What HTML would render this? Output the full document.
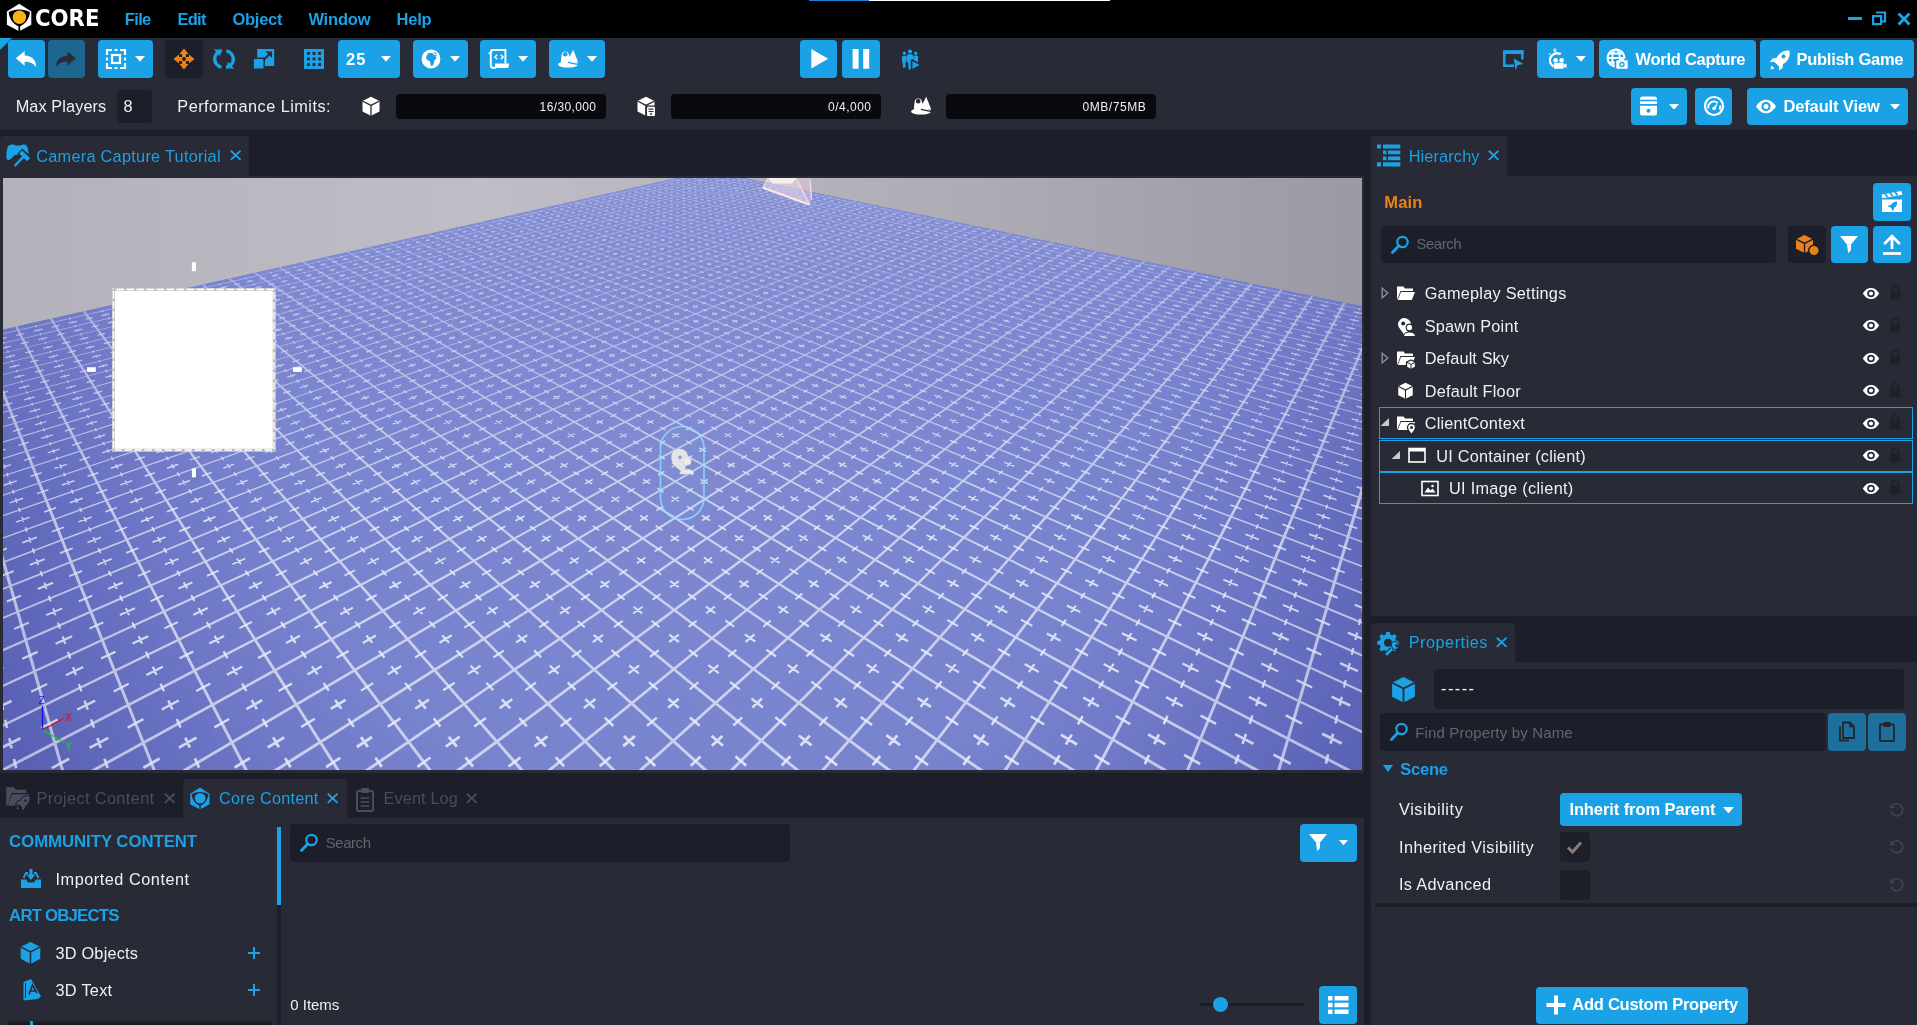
<!DOCTYPE html>
<html><head><meta charset="utf-8"><title>Core Editor</title>
<style>
html,body{margin:0;padding:0;background:#282a35;overflow:hidden}
body{width:1917px;height:1025px;position:relative;font-family:"Liberation Sans",sans-serif;}
#r{position:absolute;left:0;top:0;width:1917px;height:1025px;overflow:hidden;background:#282a35;will-change:transform}
#r div,#r svg,#r span{position:absolute;display:block}
.t{white-space:nowrap;line-height:1}
</style></head><body><div id="r">
<div style="left:0px;top:0px;width:1917px;height:38px;background:#000;"></div>
<div style="left:809.3px;top:0px;width:59.4px;height:1.2px;background:#1a7fd8;"></div>
<div style="left:868.7px;top:0px;width:241.3px;height:1.2px;background:#fff;"></div>
<div style="left:0px;top:130px;width:1917px;height:895px;background:#1c1f29;"></div>
<div style="left:0px;top:136px;width:248.5px;height:42px;background:#282a35;border-radius:4px 4px 0 0;"></div>
<div style="left:0px;top:176px;width:1364px;height:597px;background:#282a35;"></div>
<div style="left:1371px;top:136px;width:136px;height:42px;background:#282a35;border-radius:4px 4px 0 0;"></div>
<div style="left:1371px;top:176px;width:546px;height:440px;background:#282a35;"></div>
<div style="left:1371px;top:623px;width:144px;height:40px;background:#282a35;border-radius:4px 4px 0 0;"></div>
<div style="left:1371px;top:662px;width:546px;height:363px;background:#282a35;"></div>
<div style="left:183px;top:779px;width:163.7px;height:40px;background:#282a35;border-radius:4px 4px 0 0;"></div>
<div style="left:0px;top:818px;width:1364px;height:207px;background:#282a35;"></div>
<svg style="left:3px;top:178px" width="1359" height="592" viewBox="3 178 1359 592"><defs><linearGradient id="sky" x1="0" y1="0" x2="1" y2="0"><stop offset="0" stop-color="#b3b2bb"/><stop offset="0.35" stop-color="#bfbec7"/><stop offset="0.7" stop-color="#aeadb6"/><stop offset="1" stop-color="#9b9aa4"/></linearGradient><filter id="bl" x="0" y="170" width="1370" height="610" filterUnits="userSpaceOnUse"><feGaussianBlur stdDeviation=".55"/></filter><radialGradient id="flr" gradientUnits="userSpaceOnUse" cx="700" cy="400" r="860"><stop offset="0" stop-color="#7f8ad2"/><stop offset="0.5" stop-color="#7883ce"/><stop offset="1" stop-color="#565eb5"/></radialGradient><clipPath id="fc"><path id="fp" d="M-2 330.7L709.1 170.6L1367 307.4L1367 775L-2 775Z"/></clipPath></defs>
<rect x="3" y="178" width="1359" height="592" fill="url(#sky)"/>
<use href="#fp" fill="url(#flr)"/>
<g clip-path="url(#fc)"><g filter="url(#bl)">
<path fill="#eceefa" fill-opacity="0.72" d="M66.6 779.1L-3.6 530.8L-6.5 531.7L63.7 780ZM159.3 778.6L-3.8 371.6L-6.4 372.7L156.5 779.7ZM252 778L17.3 326L15.2 327.1L249.3 779.4ZM344.5 777.5L51.9 318.2L50 319.3L342 779.1ZM439 779.7L84.8 310.7L83.2 311.9L436.6 781.5ZM531.7 779.2L116.3 303.6L114.9 304.8L529.4 781.2ZM624.3 778.7L146.5 296.8L145.3 298L622.2 780.9ZM716.8 778.3L175.4 290.3L174.3 291.5L714.8 780.5ZM809.2 777.8L203.1 284L202.1 285.2L807.3 780.1ZM901.5 777.4L229.6 278.1L228.8 279.2L899.7 779.8ZM993.7 776.9L255.1 272.3L254.4 273.4L992 779.4ZM1090.1 779.2L279.7 266.8L279 267.8L1088.5 781.7ZM1182.4 778.8L303.3 261.5L302.7 262.5L1180.9 781.3ZM1274.7 778.3L326 256.4L325.5 257.3L1273.2 781ZM1366.8 777.9L347.8 251.5L347.4 252.4L1365.5 780.5ZM1374.3 736.4L368.9 246.8L368.5 247.6L1373.2 738.8ZM1371.6 694.7L389.2 242.2L388.9 243L1370.6 696.8ZM1373.6 659.3L408.8 237.8L408.5 238.6L1372.8 661.3ZM1371.2 625.6L427.8 233.6L427.5 234.3L1370.5 627.4ZM1373.1 596.7L446.1 229.5L445.8 230.1L1372.4 598.3ZM1370.9 568.8L463.8 225.5L463.5 226.1L1370.4 570.4ZM1372.7 544.8L480.9 221.7L480.7 222.3L1372.1 546.2ZM1370.7 521.4L497.5 218L497.3 218.5L1370.2 522.7ZM1372.3 501L513.5 214.4L513.3 214.9L1371.9 502.3ZM1370.5 481.1L529 210.9L528.9 211.4L1370.1 482.3ZM1372 463.7L544.1 207.5L543.9 208L1371.7 464.8ZM1370.3 446.5L558.7 204.2L558.6 204.7L1370 447.5ZM1371.7 431.4L572.9 201L572.7 201.5L1371.5 432.4ZM1370.2 416.5L586.7 197.9L586.5 198.4L1370 417.4ZM1371.5 403.3L600 194.9L599.9 195.4L1371.3 404.1ZM1372.8 390.9L613 192L612.9 192.5L1372.6 391.7ZM1371.3 378.5L625.6 189.1L625.5 189.6L1371.1 379.3ZM1372.5 367.6L637.9 186.3L637.8 186.9L1372.3 368.3ZM1371.2 356.6L649.8 183.7L649.7 184.2L1371 357.3ZM1372.3 346.8L661.4 181L661.3 181.6L1372.1 347.4ZM1371 337L672.7 178.5L672.6 179L1370.9 337.6ZM1372.1 328.2L683.7 176L683.6 176.6L1371.9 328.8ZM1370.9 319.4L694.5 173.6L694.3 174.1L1370.8 319.9ZM1371.9 311.4L704.9 171.3L704.8 171.8L1371.8 312ZM1369.6 780.3L1371.7 768.7L1368.7 768.1L1366.7 779.7ZM1277.1 780.9L1371.7 462.3L1368.8 461.4L1274.2 780.1ZM1185.7 778.6L1371.2 329.6L1368.9 328.6L1182.9 777.5ZM1093.3 779.2L1345.4 303.2L1343.5 302.2L1090.6 777.8ZM1000.8 779.8L1313.1 296.5L1311.4 295.4L998.3 778.2ZM908.1 780.4L1282.2 290.2L1280.7 289L905.8 778.6ZM815.4 780.9L1252.5 284L1251.2 282.8L813.1 779ZM722.5 781.5L1224 278.1L1222.9 277L720.4 779.4ZM629.6 782L1196.7 272.4L1195.7 271.3L627.6 779.8ZM540.1 779.6L1170.4 266.9L1169.6 265.9L538.2 777.3ZM447.3 780.2L1145.2 261.7L1144.4 260.6L445.5 777.7ZM354.3 780.7L1120.8 256.6L1120.2 255.6L352.6 778.2ZM261.3 781.2L1097.4 251.7L1096.8 250.8L259.7 778.6ZM168.1 781.7L1074.8 247L1074.3 246.1L166.6 779.1ZM74.8 782.2L1053.1 242.5L1052.6 241.6L73.4 779.6ZM-7.3 776.8L1032 238.1L1031.6 237.3L-8.6 774.2ZM-4.5 730.5L1011.7 233.8L1011.4 233.1L-5.7 728.2ZM-7.1 691.7L992.1 229.7L991.8 229L-8.1 689.6ZM-4.7 654.7L973.1 225.8L972.8 225.1L-5.5 652.7ZM-7 623.2L954.8 221.9L954.5 221.3L-7.7 621.4ZM-4.7 592.9L937 218.2L936.8 217.6L-5.4 591.2ZM-6.8 566.9L919.8 214.6L919.6 214.1L-7.4 565.4ZM-4.8 541.6L903.1 211.2L902.9 210.6L-5.3 540.2ZM-6.7 519.8L887 207.8L886.8 207.3L-7.2 518.5ZM-4.8 498.4L871.3 204.5L871.1 204L-5.2 497.2ZM-6.6 479.8L856.1 201.4L855.9 200.8L-7 478.7ZM-4.9 461.5L841.3 198.3L841.2 197.8L-5.2 460.4ZM-6.5 445.4L827 195.3L826.8 194.8L-6.8 444.4ZM-4.9 429.5L813 192.4L812.9 191.9L-5.1 428.6ZM-6.4 415.5L799.5 189.6L799.3 189.1L-6.7 414.7ZM-4.9 401.6L786.3 186.9L786.2 186.3L-5.1 400.8ZM-6.3 389.4L773.5 184.2L773.3 183.7L-6.5 388.6ZM-7.7 377.8L761 181.6L760.9 181.1L-7.9 377ZM-6.3 366.2L748.9 179.1L748.7 178.5L-6.4 365.5ZM-7.5 355.9L737 176.6L736.9 176.1L-7.7 355.3ZM-6.2 345.6L725.5 174.2L725.4 173.7L-6.3 345ZM-7.4 336.4L714.3 171.9L714.2 171.3L-7.5 335.8Z"/>
<path fill="none" stroke="#eceefa" stroke-opacity="0.85" stroke-width="1.25" d="M-6.8 453.1l12.3 -3.8M.1 453l-1.3 -3.7M-31.2 460.5l11.2 -3.4M2.6 460.4l-1.2 -3.4M-11.5 438.5l11.9 -3.5M-4.9 438.5l-1.2 -3.5M-35.2 445.5l10.9 -3.2M-2.5 445.4l-1.1 -3.2M-16 424.9l11.6 -3.3M-9.6 424.9l-1.1 -3.3M-39 431.4l10.5 -3M-7.3 431.4l-1 -3M-20.2 412l11.3 -3.1M-14 412l-1.1 -3.1M-42.6 418.2l10.3 -2.8M-11.9 418.1l-1 -2.8M-24.1 399.9l11 -2.9M-18.1 399.9l-1 -2.9M-46 405.7l10 -2.7M-16.1 405.7l-.9 -2.6M-27.9 388.5l10.7 -2.8M-22 388.5l-.9 -2.8M-49.1 394l9.7 -2.5M-20.1 393.9l-.9 -2.5M-31.4 377.7l10.5 -2.6M-25.7 377.7l-.9 -2.6M-52.1 382.9l9.5 -2.4M-23.9 382.8l-.8 -2.4M47.7 452.9l11.8 -3.7M54.5 452.9l-1.7 -3.7M24.2 460.4l10.8 -3.4M57.9 460.3l-1.6 -3.4M41.3 438.4l11.5 -3.5M47.8 438.4l-1.6 -3.5M18.4 445.4l10.5 -3.2M51 445.3l-1.5 -3.2M35.2 424.8l11.2 -3.3M41.6 424.8l-1.5 -3.3M12.9 431.3l10.2 -3M44.6 431.3l-1.4 -3M29.5 411.9l10.9 -3.1M35.7 411.9l-1.4 -3.1M7.8 418.1l9.9 -2.8M38.5 418l-1.3 -2.8M24.1 399.8l10.7 -2.9M30.1 399.8l-1.3 -2.9M2.9 405.6l9.7 -2.7M32.8 405.6l-1.2 -2.6M19 388.4l10.4 -2.8M24.9 388.4l-1.3 -2.8M-1.6 393.9l9.4 -2.5M27.4 393.8l-1.1 -2.5M14.2 377.6l10.2 -2.6M19.9 377.6l-1.2 -2.6M-5.9 382.8l9.2 -2.4M22.3 382.7l-1.1 -2.4M9.7 367.3l9.9 -2.5M15.2 367.3l-1.1 -2.5M-10 372.3l9 -2.3M17.4 372.2l-1 -2.2M5.3 357.6l9.7 -2.4M10.7 357.6l-1.1 -2.3M-13.8 362.3l8.8 -2.1M12.9 362.3l-1 -2.1M1.2 348.4l9.5 -2.3M6.5 348.4l-1 -2.2M-17.5 352.9l8.6 -2M8.5 352.8l-.9 -2M-2.7 339.6l9.3 -2.1M2.5 339.6l-1 -2.1M-21 343.9l8.4 -1.9M4.4 343.8l-.9 -1.9M.5 335.3l-.8 -1.8M102.2 452.8l11.4 -3.7M109 452.8l-2.1 -3.7M79.5 460.3l10.4 -3.4M113.2 460.2l-2 -3.4M94 438.3l11.1 -3.5M100.6 438.3l-2 -3.5M71.9 445.3l10.1 -3.2M104.6 445.2l-1.8 -3.2M86.3 424.7l10.8 -3.3M92.7 424.7l-1.9 -3.3M64.8 431.2l9.8 -3M96.5 431.2l-1.7 -3M79.1 411.8l10.6 -3.1M85.3 411.8l-1.8 -3.1M58.1 418l9.6 -2.8M88.8 417.9l-1.6 -2.8M72.3 399.7l10.3 -2.9M78.3 399.7l-1.7 -2.9M51.8 405.6l9.3 -2.7M81.6 405.5l-1.5 -2.6M65.9 388.3l10.1 -2.8M71.7 388.3l-1.6 -2.8M45.9 393.8l9.1 -2.5M74.9 393.8l-1.4 -2.5M59.8 377.5l9.8 -2.6M65.5 377.5l-1.5 -2.6M40.3 382.7l8.9 -2.4M68.5 382.7l-1.4 -2.4M54 367.3l9.6 -2.5M59.6 367.3l-1.4 -2.5M35 372.2l8.7 -2.3M62.4 372.2l-1.3 -2.2M48.6 357.6l9.4 -2.4M54 357.6l-1.4 -2.3M30 362.2l8.5 -2.1M56.7 362.2l-1.2 -2.1M43.4 348.3l9.2 -2.2M48.7 348.3l-1.3 -2.2M25.2 352.8l8.3 -2M51.2 352.8l-1.2 -2M38.5 339.6l9 -2.1M43.6 339.6l-1.2 -2.1M20.6 343.8l8.1 -1.9M46 343.8l-1.1 -1.9M33.8 331.2l8.8 -2M38.8 331.2l-1.2 -2M16.3 335.3l8 -1.8M41.1 335.2l-1.1 -1.8M36.4 327.1l-1 -1.7M156.6 452.7l11 -3.7M163.4 452.7l-2.6 -3.7M134.8 460.2l10 -3.4M168.5 460.1l-2.3 -3.4M146.7 438.2l10.7 -3.5M153.3 438.2l-2.4 -3.5M125.5 445.2l9.7 -3.2M158.1 445.1l-2.2 -3.2M137.4 424.6l10.4 -3.3M143.8 424.5l-2.3 -3.3M116.7 431.1l9.5 -3M148.3 431.1l-2.1 -3M128.7 411.7l10.2 -3.1M134.9 411.7l-2.1 -3.1M108.5 417.9l9.3 -2.8M139.1 417.8l-1.9 -2.8M120.5 399.6l10 -2.9M126.5 399.6l-2 -2.9M100.7 405.5l9 -2.7M130.5 405.4l-1.8 -2.6M112.7 388.2l9.7 -2.8M118.6 388.2l-1.9 -2.8M93.4 393.7l8.8 -2.5M122.3 393.7l-1.7 -2.5M105.4 377.4l9.5 -2.6M111 377.4l-1.8 -2.6M86.5 382.6l8.6 -2.4M114.6 382.6l-1.6 -2.4M98.4 367.2l9.3 -2.5M103.9 367.2l-1.7 -2.5M79.9 372.1l8.4 -2.3M107.3 372.1l-1.6 -2.2M91.8 357.5l9.1 -2.4M97.2 357.5l-1.6 -2.3M73.7 362.2l8.3 -2.1M100.4 362.1l-1.5 -2.1M85.5 348.3l8.9 -2.2M90.8 348.3l-1.6 -2.2M67.8 352.7l8.1 -2M93.9 352.7l-1.4 -2M79.6 339.5l8.8 -2.1M84.7 339.5l-1.5 -2.1M62.2 343.7l7.9 -1.9M87.6 343.7l-1.3 -1.9M73.9 331.2l8.6 -2M78.9 331.2l-1.4 -2M56.9 335.2l7.7 -1.8M81.7 335.2l-1.3 -1.8M68.5 323.2l8.4 -1.9M73.4 323.2l-1.3 -1.9M51.8 327.1l7.6 -1.8M76 327l-1.2 -1.7M70.6 319.3l-1.2 -1.7M211 452.6l10.5 -3.7M217.8 452.6l-3 -3.7M190.1 460l9.6 -3.4M223.8 460l-2.7 -3.4M199.4 438.1l10.3 -3.5M206 438.1l-2.8 -3.5M179 445.1l9.3 -3.2M211.6 445l-2.6 -3.2M188.5 424.5l10.1 -3.3M194.9 424.4l-2.7 -3.3M168.5 431l9.1 -3M200.2 431l-2.4 -3M178.3 411.6l9.8 -3.1M184.5 411.6l-2.5 -3.1M158.8 417.8l8.9 -2.8M189.4 417.7l-2.3 -2.8M168.6 399.5l9.6 -2.9M174.6 399.5l-2.4 -2.9M149.5 405.4l8.7 -2.7M179.3 405.3l-2.1 -2.6M159.5 388.1l9.4 -2.8M165.4 388.1l-2.2 -2.8M140.9 393.6l8.5 -2.5M169.8 393.6l-2 -2.5M150.9 377.3l9.2 -2.6M156.6 377.3l-2.1 -2.6M132.6 382.5l8.3 -2.4M160.8 382.5l-1.9 -2.4M142.7 367.1l9 -2.5M148.3 367.1l-2 -2.5M124.9 372l8.2 -2.3M152.3 372l-1.8 -2.2M135 357.4l8.9 -2.4M140.4 357.4l-1.9 -2.3M117.5 362.1l8 -2.1M144.2 362.1l-1.7 -2.1M127.6 348.2l8.7 -2.2M132.9 348.2l-1.8 -2.2M110.5 352.7l7.8 -2M136.5 352.6l-1.6 -2M120.7 339.4l8.5 -2.1M125.8 339.4l-1.7 -2.1M103.8 343.7l7.7 -1.9M129.2 343.6l-1.6 -1.9M114 331.1l8.4 -2M119 331.1l-1.6 -2M97.5 335.1l7.5 -1.8M122.3 335.1l-1.5 -1.8M107.7 323.2l8.2 -1.9M112.5 323.1l-1.6 -1.9M91.5 327l7.4 -1.8M115.6 327l-1.4 -1.7M101.6 315.6l8 -1.9M106.4 315.6l-1.5 -1.8M85.7 319.2l7.2 -1.7M109.3 319.2l-1.3 -1.7M103.3 311.8l-1.3 -1.6M265.3 452.5l10.1 -3.7M272.1 452.5l-3.5 -3.7M245.3 459.9l9.2 -3.4M279 459.8l-3.1 -3.4M252 438l9.9 -3.5M258.6 438l-3.2 -3.5M232.4 445l9 -3.2M265.1 444.9l-2.9 -3.2M239.6 424.4l9.7 -3.3M245.9 424.3l-3 -3.3M220.4 430.9l8.8 -3M252 430.8l-2.8 -3M227.8 411.5l9.5 -3.1M234 411.5l-2.9 -3.1M209 417.7l8.6 -2.8M239.7 417.6l-2.6 -2.8M216.8 399.5l9.3 -2.9M222.8 399.4l-2.7 -2.9M198.4 405.3l8.4 -2.7M228.1 405.2l-2.5 -2.6M206.3 388.1l9.1 -2.8M212.2 388l-2.6 -2.8M188.3 393.5l8.2 -2.5M217.2 393.5l-2.3 -2.5M196.4 377.3l8.9 -2.6M202.1 377.3l-2.4 -2.6M178.8 382.5l8.1 -2.4M206.9 382.4l-2.2 -2.4M187.1 367l8.7 -2.5M192.6 367l-2.3 -2.5M169.8 372l7.9 -2.3M197.2 371.9l-2.1 -2.2M178.2 357.3l8.6 -2.4M183.6 357.3l-2.2 -2.3M161.2 362l7.7 -2.1M187.9 362l-2 -2.1M169.8 348.1l8.4 -2.2M175 348.1l-2.1 -2.2M153.1 352.6l7.6 -2M179.1 352.5l-1.9 -2M161.7 339.4l8.3 -2.1M166.9 339.4l-2 -2.1M145.4 343.6l7.5 -1.9M170.8 343.6l-1.8 -1.9M154.1 331l8.1 -2M159.1 331l-1.9 -2M138.1 335.1l7.3 -1.8M162.8 335l-1.7 -1.8M146.8 323.1l8 -1.9M151.7 323.1l-1.8 -1.9M131.1 326.9l7.2 -1.8M155.3 326.9l-1.6 -1.7M139.9 315.5l7.8 -1.9M144.7 315.5l-1.7 -1.8M124.4 319.2l7 -1.7M148 319.1l-1.5 -1.7M133.2 308.3l7.7 -1.8M137.9 308.2l-1.6 -1.8M118.1 311.8l6.9 -1.6M141.1 311.7l-1.5 -1.6M134.5 304.6l-1.4 -1.5M304.7 437.9l9.5 -3.5M311.2 437.9l-3.7 -3.5M285.9 444.8l8.6 -3.2M318.5 444.8l-3.3 -3.2M290.6 424.3l9.3 -3.3M297 424.2l-3.4 -3.3M272.2 430.8l8.4 -3M303.8 430.7l-3.1 -3M277.4 411.4l9.1 -3.1M283.5 411.4l-3.2 -3.1M259.3 417.6l8.3 -2.8M290 417.5l-2.9 -2.8M264.9 399.4l8.9 -2.9M270.9 399.4l-3.1 -2.9M247.2 405.2l8.1 -2.7M276.9 405.1l-2.8 -2.6M253.1 388l8.8 -2.8M258.9 388l-2.9 -2.8M235.7 393.5l7.9 -2.5M264.6 393.4l-2.6 -2.5M241.9 377.2l8.6 -2.6M247.6 377.2l-2.7 -2.6M224.9 382.4l7.8 -2.4M253 382.3l-2.5 -2.4M231.4 367l8.4 -2.5M236.9 367l-2.6 -2.5M214.7 371.9l7.6 -2.2M242 371.8l-2.3 -2.2M221.4 357.3l8.3 -2.4M226.8 357.3l-2.5 -2.3M205 361.9l7.5 -2.1M231.6 361.9l-2.2 -2.1M211.8 348.1l8.2 -2.2M217.1 348.1l-2.3 -2.2M195.7 352.5l7.4 -2M221.7 352.5l-2.1 -2M202.8 339.3l8 -2.1M207.9 339.3l-2.2 -2.1M187 343.5l7.2 -1.9M212.3 343.5l-2 -1.9M194.2 331l7.9 -2M199.2 331l-2.1 -2M178.6 335l7.1 -1.8M203.4 335l-1.9 -1.8M186 323l7.7 -1.9M190.9 323l-2 -1.9M170.7 326.9l7 -1.8M194.9 326.8l-1.8 -1.7M178.1 315.4l7.6 -1.9M182.9 315.4l-1.9 -1.8M163.1 319.1l6.8 -1.7M186.7 319.1l-1.7 -1.7M170.6 308.2l7.5 -1.8M175.3 308.2l-1.8 -1.8M155.9 311.7l6.7 -1.6M179 311.7l-1.7 -1.6M163.5 301.3l7.4 -1.7M168 301.3l-1.8 -1.7M149 304.6l6.6 -1.5M171.5 304.6l-1.6 -1.5M164.4 297.8l-1.5 -1.5M357.3 437.8l9 -3.5M363.8 437.7l-4.1 -3.5M339.3 444.7l8.2 -3.2M371.9 444.7l-3.7 -3.2M341.6 424.2l8.9 -3.3M348 424.1l-3.8 -3.3M324 430.7l8.1 -3M355.6 430.6l-3.5 -3M326.9 411.3l8.7 -3.1M333 411.3l-3.6 -3.1M309.5 417.5l7.9 -2.8M340.2 417.5l-3.3 -2.8M313 399.3l8.6 -2.9M319 399.3l-3.4 -2.9M295.9 405.1l7.8 -2.7M325.7 405l-3.1 -2.6M299.8 387.9l8.4 -2.8M305.7 387.9l-3.2 -2.8M283.1 393.4l7.6 -2.5M312 393.3l-2.9 -2.5M287.4 377.1l8.3 -2.6M293.1 377.1l-3 -2.6M271 382.3l7.5 -2.4M299.1 382.2l-2.7 -2.4M275.7 366.9l8.2 -2.5M281.2 366.9l-2.9 -2.5M259.5 371.8l7.4 -2.2M286.9 371.8l-2.6 -2.2M264.5 357.2l8 -2.4M269.9 357.2l-2.7 -2.3M248.7 361.9l7.2 -2.1M275.3 361.8l-2.5 -2.1M253.9 348l7.9 -2.2M259.2 348l-2.6 -2.2M238.3 352.4l7.1 -2M264.3 352.4l-2.3 -2M243.8 339.3l7.8 -2.1M249 339.2l-2.5 -2.1M228.5 343.5l7 -1.9M253.9 343.4l-2.2 -1.9M234.2 330.9l7.6 -2M239.3 330.9l-2.4 -2M219.2 334.9l6.9 -1.8M243.9 334.9l-2.1 -1.8M225.1 323l7.5 -1.9M230 323l-2.2 -1.9M210.3 326.8l6.8 -1.8M234.4 326.8l-2 -1.7M216.4 315.4l7.4 -1.9M221.2 315.4l-2.1 -1.8M201.8 319.1l6.6 -1.7M225.4 319l-1.9 -1.7M208 308.1l7.3 -1.8M212.7 308.1l-2.1 -1.8M193.7 311.6l6.5 -1.6M216.8 311.6l-1.8 -1.6M200.1 301.2l7.2 -1.7M204.6 301.2l-2 -1.7M185.9 304.6l6.4 -1.5M208.5 304.5l-1.8 -1.5M192.4 294.6l7 -1.6M196.9 294.6l-1.9 -1.6M178.5 297.8l6.3 -1.5M200.6 297.8l-1.7 -1.5M193 291.3l-1.6 -1.4M409.9 437.7l8.6 -3.5M416.4 437.6l-4.5 -3.5M392.7 444.6l7.8 -3.2M425.3 444.5l-4.1 -3.2M392.6 424.1l8.5 -3.3M399 424l-4.2 -3.3M375.7 430.6l7.7 -3M407.3 430.5l-3.8 -3M376.3 411.3l8.4 -3.1M382.5 411.2l-4 -3.1M359.8 417.4l7.6 -2.8M390.4 417.4l-3.6 -2.8M361 399.2l8.2 -2.9M367 399.2l-3.7 -2.9M344.7 405l7.5 -2.7M374.4 404.9l-3.4 -2.6M346.6 387.8l8.1 -2.8M352.4 387.8l-3.5 -2.7M330.5 393.3l7.3 -2.5M359.4 393.2l-3.2 -2.5M332.9 377l8 -2.6M338.6 377l-3.3 -2.6M317.1 382.2l7.2 -2.4M345.2 382.2l-3 -2.4M319.9 366.8l7.9 -2.5M325.5 366.8l-3.2 -2.5M304.4 371.7l7.1 -2.2M331.7 371.7l-2.9 -2.2M307.6 357.1l7.7 -2.4M313 357.1l-3 -2.3M292.3 361.8l7 -2.1M319 361.8l-2.7 -2.1M296 347.9l7.6 -2.2M301.2 347.9l-2.9 -2.2M280.9 352.4l6.9 -2M306.9 352.3l-2.6 -2M284.9 339.2l7.5 -2.1M290 339.2l-2.7 -2.1M270.1 343.4l6.8 -1.9M295.4 343.4l-2.5 -1.9M274.3 330.9l7.4 -2M279.3 330.8l-2.6 -2M259.7 334.9l6.7 -1.8M284.4 334.8l-2.3 -1.8M264.2 322.9l7.3 -1.9M269.1 322.9l-2.5 -1.9M249.9 326.7l6.6 -1.8M274 326.7l-2.2 -1.7M254.6 315.3l7.2 -1.9M259.4 315.3l-2.4 -1.8M240.5 319l6.5 -1.7M264 319l-2.1 -1.7M245.4 308.1l7.1 -1.8M250.1 308.1l-2.3 -1.8M231.5 311.6l6.4 -1.6M254.5 311.6l-2 -1.6M236.6 301.2l7 -1.7M241.2 301.2l-2.2 -1.7M222.9 304.5l6.3 -1.5M245.5 304.5l-1.9 -1.5M228.2 294.5l6.9 -1.6M232.7 294.5l-2.1 -1.6M214.7 297.7l6.2 -1.5M236.8 297.7l-1.9 -1.5M220.1 288.2l6.8 -1.6M224.5 288.2l-2 -1.5M206.8 291.3l6.1 -1.4M228.4 291.2l-1.8 -1.4M220.5 285l-1.7 -1.3M462.4 437.5l8.2 -3.5M469 437.5l-4.9 -3.5M446.1 444.5l7.5 -3.2M478.7 444.4l-4.4 -3.2M443.6 424l8.1 -3.3M449.9 423.9l-4.6 -3.3M427.5 430.5l7.4 -3M459 430.4l-4.2 -3M425.8 411.2l8 -3.1M432 411.1l-4.3 -3.1M409.9 417.3l7.3 -2.8M440.6 417.3l-3.9 -2.8M409.1 399.1l7.9 -2.9M415.1 399.1l-4.1 -2.9M393.4 404.9l7.1 -2.7M423.2 404.8l-3.7 -2.6M393.3 387.7l7.8 -2.8M399.1 387.7l-3.9 -2.7M377.9 393.2l7 -2.5M406.8 393.1l-3.5 -2.5M378.3 376.9l7.7 -2.6M384 376.9l-3.6 -2.6M363.2 382.1l6.9 -2.4M391.2 382.1l-3.3 -2.4M364.2 366.7l7.6 -2.5M369.7 366.7l-3.5 -2.5M349.2 371.7l6.8 -2.2M376.6 371.6l-3.1 -2.2M350.8 357.1l7.5 -2.4M356.2 357l-3.3 -2.3M336 361.7l6.7 -2.1M362.6 361.7l-3 -2.1M338 347.9l7.4 -2.2M343.3 347.9l-3.1 -2.2M323.5 352.3l6.6 -2M349.4 352.3l-2.8 -2M325.9 339.1l7.2 -2.1M331 339.1l-3 -2.1M311.6 343.3l6.5 -1.9M336.9 343.3l-2.7 -1.9M314.3 330.8l7.1 -2M319.3 330.8l-2.8 -2M300.2 334.8l6.4 -1.8M324.9 334.8l-2.6 -1.8M303.3 322.9l7 -1.9M308.2 322.8l-2.7 -1.9M289.4 326.7l6.3 -1.7M313.5 326.6l-2.4 -1.7M292.8 315.3l6.9 -1.9M297.6 315.3l-2.6 -1.8M279.1 318.9l6.3 -1.7M302.7 318.9l-2.3 -1.7M282.8 308l6.8 -1.8M287.5 308l-2.5 -1.8M269.3 311.5l6.2 -1.6M292.3 311.5l-2.2 -1.6M273.2 301.1l6.8 -1.7M277.7 301.1l-2.4 -1.7M259.9 304.5l6.1 -1.5M282.4 304.4l-2.1 -1.5M264 294.5l6.7 -1.6M268.5 294.5l-2.3 -1.6M250.9 297.7l6 -1.5M272.9 297.7l-2 -1.5M255.2 288.1l6.6 -1.6M259.6 288.1l-2.2 -1.5M242.2 291.2l5.9 -1.4M263.8 291.2l-1.9 -1.4M246.7 282l6.5 -1.5M251 282l-2.1 -1.5M234 285l5.8 -1.3M255.1 285l-1.9 -1.3M246.7 279l-1.8 -1.3M514.9 437.4l7.8 -3.5M521.5 437.4l-5.3 -3.5M499.5 444.4l7.1 -3.2M532 444.3l-4.8 -3.2M494.5 423.8l7.7 -3.3M500.9 423.8l-5 -3.3M479.2 430.4l7 -3M510.7 430.3l-4.5 -3M475.2 411.1l7.6 -3.1M481.4 411l-4.7 -3.1M460.1 417.2l6.9 -2.8M490.7 417.2l-4.2 -2.8M457.1 399l7.5 -2.9M463.1 399l-4.4 -2.9M442.2 404.8l6.8 -2.7M471.9 404.8l-4 -2.6M440 387.6l7.5 -2.8M445.8 387.6l-4.2 -2.7M425.2 393.1l6.7 -2.5M454.1 393.1l-3.8 -2.5M423.8 376.9l7.4 -2.6M429.5 376.8l-4 -2.6M409.2 382l6.7 -2.4M437.3 382l-3.6 -2.4M408.4 366.7l7.3 -2.5M414 366.6l-3.7 -2.5M394 371.6l6.6 -2.2M421.4 371.5l-3.4 -2.2M393.9 357l7.2 -2.4M399.3 357l-3.6 -2.3M379.7 361.6l6.5 -2.1M406.3 361.6l-3.2 -2.1M380 347.8l7.1 -2.2M385.3 347.8l-3.4 -2.2M366 352.2l6.4 -2M392 352.2l-3.1 -2M366.9 339.1l7 -2.1M372 339l-3.2 -2.1M353.1 343.3l6.3 -1.9M378.4 343.2l-2.9 -1.9M354.4 330.7l6.9 -2M359.4 330.7l-3.1 -2M340.7 334.7l6.2 -1.8M365.4 334.7l-2.8 -1.8M342.4 322.8l6.8 -1.9M347.3 322.8l-2.9 -1.9M329 326.6l6.1 -1.7M353.1 326.6l-2.6 -1.7M331 315.2l6.7 -1.9M335.8 315.2l-2.8 -1.8M317.8 318.9l6.1 -1.7M341.3 318.8l-2.5 -1.7M320.1 308l6.6 -1.8M324.8 308l-2.7 -1.8M307 311.5l6 -1.6M330.1 311.4l-2.4 -1.6M309.7 301.1l6.6 -1.7M314.3 301.1l-2.6 -1.7M296.8 304.4l5.9 -1.5M319.3 304.4l-2.3 -1.5M299.7 294.4l6.5 -1.6M304.2 294.4l-2.5 -1.6M287 297.6l5.8 -1.5M309 297.6l-2.2 -1.4M290.2 288.1l6.4 -1.6M294.6 288.1l-2.3 -1.5M277.6 291.2l5.7 -1.4M299.2 291.1l-2.1 -1.4M281 282l6.3 -1.5M285.3 282l-2.3 -1.5M268.6 284.9l5.7 -1.3M289.8 284.9l-2 -1.3M272.2 276.1l6.2 -1.4M276.4 276.1l-2.2 -1.4M260 279l5.6 -1.3M280.7 278.9l-1.9 -1.3M272 273.2l-1.9 -1.2M567.4 437.3l7.4 -3.5M574 437.3l-5.7 -3.5M552.8 444.3l6.7 -3.2M585.3 444.2l-5.2 -3.2M545.4 423.7l7.3 -3.3M551.8 423.7l-5.3 -3.3M530.9 430.3l6.6 -3M562.4 430.2l-4.9 -3M524.7 411l7.3 -3.1M530.8 411l-5 -3.1M510.3 417.1l6.6 -2.8M540.8 417.1l-4.6 -2.8M505.1 398.9l7.2 -2.9M511.1 398.9l-4.8 -2.9M490.8 404.7l6.5 -2.7M520.5 404.7l-4.3 -2.6M486.7 387.5l7.1 -2.8M492.5 387.5l-4.5 -2.7M472.5 393l6.5 -2.5M501.4 393l-4.1 -2.5M469.2 376.8l7.1 -2.6M474.9 376.8l-4.3 -2.6M455.2 382l6.4 -2.4M483.3 381.9l-3.8 -2.4M452.6 366.6l7 -2.5M458.2 366.6l-4 -2.5M438.8 371.5l6.3 -2.2M466.2 371.4l-3.6 -2.2M437 356.9l6.9 -2.4M442.3 356.9l-3.8 -2.3M423.3 361.6l6.2 -2.1M449.9 361.5l-3.5 -2.1M422.1 347.7l6.8 -2.2M427.3 347.7l-3.6 -2.2M408.6 352.2l6.2 -2M434.5 352.1l-3.3 -2M407.9 339l6.7 -2.1M413 339l-3.5 -2.1M394.5 343.2l6.1 -1.9M419.8 343.2l-3.1 -1.9M394.4 330.7l6.7 -2M399.4 330.7l-3.3 -2M381.2 334.7l6 -1.8M405.9 334.6l-3 -1.8M381.5 322.7l6.6 -1.9M386.4 322.7l-3.2 -1.9M368.5 326.6l5.9 -1.7M392.6 326.5l-2.8 -1.7M369.2 315.2l6.5 -1.9M374 315.2l-3 -1.8M356.4 318.8l5.9 -1.7M379.9 318.8l-2.7 -1.7M357.5 307.9l6.4 -1.8M362.1 307.9l-2.9 -1.8M344.8 311.4l5.8 -1.6M367.8 311.4l-2.6 -1.6M346.3 301l6.4 -1.7M350.8 301l-2.8 -1.7M333.7 304.4l5.7 -1.5M356.3 304.3l-2.5 -1.5M335.5 294.4l6.3 -1.6M340 294.4l-2.6 -1.6M323.1 297.6l5.6 -1.5M345.2 297.6l-2.4 -1.4M325.2 288l6.2 -1.6M329.6 288l-2.5 -1.5M313 291.1l5.6 -1.4M334.6 291.1l-2.3 -1.4M315.3 281.9l6.1 -1.5M319.6 281.9l-2.4 -1.5M303.3 284.9l5.5 -1.3M324.4 284.9l-2.2 -1.3M305.8 276.1l6 -1.4M310 276.1l-2.3 -1.4M293.9 278.9l5.4 -1.3M314.6 278.9l-2.1 -1.3M296.7 270.5l6 -1.4M300.9 270.5l-2.2 -1.4M285 273.2l5.4 -1.2M305.3 273.2l-2 -1.2M296.3 267.7l-1.9 -1.2M619.9 437.2l7 -3.5M626.5 437.2l-6.1 -3.5M606.1 444.2l6.3 -3.2M638.6 444.1l-5.5 -3.2M596.3 423.6l6.9 -3.3M602.7 423.6l-5.7 -3.3M582.5 430.2l6.3 -3M614 430.1l-5.2 -3M574.1 410.9l6.9 -3.1M580.2 410.9l-5.4 -3.1M560.4 417l6.3 -2.8M590.9 417l-4.9 -2.8M553.1 398.8l6.9 -2.9M559.1 398.8l-5.1 -2.9M539.5 404.6l6.2 -2.7M569.2 404.6l-4.6 -2.6M533.3 387.5l6.8 -2.8M539.1 387.4l-4.8 -2.7M519.8 392.9l6.2 -2.5M548.7 392.9l-4.4 -2.5M514.6 376.7l6.7 -2.6M520.3 376.7l-4.6 -2.6M501.2 381.9l6.1 -2.4M529.3 381.8l-4.1 -2.3M496.8 366.5l6.7 -2.5M502.4 366.5l-4.3 -2.5M483.6 371.4l6 -2.2M510.9 371.4l-3.9 -2.2M480 356.8l6.6 -2.4M485.4 356.8l-4.1 -2.3M466.9 361.5l6 -2.1M493.5 361.5l-3.7 -2.1M464 347.7l6.6 -2.2M469.3 347.6l-3.9 -2.2M451.1 352.1l5.9 -2M477 352l-3.5 -2M448.8 338.9l6.5 -2.1M454 338.9l-3.7 -2.1M436 343.1l5.9 -1.9M461.3 343.1l-3.4 -1.9M434.4 330.6l6.4 -2M439.4 330.6l-3.5 -2M421.7 334.6l5.8 -1.8M446.4 334.6l-3.2 -1.8M420.6 322.7l6.4 -1.9M425.5 322.7l-3.4 -1.9M408 326.5l5.7 -1.7M432.1 326.5l-3 -1.7M407.4 315.1l6.3 -1.9M412.2 315.1l-3.2 -1.8M395 318.8l5.7 -1.7M418.5 318.7l-2.9 -1.7M394.8 307.9l6.2 -1.8M399.5 307.9l-3.1 -1.8M382.5 311.4l5.6 -1.6M405.6 311.3l-2.8 -1.6M382.8 301l6.2 -1.7M387.3 301l-3 -1.7M370.6 304.3l5.5 -1.5M393.2 304.3l-2.7 -1.5M371.2 294.3l6.1 -1.6M375.7 294.3l-2.8 -1.6M359.3 297.5l5.5 -1.5M381.3 297.5l-2.5 -1.4M360.2 288l6 -1.6M364.6 288l-2.7 -1.5M348.4 291.1l5.4 -1.4M369.9 291l-2.4 -1.4M349.6 281.9l5.9 -1.5M353.9 281.9l-2.6 -1.5M337.9 284.8l5.3 -1.3M359 284.8l-2.3 -1.3M339.4 276.1l5.9 -1.4M343.6 276.1l-2.5 -1.4M327.9 278.9l5.3 -1.3M348.6 278.9l-2.2 -1.3M329.7 270.4l5.8 -1.4M333.8 270.4l-2.4 -1.4M318.2 273.2l5.2 -1.2M338.5 273.1l-2.2 -1.2M320.3 265.1l5.7 -1.3M324.3 265l-2.3 -1.3M309 267.7l5.2 -1.2M328.9 267.6l-2.1 -1.2M319.6 262.3l-2 -1.1M672.4 437.1l6.6 -3.5M678.9 437.1l-6.5 -3.5M659.4 444.1l6 -3.2M691.8 444l-5.9 -3.2M647.2 423.5l6.6 -3.3M653.5 423.5l-6.1 -3.3M634.2 430.1l5.9 -3M665.6 430l-5.5 -3M623.4 410.8l6.5 -3.1M629.6 410.8l-5.8 -3.1M610.5 416.9l5.9 -2.8M641 416.9l-5.2 -2.8M601.1 398.7l6.5 -2.9M607.1 398.7l-5.4 -2.9M588.2 404.5l5.9 -2.6M617.8 404.5l-4.9 -2.6M579.9 387.4l6.5 -2.8M585.8 387.4l-5.1 -2.7M567.1 392.8l5.9 -2.5M595.9 392.8l-4.7 -2.5M560 376.6l6.4 -2.6M565.6 376.6l-4.9 -2.6M547.2 381.8l5.8 -2.4M575.3 381.7l-4.4 -2.3M541 366.4l6.4 -2.5M546.6 366.4l-4.6 -2.5M528.4 371.3l5.8 -2.2M555.7 371.3l-4.2 -2.2M523.1 356.8l6.3 -2.4M528.5 356.8l-4.4 -2.3M510.5 361.4l5.7 -2.1M537.1 361.4l-4 -2.1M506 347.6l6.3 -2.2M511.3 347.6l-4.2 -2.2M493.6 352l5.7 -2M519.5 352l-3.8 -2M489.8 338.9l6.2 -2.1M494.9 338.8l-4 -2.1M477.5 343.1l5.6 -1.9M502.7 343l-3.6 -1.9M474.3 330.5l6.2 -2M479.3 330.5l-3.8 -2M462.1 334.6l5.6 -1.8M486.8 334.5l-3.4 -1.8M459.6 322.6l6.1 -1.9M464.5 322.6l-3.6 -1.9M447.5 326.4l5.5 -1.7M471.6 326.4l-3.2 -1.7M445.6 315l6.1 -1.9M450.3 315l-3.4 -1.8M433.6 318.7l5.5 -1.7M457.1 318.7l-3.1 -1.7M432.1 307.8l6 -1.8M436.8 307.8l-3.3 -1.8M420.3 311.3l5.4 -1.6M443.3 311.3l-3 -1.6M419.3 300.9l6 -1.7M423.8 300.9l-3.1 -1.7M407.5 304.2l5.4 -1.5M430.1 304.2l-2.8 -1.5M407 294.3l5.9 -1.6M411.4 294.3l-3 -1.6M395.4 297.5l5.3 -1.5M417.4 297.5l-2.7 -1.4M395.2 287.9l5.8 -1.6M399.6 287.9l-2.9 -1.5M383.7 291l5.2 -1.4M405.3 291l-2.6 -1.4M383.9 281.9l5.8 -1.5M388.2 281.9l-2.8 -1.5M372.5 284.8l5.2 -1.3M393.6 284.8l-2.5 -1.3M373 276l5.7 -1.4M377.2 276l-2.7 -1.4M361.8 278.8l5.1 -1.3M382.5 278.8l-2.4 -1.3M362.6 270.4l5.6 -1.4M366.7 270.4l-2.6 -1.4M351.5 273.1l5.1 -1.2M371.8 273.1l-2.3 -1.2M352.6 265l5.6 -1.3M356.6 265l-2.5 -1.3M341.6 267.6l5 -1.2M361.5 267.6l-2.2 -1.2M342.9 259.8l5.5 -1.3M346.9 259.8l-2.4 -1.3M332.1 262.3l5 -1.1M351.6 262.3l-2.1 -1.1M342 257.2l-2 -1.1M724.8 437l6.1 -3.5M731.4 437l-6.9 -3.5M712.6 443.9l5.6 -3.2M745.1 443.9l-6.3 -3.2M698 423.4l6.2 -3.3M704.4 423.4l-6.5 -3.3M685.8 430l5.6 -3M717.2 429.9l-5.9 -3M672.8 410.7l6.2 -3.1M678.9 410.7l-6.1 -3.1M660.5 416.8l5.6 -2.8M691.1 416.8l-5.5 -2.8M649 398.6l6.2 -2.9M655 398.6l-5.8 -2.9M636.8 404.4l5.6 -2.6M666.4 404.4l-5.2 -2.6M626.6 387.3l6.2 -2.8M632.4 387.3l-5.5 -2.7M614.4 392.8l5.6 -2.5M643.2 392.7l-4.9 -2.5M605.3 376.5l6.1 -2.6M611 376.5l-5.2 -2.6M593.2 381.7l5.5 -2.4M621.2 381.7l-4.7 -2.3M585.2 366.4l6.1 -2.5M590.7 366.3l-4.9 -2.5M573.1 371.3l5.5 -2.2M600.4 371.2l-4.4 -2.2M566.1 356.7l6.1 -2.4M571.5 356.7l-4.7 -2.3M554.1 361.4l5.5 -2.1M580.7 361.3l-4.2 -2.1M548 347.5l6 -2.2M553.2 347.5l-4.4 -2.2M536.1 351.9l5.4 -2M562 351.9l-4 -2M530.7 338.8l6 -2.1M535.9 338.8l-4.2 -2.1M518.9 343l5.4 -1.9M544.2 343l-3.8 -1.9M514.3 330.5l5.9 -2M519.3 330.5l-4 -2M502.6 334.5l5.4 -1.8M527.2 334.5l-3.6 -1.8M498.7 322.6l5.9 -1.9M503.5 322.5l-3.8 -1.9M487 326.4l5.3 -1.7M511.1 326.3l-3.4 -1.7M483.7 315l5.9 -1.9M488.5 315l-3.7 -1.8M472.2 318.6l5.3 -1.7M495.7 318.6l-3.3 -1.7M469.4 307.8l5.8 -1.8M474.1 307.8l-3.5 -1.8M458 311.3l5.2 -1.6M481 311.2l-3.1 -1.6M455.8 300.9l5.8 -1.7M460.3 300.8l-3.3 -1.7M444.4 304.2l5.2 -1.5M466.9 304.2l-3 -1.5M442.7 294.2l5.7 -1.6M447.2 294.2l-3.2 -1.6M431.5 297.4l5.1 -1.5M453.5 297.4l-2.9 -1.4M430.2 287.9l5.6 -1.6M434.5 287.9l-3.1 -1.5M419 291l5.1 -1.4M440.6 290.9l-2.8 -1.4M418.1 281.8l5.6 -1.5M422.4 281.8l-3 -1.5M407.1 284.8l5 -1.3M428.2 284.7l-2.6 -1.3M406.6 276l5.5 -1.4M410.8 276l-2.8 -1.4M395.7 278.8l5 -1.3M416.4 278.8l-2.5 -1.3M395.5 270.4l5.5 -1.4M399.6 270.4l-2.7 -1.4M384.7 273.1l4.9 -1.2M405 273.1l-2.4 -1.2M384.9 265l5.4 -1.3M388.9 265l-2.6 -1.3M374.2 267.6l4.9 -1.2M394.1 267.6l-2.4 -1.2M374.6 259.8l5.4 -1.3M378.6 259.8l-2.5 -1.3M364 262.3l4.8 -1.1M383.5 262.3l-2.3 -1.1M364.7 254.8l5.3 -1.2M368.6 254.8l-2.4 -1.2M354.3 257.2l4.8 -1.1M373.4 257.2l-2.2 -1.1M363.6 252.3l-2.1 -1.1M777.2 436.9l5.7 -3.5M783.8 436.9l-7.3 -3.5M765.8 443.8l5.2 -3.2M798.3 443.8l-6.6 -3.1M748.8 423.3l5.8 -3.3M755.2 423.3l-6.9 -3.3M737.4 429.9l5.2 -3M768.8 429.8l-6.2 -3M722.1 410.6l5.8 -3.1M728.3 410.6l-6.5 -3.1M710.6 416.7l5.3 -2.8M741.1 416.7l-5.9 -2.8M696.9 398.6l5.8 -2.9M702.9 398.5l-6.1 -2.9M685.4 404.3l5.3 -2.6M715 404.3l-5.5 -2.6M673.1 387.2l5.8 -2.8M679 387.2l-5.8 -2.7M661.6 392.7l5.3 -2.5M690.4 392.6l-5.2 -2.5M650.7 376.5l5.8 -2.6M656.3 376.4l-5.5 -2.6M639.1 381.6l5.3 -2.4M667.1 381.6l-4.9 -2.3M629.3 366.3l5.8 -2.5M634.9 366.3l-5.2 -2.5M617.9 371.2l5.2 -2.2M645.1 371.1l-4.7 -2.2M609.1 356.6l5.8 -2.4M614.5 356.6l-4.9 -2.3M597.7 361.3l5.2 -2.1M624.2 361.2l-4.4 -2.1M589.9 347.4l5.8 -2.2M595.2 347.4l-4.7 -2.2M578.5 351.9l5.2 -2M604.4 351.8l-4.2 -2M571.7 338.7l5.7 -2.1M576.8 338.7l-4.5 -2.1M560.3 342.9l5.2 -1.9M585.6 342.9l-4 -1.9M554.3 330.4l5.7 -2M559.3 330.4l-4.2 -2M543 334.4l5.1 -1.8M567.6 334.4l-3.8 -1.8M537.7 322.5l5.7 -1.9M542.6 322.5l-4.1 -1.9M526.5 326.3l5.1 -1.7M550.6 326.3l-3.7 -1.7M521.9 314.9l5.6 -1.9M526.6 314.9l-3.9 -1.8M510.7 318.6l5.1 -1.7M534.3 318.6l-3.5 -1.7M506.7 307.7l5.6 -1.8M511.4 307.7l-3.7 -1.8M495.7 311.2l5 -1.6M518.7 311.2l-3.3 -1.6M492.3 300.8l5.6 -1.7M496.8 300.8l-3.5 -1.7M481.3 304.1l5 -1.5M503.8 304.1l-3.2 -1.5M478.4 294.2l5.5 -1.6M482.9 294.2l-3.4 -1.6M467.6 297.4l5 -1.5M489.6 297.4l-3.1 -1.4M465.1 287.8l5.5 -1.6M469.5 287.8l-3.3 -1.5M454.4 290.9l4.9 -1.4M475.9 290.9l-2.9 -1.4M452.4 281.8l5.4 -1.5M456.7 281.8l-3.1 -1.5M441.7 284.7l4.9 -1.3M462.8 284.7l-2.8 -1.3M440.2 275.9l5.4 -1.4M444.4 275.9l-3 -1.4M429.6 278.8l4.8 -1.3M450.3 278.7l-2.7 -1.3M428.4 270.3l5.3 -1.4M432.6 270.3l-2.9 -1.4M418 273l4.8 -1.2M438.2 273l-2.6 -1.2M417.2 264.9l5.3 -1.3M421.2 264.9l-2.8 -1.3M406.8 267.5l4.7 -1.2M426.6 267.5l-2.5 -1.2M406.3 259.7l5.2 -1.3M410.2 259.7l-2.7 -1.3M396 262.3l4.7 -1.1M415.5 262.2l-2.4 -1.1M395.8 254.7l5.2 -1.2M399.7 254.7l-2.6 -1.2M385.6 257.2l4.6 -1.1M404.8 257.1l-2.3 -1.1M385.7 249.9l5.1 -1.2M389.6 249.9l-2.5 -1.2M375.7 252.3l4.6 -1.1M394.4 252.2l-2.2 -1.1M384.5 247.5l-2.1 -1M829.6 436.8l5.3 -3.5M836.1 436.8l-7.7 -3.5M819 443.7l4.8 -3.2M851.4 443.7l-7 -3.1M799.6 423.2l5.4 -3.3M806 423.2l-7.3 -3.3M788.9 429.8l4.9 -3M820.4 429.7l-6.6 -3M771.4 410.5l5.4 -3.1M777.6 410.5l-6.8 -3.1M760.6 416.6l4.9 -2.8M791.1 416.6l-6.2 -2.8M744.8 398.5l5.5 -2.9M750.8 398.5l-6.5 -2.9M734 404.3l5 -2.6M763.6 404.2l-5.8 -2.6M719.7 387.1l5.5 -2.8M725.5 387.1l-6.1 -2.7M708.8 392.6l5 -2.5M737.6 392.5l-5.5 -2.5M696 376.4l5.5 -2.6M701.6 376.4l-5.8 -2.6M685.1 381.5l5 -2.4M713.1 381.5l-5.2 -2.3M673.5 366.2l5.5 -2.5M679 366.2l-5.5 -2.5M662.6 371.1l5 -2.2M689.8 371.1l-4.9 -2.2M652.1 356.5l5.5 -2.4M657.5 356.5l-5.2 -2.3M641.2 361.2l5 -2.1M667.8 361.2l-4.7 -2.1M631.9 347.4l5.5 -2.2M637.1 347.4l-4.9 -2.2M621 351.8l5 -2M646.9 351.8l-4.5 -2M612.6 338.7l5.5 -2.1M617.7 338.7l-4.7 -2.1M601.7 342.9l4.9 -1.9M627 342.8l-4.2 -1.9M594.2 330.4l5.5 -2M599.2 330.3l-4.5 -2M583.4 334.4l4.9 -1.8M608 334.3l-4 -1.8M576.7 322.4l5.4 -1.9M581.6 322.4l-4.3 -1.9M565.9 326.3l4.9 -1.7M590 326.2l-3.9 -1.7M560 314.9l5.4 -1.9M564.7 314.9l-4.1 -1.8M549.3 318.5l4.9 -1.7M572.8 318.5l-3.7 -1.7M544 307.7l5.4 -1.8M548.7 307.6l-3.9 -1.8M533.4 311.1l4.8 -1.6M556.4 311.1l-3.5 -1.6M528.7 300.7l5.4 -1.7M533.3 300.7l-3.7 -1.7M518.2 304.1l4.8 -1.5M540.7 304.1l-3.4 -1.5M514.1 294.1l5.3 -1.6M518.6 294.1l-3.6 -1.6M503.6 297.3l4.8 -1.5M525.6 297.3l-3.2 -1.4M500.1 287.8l5.3 -1.6M504.5 287.8l-3.4 -1.5M489.7 290.9l4.7 -1.4M511.2 290.8l-3.1 -1.4M486.6 281.7l5.2 -1.5M490.9 281.7l-3.3 -1.5M476.3 284.7l4.7 -1.3M497.4 284.6l-3 -1.3M473.7 275.9l5.2 -1.4M477.9 275.9l-3.2 -1.4M463.5 278.7l4.7 -1.3M484.2 278.7l-2.8 -1.3M461.3 270.3l5.2 -1.4M465.5 270.3l-3 -1.4M451.2 273l4.6 -1.2M471.4 273l-2.7 -1.2M449.4 264.9l5.1 -1.3M453.5 264.9l-2.9 -1.3M439.3 267.5l4.6 -1.2M459.2 267.5l-2.6 -1.2M438 259.7l5.1 -1.3M441.9 259.7l-2.8 -1.3M428 262.2l4.6 -1.1M447.5 262.2l-2.5 -1.1M426.9 254.7l5 -1.2M430.8 254.7l-2.7 -1.2M417 257.1l4.5 -1.1M436.1 257.1l-2.4 -1.1M416.3 249.9l5 -1.2M420.1 249.9l-2.6 -1.2M406.4 252.2l4.5 -1.1M425.2 252.2l-2.3 -1.1M406 245.3l4.9 -1.1M409.7 245.2l-2.5 -1.1M396.3 247.5l4.4 -1M414.7 247.5l-2.3 -1M404.6 242.9l-2.2 -1M881.9 436.7l4.9 -3.5M888.5 436.7l-8.1 -3.5M872.2 443.6l4.5 -3.2M904.6 443.5l-7.4 -3.1M850.4 423.1l5 -3.3M856.7 423.1l-7.6 -3.3M840.5 429.7l4.5 -3M871.9 429.6l-6.9 -3M820.7 410.4l5.1 -3.1M826.9 410.4l-7.2 -3.1M810.6 416.5l4.6 -2.8M841.1 416.5l-6.5 -2.8M792.7 398.4l5.1 -2.9M798.7 398.4l-6.8 -2.9M782.5 404.2l4.6 -2.6M812.1 404.1l-6.2 -2.6M766.3 387l5.2 -2.8M772.1 387l-6.4 -2.7M756 392.5l4.7 -2.5M784.8 392.4l-5.8 -2.5M741.3 376.3l5.2 -2.6M746.9 376.3l-6.1 -2.6M731 381.5l4.7 -2.4M759 381.4l-5.5 -2.3M717.6 366.1l5.2 -2.5M723.1 366.1l-5.8 -2.5M707.2 371l4.7 -2.2M734.5 371l-5.2 -2.2M695.1 356.5l5.2 -2.4M700.5 356.5l-5.5 -2.3M684.8 361.1l4.7 -2.1M711.3 361.1l-4.9 -2.1M673.8 347.3l5.2 -2.2M679 347.3l-5.2 -2.2M663.4 351.7l4.7 -2M689.3 351.7l-4.7 -2M653.5 338.6l5.2 -2.1M658.6 338.6l-5 -2.1M643.1 342.8l4.7 -1.9M668.4 342.8l-4.5 -1.9M634.1 330.3l5.2 -2M639.1 330.3l-4.7 -2M623.8 334.3l4.7 -1.8M648.4 334.3l-4.3 -1.8M615.7 322.4l5.2 -1.9M620.6 322.4l-4.5 -1.9M605.4 326.2l4.7 -1.7M629.4 326.2l-4.1 -1.7M598.1 314.8l5.2 -1.8M602.8 314.8l-4.3 -1.8M587.8 318.5l4.7 -1.7M611.3 318.4l-3.9 -1.7M581.3 307.6l5.2 -1.8M585.9 307.6l-4.1 -1.8M571.1 311.1l4.7 -1.6M594 311.1l-3.7 -1.6M565.2 300.7l5.2 -1.7M569.7 300.7l-3.9 -1.7M555 304l4.6 -1.5M577.5 304l-3.5 -1.5M549.8 294.1l5.1 -1.6M554.2 294.1l-3.8 -1.6M539.7 297.3l4.6 -1.5M561.7 297.3l-3.4 -1.4M535 287.8l5.1 -1.6M539.4 287.7l-3.6 -1.5M525 290.8l4.6 -1.4M546.5 290.8l-3.2 -1.4M520.9 281.7l5.1 -1.5M525.2 281.7l-3.5 -1.5M510.9 284.6l4.5 -1.3M532 284.6l-3.1 -1.3M507.3 275.8l5 -1.4M511.5 275.8l-3.3 -1.4M497.4 278.7l4.5 -1.3M518 278.6l-3 -1.3M494.2 270.2l5 -1.4M498.3 270.2l-3.2 -1.4M484.4 272.9l4.5 -1.2M504.7 272.9l-2.9 -1.2M481.7 264.8l5 -1.3M485.7 264.8l-3.1 -1.3M471.9 267.5l4.5 -1.2M491.8 267.4l-2.8 -1.2M469.6 259.7l4.9 -1.3M473.6 259.7l-3 -1.3M459.9 262.2l4.4 -1.1M479.4 262.1l-2.7 -1.1M458 254.7l4.9 -1.2M461.9 254.7l-2.9 -1.2M448.4 257.1l4.4 -1.1M467.5 257.1l-2.6 -1.1M446.8 249.9l4.9 -1.2M450.6 249.9l-2.8 -1.2M437.2 252.2l4.3 -1.1M456 252.2l-2.5 -1.1M436 245.2l4.8 -1.1M439.7 245.2l-2.7 -1.1M426.5 247.5l4.3 -1M444.9 247.4l-2.4 -1M425.5 240.7l4.8 -1.1M429.2 240.7l-2.6 -1.1M416.1 242.9l4.3 -1M434.3 242.9l-2.3 -1M423.9 238.5l-2.2 -.9M934.3 436.6l4.5 -3.5M940.8 436.6l-8.5 -3.5M925.3 443.5l4.1 -3.2M957.7 443.4l-7.7 -3.1M901.1 423l4.6 -3.3M907.5 423l-8 -3.3M892 429.5l4.2 -3M923.4 429.5l-7.3 -3M870 410.3l4.7 -3.1M876.1 410.3l-7.6 -3.1M860.6 416.4l4.3 -2.8M891.1 416.4l-6.8 -2.8M840.6 398.3l4.8 -2.9M846.5 398.3l-7.1 -2.9M831.1 404.1l4.3 -2.6M860.7 404l-6.5 -2.6M812.8 386.9l4.9 -2.8M818.6 386.9l-6.7 -2.7M803.2 392.4l4.4 -2.5M832 392.4l-6.1 -2.5M786.6 376.2l4.9 -2.6M792.2 376.2l-6.4 -2.6M776.9 381.4l4.4 -2.4M804.8 381.3l-5.8 -2.3M761.7 366l4.9 -2.5M767.2 366l-6.1 -2.5M751.9 370.9l4.5 -2.2M779.2 370.9l-5.5 -2.2M738.1 356.4l5 -2.4M743.4 356.4l-5.7 -2.3M728.3 361.1l4.5 -2.1M754.8 361l-5.2 -2.1M715.7 347.2l5 -2.2M720.9 347.2l-5.5 -2.2M705.8 351.7l4.5 -2M731.7 351.6l-4.9 -2M694.3 338.5l5 -2.1M699.4 338.5l-5.2 -2.1M684.5 342.7l4.5 -1.9M709.7 342.7l-4.7 -1.9M674 330.2l5 -2M679 330.2l-5 -2M664.2 334.2l4.5 -1.8M688.8 334.2l-4.5 -1.8M654.7 322.3l5 -1.9M659.5 322.3l-4.7 -1.9M644.8 326.1l4.5 -1.7M668.9 326.1l-4.3 -1.7M636.2 314.8l5 -1.8M640.9 314.8l-4.5 -1.8M626.4 318.4l4.5 -1.7M649.9 318.4l-4.1 -1.7M618.5 307.5l5 -1.8M623.2 307.5l-4.3 -1.8M608.7 311l4.5 -1.6M631.7 311l-3.9 -1.6M601.6 300.6l5 -1.7M606.2 300.6l-4.1 -1.7M591.9 304l4.5 -1.5M614.3 303.9l-3.7 -1.5M585.5 294l4.9 -1.6M589.9 294l-4 -1.6M575.7 297.2l4.4 -1.5M597.7 297.2l-3.6 -1.4M570 287.7l4.9 -1.6M574.3 287.7l-3.8 -1.5M560.3 290.8l4.4 -1.4M581.8 290.7l-3.4 -1.4M555.1 281.6l4.9 -1.5M559.4 281.6l-3.6 -1.5M545.5 284.6l4.4 -1.3M566.5 284.5l-3.3 -1.3M540.8 275.8l4.9 -1.4M545 275.8l-3.5 -1.4M531.3 278.6l4.4 -1.3M551.9 278.6l-3.1 -1.3M527.1 270.2l4.8 -1.4M531.2 270.2l-3.4 -1.4M517.6 272.9l4.3 -1.2M537.8 272.9l-3 -1.2M513.9 264.8l4.8 -1.3M518 264.8l-3.2 -1.3M504.5 267.4l4.3 -1.2M524.3 267.4l-2.9 -1.2M501.2 259.6l4.8 -1.3M505.2 259.6l-3.1 -1.3M491.9 262.1l4.3 -1.1M511.3 262.1l-2.8 -1.1M489 254.6l4.7 -1.2M492.9 254.6l-3 -1.2M479.7 257l4.3 -1.1M498.8 257l-2.7 -1.1M477.3 249.8l4.7 -1.2M481.1 249.8l-2.9 -1.2M468 252.1l4.2 -1.1M486.8 252.1l-2.6 -1.1M465.9 245.2l4.7 -1.1M469.7 245.2l-2.8 -1.1M456.7 247.4l4.2 -1M475.1 247.4l-2.5 -1M455 240.7l4.6 -1.1M458.6 240.7l-2.7 -1.1M445.8 242.9l4.2 -1M463.9 242.9l-2.4 -1M444.4 236.4l4.6 -1.1M448 236.4l-2.6 -1.1M435.3 238.5l4.1 -1M453.1 238.5l-2.3 -.9M442.7 234.2l-2.3 -.9M1023.5 450.9l3.9 -3.7M1030.3 450.9l-9.5 -3.7M1015.7 458.3l3.6 -3.4M1049.2 458.2l-8.6 -3.4M986.6 436.5l4.1 -3.5M993.1 436.5l-8.9 -3.5M978.4 443.4l3.7 -3.2M1010.8 443.3l-8.1 -3.1M951.9 422.9l4.2 -3.3M958.2 422.9l-8.4 -3.3M943.5 429.4l3.8 -3M974.9 429.4l-7.6 -3M919.2 410.2l4.3 -3.1M925.4 410.2l-7.9 -3.1M910.6 416.3l3.9 -2.8M941 416.3l-7.2 -2.8M888.4 398.2l4.4 -2.9M894.4 398.2l-7.5 -2.9M879.6 404l4 -2.6M909.2 403.9l-6.8 -2.6M859.3 386.9l4.5 -2.8M865.1 386.8l-7.1 -2.7M850.4 392.3l4.1 -2.5M879.1 392.3l-6.4 -2.5M831.8 376.1l4.6 -2.6M837.5 376.1l-6.7 -2.6M822.7 381.3l4.2 -2.4M850.7 381.2l-6 -2.3M805.8 366l4.6 -2.5M811.3 366l-6.3 -2.5M796.6 370.9l4.2 -2.2M823.8 370.8l-5.7 -2.2M781 356.3l4.7 -2.4M786.4 356.3l-6 -2.3M771.8 361l4.2 -2.1M798.3 360.9l-5.4 -2.1M757.5 347.2l4.7 -2.2M762.8 347.2l-5.7 -2.2M748.2 351.6l4.3 -2M774.1 351.5l-5.2 -2M735.2 338.5l4.7 -2.1M740.3 338.5l-5.4 -2.1M725.8 342.7l4.3 -1.9M751.1 342.6l-4.9 -1.9M713.9 330.2l4.8 -2M718.9 330.2l-5.2 -2M704.5 334.2l4.3 -1.8M729.2 334.1l-4.7 -1.8M693.6 322.3l4.8 -1.9M698.5 322.2l-5 -1.9M684.2 326.1l4.3 -1.7M708.3 326l-4.5 -1.7M674.3 314.7l4.8 -1.8M679 314.7l-4.7 -1.8M664.9 318.4l4.3 -1.7M688.4 318.3l-4.3 -1.7M655.8 307.5l4.8 -1.8M660.4 307.5l-4.5 -1.8M646.4 311l4.3 -1.6M669.3 310.9l-4.1 -1.6M638.1 300.6l4.8 -1.7M642.6 300.6l-4.3 -1.7M628.7 303.9l4.3 -1.5M651.2 303.9l-3.9 -1.5M621.1 294l4.7 -1.6M625.6 294l-4.1 -1.6M611.8 297.2l4.3 -1.5M633.8 297.1l-3.7 -1.4M604.9 287.7l4.7 -1.6M609.2 287.6l-4 -1.5M595.6 290.7l4.2 -1.4M617.1 290.7l-3.6 -1.4M589.3 281.6l4.7 -1.5M593.6 281.6l-3.8 -1.5M580 284.5l4.2 -1.3M601.1 284.5l-3.4 -1.3M574.4 275.8l4.7 -1.4M578.5 275.7l-3.7 -1.4M565.1 278.6l4.2 -1.3M585.8 278.5l-3.3 -1.3M560 270.2l4.7 -1.4M564.1 270.1l-3.5 -1.4M550.8 272.9l4.2 -1.2M571 272.8l-3.2 -1.2M546.2 264.8l4.6 -1.3M550.2 264.8l-3.4 -1.3M537 267.4l4.2 -1.2M556.9 267.3l-3 -1.2M532.9 259.6l4.6 -1.3M536.8 259.6l-3.3 -1.3M523.8 262.1l4.1 -1.1M543.3 262.1l-2.9 -1.1M520.1 254.6l4.6 -1.2M524 254.6l-3.1 -1.2M511 257l4.1 -1.1M530.1 257l-2.8 -1.1M507.7 249.8l4.6 -1.2M511.6 249.8l-3 -1.2M498.8 252.1l4.1 -1.1M517.5 252.1l-2.7 -1.1M495.9 245.1l4.5 -1.1M499.6 245.1l-2.9 -1.1M486.9 247.4l4.1 -1M505.3 247.4l-2.6 -1M484.4 240.7l4.5 -1.1M488.1 240.7l-2.8 -1.1M475.5 242.8l4 -1M493.6 242.8l-2.5 -1M473.3 236.4l4.5 -1.1M476.9 236.3l-2.7 -1.1M464.5 238.4l4 -1M482.3 238.4l-2.4 -.9M462.6 232.2l4.5 -1M466.1 232.2l-2.6 -1M453.8 234.2l4 -.9M471.3 234.2l-2.4 -.9M460.7 230.1l-2.3 -.9M1077.5 450.8l3.5 -3.7M1084.2 450.7l-9.9 -3.7M1070.5 458.1l3.2 -3.4M1104 458.1l-9 -3.3M1038.8 436.4l3.7 -3.5M1045.4 436.3l-9.3 -3.5M1031.5 443.3l3.3 -3.2M1063.9 443.2l-8.5 -3.1M1002.6 422.8l3.8 -3.3M1008.9 422.8l-8.8 -3.3M994.9 429.3l3.5 -3M1026.3 429.3l-8 -3M968.4 410.1l4 -3.1M974.6 410.1l-8.3 -3.1M960.5 416.2l3.6 -2.8M991 416.2l-7.5 -2.8M936.2 398.1l4.1 -2.9M942.2 398.1l-7.8 -2.9M928.1 403.9l3.7 -2.6M957.7 403.8l-7.1 -2.6M905.8 386.8l4.2 -2.8M911.6 386.8l-7.4 -2.7M897.5 392.2l3.8 -2.5M926.2 392.2l-6.7 -2.5M877.1 376.1l4.3 -2.6M882.7 376l-7 -2.6M868.6 381.2l3.9 -2.4M896.5 381.2l-6.3 -2.3M849.8 365.9l4.4 -2.5M855.3 365.9l-6.6 -2.5M841.2 370.8l3.9 -2.2M868.4 370.7l-6 -2.2M824 356.3l4.4 -2.4M829.3 356.2l-6.3 -2.3M815.2 360.9l4 -2.1M841.8 360.9l-5.7 -2.1M799.4 347.1l4.5 -2.2M804.6 347.1l-6 -2.2M790.6 351.5l4 -2M816.5 351.5l-5.4 -2M776 338.4l4.5 -2.1M781.1 338.4l-5.7 -2.1M767.2 342.6l4 -1.9M792.4 342.6l-5.1 -1.9M753.8 330.1l4.5 -2M758.8 330.1l-5.4 -2M744.9 334.1l4.1 -1.8M769.5 334.1l-4.9 -1.8M732.6 322.2l4.5 -1.9M737.5 322.2l-5.2 -1.9M723.6 326l4.1 -1.7M747.7 326l-4.7 -1.7M712.3 314.7l4.5 -1.8M717.1 314.6l-4.9 -1.8M703.4 318.3l4.1 -1.7M726.9 318.3l-4.5 -1.7M693 307.4l4.6 -1.8M697.6 307.4l-4.7 -1.8M684 310.9l4.1 -1.6M707 310.9l-4.3 -1.6M674.5 300.5l4.6 -1.7M679 300.5l-4.5 -1.7M665.5 303.9l4.1 -1.5M688 303.8l-4.1 -1.5M656.8 293.9l4.6 -1.6M661.2 293.9l-4.3 -1.6M647.8 297.1l4.1 -1.5M669.8 297.1l-3.9 -1.4M639.8 287.6l4.5 -1.6M644.2 287.6l-4.2 -1.5M630.8 290.7l4.1 -1.4M652.3 290.6l-3.7 -1.4M623.5 281.5l4.5 -1.5M627.8 281.5l-4 -1.5M614.6 284.5l4.1 -1.3M635.6 284.4l-3.6 -1.3M607.9 275.7l4.5 -1.4M612.1 275.7l-3.8 -1.4M599 278.5l4.1 -1.3M619.6 278.5l-3.4 -1.3M592.9 270.1l4.5 -1.4M597 270.1l-3.7 -1.4M584 272.8l4 -1.2M604.2 272.8l-3.3 -1.2M578.4 264.7l4.5 -1.3M582.4 264.7l-3.5 -1.3M569.6 267.3l4 -1.2M589.4 267.3l-3.2 -1.2M564.5 259.5l4.5 -1.3M568.5 259.5l-3.4 -1.3M555.7 262.1l4 -1.1M575.2 262l-3.1 -1.1M551.1 254.6l4.5 -1.2M555 254.5l-3.3 -1.2M542.4 257l4 -1.1M561.5 256.9l-2.9 -1.1M538.2 249.7l4.4 -1.2M542 249.7l-3.2 -1.2M529.5 252.1l4 -1.1M548.3 252.1l-2.8 -1.1M525.8 245.1l4.4 -1.1M529.5 245.1l-3.1 -1.1M517.1 247.4l4 -1M535.5 247.3l-2.7 -1M513.8 240.6l4.4 -1.1M517.5 240.6l-3 -1.1M505.2 242.8l3.9 -1M523.3 242.8l-2.6 -1M502.2 236.3l4.4 -1.1M505.8 236.3l-2.8 -1.1M493.6 238.4l3.9 -1M511.4 238.4l-2.6 -.9M491 232.1l4.3 -1M494.6 232.1l-2.8 -1M482.5 234.2l3.9 -.9M500 234.1l-2.5 -.9M480.2 228.1l4.3 -1M483.7 228.1l-2.7 -1M471.7 230.1l3.9 -.9M488.9 230l-2.4 -.9M478.2 226.1l-2.3 -.9M1131.4 450.6l3.1 -3.7M1138.1 450.6l-10.4 -3.7M1125.3 458l2.8 -3.4M1158.7 457.9l-9.4 -3.3M1091.1 436.3l3.3 -3.5M1097.6 436.2l-9.7 -3.5M1084.6 443.2l3 -3.2M1116.9 443.1l-8.8 -3.1M1053.2 422.7l3.5 -3.3M1059.6 422.7l-9.2 -3.3M1046.4 429.2l3.1 -3M1077.7 429.2l-8.3 -3M1017.6 410l3.6 -3.1M1023.8 410l-8.6 -3.1M1010.4 416.1l3.3 -2.8M1040.9 416.1l-7.8 -2.8M984 398l3.8 -2.9M990 398l-8.1 -2.9M976.6 403.8l3.4 -2.6M1006.1 403.7l-7.4 -2.6M952.3 386.7l3.9 -2.8M958.1 386.7l-7.7 -2.7M944.6 392.1l3.5 -2.5M973.3 392.1l-7 -2.5M922.3 376l4 -2.6M927.9 376l-7.3 -2.6M914.4 381.1l3.6 -2.4M942.4 381.1l-6.6 -2.3M893.8 365.8l4.1 -2.5M899.4 365.8l-6.9 -2.5M885.8 370.7l3.7 -2.2M913 370.7l-6.2 -2.2M866.9 356.2l4.1 -2.3M872.2 356.2l-6.6 -2.3M858.7 360.8l3.7 -2.1M885.2 360.8l-5.9 -2.1M841.2 347l4.2 -2.2M846.5 347l-6.2 -2.2M833 351.4l3.8 -2M858.8 351.4l-5.6 -2M816.9 338.3l4.2 -2.1M822 338.3l-5.9 -2.1M808.5 342.5l3.8 -1.9M833.7 342.5l-5.4 -1.9M793.7 330l4.3 -2M798.6 330l-5.7 -2M785.2 334l3.9 -1.8M809.8 334l-5.1 -1.8M771.5 322.1l4.3 -1.9M776.4 322.1l-5.4 -1.9M763 326l3.9 -1.7M787.1 325.9l-4.9 -1.7M750.4 314.6l4.3 -1.8M755.2 314.6l-5.2 -1.8M741.9 318.2l3.9 -1.7M765.3 318.2l-4.6 -1.7M730.2 307.4l4.3 -1.8M734.9 307.4l-4.9 -1.8M721.6 310.9l3.9 -1.6M744.6 310.8l-4.4 -1.6M710.9 300.5l4.4 -1.7M715.4 300.5l-4.7 -1.7M702.3 303.8l3.9 -1.5M724.8 303.8l-4.2 -1.5M692.4 293.9l4.4 -1.6M696.9 293.9l-4.5 -1.6M683.8 297.1l3.9 -1.5M705.8 297l-4.1 -1.4M674.7 287.6l4.4 -1.6M679.1 287.6l-4.3 -1.5M666.1 290.6l3.9 -1.4M687.6 290.6l-3.9 -1.4M657.7 281.5l4.4 -1.5M662 281.5l-4.2 -1.5M649.1 284.4l3.9 -1.3M670.2 284.4l-3.7 -1.3M641.4 275.7l4.4 -1.4M645.6 275.7l-4 -1.4M632.8 278.5l3.9 -1.3M653.4 278.5l-3.6 -1.3M625.7 270.1l4.3 -1.4M629.8 270.1l-3.8 -1.4M617.1 272.8l3.9 -1.2M637.4 272.7l-3.4 -1.2M610.6 264.7l4.3 -1.3M614.7 264.7l-3.7 -1.3M602.1 267.3l3.9 -1.2M621.9 267.3l-3.3 -1.2M596.1 259.5l4.3 -1.3M600.1 259.5l-3.6 -1.3M587.6 262l3.9 -1.1M607.1 262l-3.2 -1.1M582.2 254.5l4.3 -1.2M586 254.5l-3.4 -1.2M573.7 256.9l3.9 -1.1M592.8 256.9l-3.1 -1.1M568.7 249.7l4.3 -1.2M572.5 249.7l-3.3 -1.2M560.3 252l3.8 -1.1M579 252l-3 -1.1M555.7 245.1l4.3 -1.1M559.5 245.1l-3.2 -1.1M547.3 247.3l3.8 -1M565.7 247.3l-2.9 -1M543.2 240.6l4.3 -1.1M546.9 240.6l-3.1 -1.1M534.8 242.8l3.8 -1M552.9 242.7l-2.8 -1M531.1 236.3l4.2 -1.1M534.7 236.3l-3 -1.1M522.8 238.4l3.8 -1M540.6 238.4l-2.7 -.9M519.4 232.1l4.2 -1M523 232.1l-2.9 -1M511.1 234.1l3.8 -.9M528.6 234.1l-2.6 -.9M508.1 228.1l4.2 -1M511.6 228.1l-2.8 -1M499.9 230l3.7 -.9M517.1 230l-2.5 -.9M497.2 224.2l4.2 -1M500.6 224.2l-2.7 -1M489 226.1l3.7 -.9M505.9 226.1l-2.4 -.9M495.1 222.2l-2.3 -.8M1185.3 450.5l2.6 -3.7M1192 450.5l-10.8 -3.7M1180.1 457.9l2.4 -3.4M1213.5 457.8l-9.8 -3.3M1143.3 436.1l2.9 -3.5M1149.8 436.1l-10.1 -3.5M1137.6 443.1l2.6 -3.2M1170 443l-9.2 -3.1M1103.9 422.6l3.1 -3.3M1110.2 422.6l-9.5 -3.3M1097.8 429.1l2.8 -3M1129.1 429.1l-8.6 -2.9M1066.8 409.9l3.3 -3.1M1072.9 409.9l-9 -3.1M1060.3 416l3 -2.8M1090.7 416l-8.1 -2.8M1031.8 397.9l3.4 -2.9M1037.8 397.9l-8.5 -2.9M1025 403.7l3.1 -2.6M1054.6 403.6l-7.7 -2.6M998.7 386.6l3.6 -2.8M1004.5 386.6l-8 -2.7M991.7 392.1l3.2 -2.5M1020.4 392l-7.3 -2.5M967.5 375.9l3.7 -2.6M973.1 375.9l-7.6 -2.6M960.2 381.1l3.3 -2.4M988.2 381l-6.9 -2.3M937.9 365.7l3.8 -2.5M943.4 365.7l-7.2 -2.5M930.4 370.6l3.4 -2.2M957.6 370.6l-6.5 -2.2M909.8 356.1l3.9 -2.3M915.1 356.1l-6.8 -2.3M902.2 360.8l3.5 -2.1M928.6 360.7l-6.2 -2.1M883.1 347l3.9 -2.2M888.3 347l-6.5 -2.2M875.3 351.4l3.5 -2M901.1 351.3l-5.9 -2M857.7 338.3l4 -2.1M862.8 338.3l-6.2 -2.1M849.8 342.5l3.6 -1.9M875 342.4l-5.6 -1.9M833.5 330l4 -2M838.5 330l-5.9 -2M825.5 334l3.6 -1.8M850.1 333.9l-5.3 -1.8M810.5 322.1l4.1 -1.9M815.3 322.1l-5.6 -1.9M802.4 325.9l3.7 -1.7M826.4 325.9l-5.1 -1.7M788.4 314.5l4.1 -1.8M793.2 314.5l-5.4 -1.8M780.3 318.2l3.7 -1.7M803.8 318.1l-4.8 -1.6M767.4 307.3l4.1 -1.8M772.1 307.3l-5.1 -1.8M759.3 310.8l3.7 -1.6M782.2 310.8l-4.6 -1.6M747.3 300.4l4.2 -1.7M751.8 300.4l-4.9 -1.7M739.1 303.8l3.7 -1.5M761.5 303.7l-4.4 -1.5M728 293.8l4.2 -1.6M732.5 293.8l-4.7 -1.6M719.8 297l3.7 -1.5M741.8 297l-4.2 -1.4M709.6 287.5l4.2 -1.6M713.9 287.5l-4.5 -1.5M701.3 290.6l3.8 -1.4M722.8 290.5l-4.1 -1.4M691.9 281.4l4.2 -1.5M696.1 281.4l-4.3 -1.5M683.6 284.4l3.8 -1.3M704.7 284.3l-3.9 -1.3M674.9 275.6l4.2 -1.4M679.1 275.6l-4.2 -1.4M666.6 278.4l3.8 -1.3M687.3 278.4l-3.7 -1.3M658.5 270l4.2 -1.4M662.6 270l-4 -1.4M650.3 272.7l3.8 -1.2M670.5 272.7l-3.6 -1.2M642.8 264.6l4.2 -1.3M646.9 264.6l-3.9 -1.3M634.6 267.2l3.8 -1.2M654.4 267.2l-3.5 -1.2M627.7 259.5l4.2 -1.3M631.7 259.5l-3.7 -1.3M619.5 262l3.7 -1.1M639 261.9l-3.3 -1.1M613.2 254.5l4.2 -1.2M617.1 254.5l-3.6 -1.2M605 256.9l3.7 -1.1M624.1 256.9l-3.2 -1.1M599.2 249.7l4.2 -1.2M603 249.7l-3.4 -1.2M591 252l3.7 -1.1M609.7 252l-3.1 -1.1M585.6 245l4.1 -1.1M589.4 245l-3.3 -1.1M577.5 247.3l3.7 -1M595.9 247.3l-3 -1M572.6 240.6l4.1 -1.1M576.3 240.6l-3.2 -1.1M564.5 242.7l3.7 -1M582.6 242.7l-2.9 -1M560 236.3l4.1 -1.1M563.6 236.2l-3.1 -1.1M551.9 238.3l3.7 -1M569.7 238.3l-2.8 -.9M547.8 232.1l4.1 -1M551.4 232.1l-3 -1M539.8 234.1l3.7 -.9M557.3 234.1l-2.7 -.9M536.1 228.1l4.1 -1M539.6 228l-2.9 -1M528.1 230l3.6 -.9M545.2 230l-2.6 -.9M524.7 224.2l4.1 -1M528.1 224.1l-2.8 -1M516.7 226l3.6 -.9M533.6 226l-2.5 -.9M513.7 220.4l4 -.9M517.1 220.4l-2.7 -.9M505.8 222.2l3.6 -.8M522.4 222.2l-2.4 -.8M511.5 218.5l-2.3 -.8M1285.7 465.7l1.9 -4M1292.7 465.7l-12 -3.9M1282 473.6l1.7 -3.6M1316.5 473.5l-10.9 -3.6M1239.2 450.4l2.2 -3.7M1245.9 450.4l-11.2 -3.7M1234.8 457.8l2 -3.4M1268.2 457.7l-10.2 -3.3M1195.5 436l2.5 -3.5M1202 436l-10.5 -3.5M1190.6 442.9l2.2 -3.2M1223 442.9l-9.6 -3.1M1154.5 422.5l2.7 -3.3M1160.8 422.5l-9.9 -3.2M1149.2 429l2.4 -3M1180.5 429l-9 -2.9M1115.9 409.8l2.9 -3.1M1122.1 409.8l-9.3 -3.1M1110.2 415.9l2.6 -2.8M1140.6 415.9l-8.5 -2.8M1079.5 397.8l3.1 -2.9M1085.5 397.8l-8.8 -2.9M1073.4 403.6l2.8 -2.6M1103 403.6l-8 -2.6M1045.2 386.5l3.2 -2.8M1051 386.5l-8.3 -2.7M1038.8 392l2.9 -2.5M1067.5 391.9l-7.5 -2.5M1012.7 375.8l3.4 -2.6M1018.3 375.8l-7.9 -2.6M1006 381l3 -2.4M1033.9 380.9l-7.1 -2.3M981.9 365.7l3.5 -2.5M987.4 365.7l-7.5 -2.5M975 370.6l3.1 -2.2M1002.2 370.5l-6.8 -2.2M952.7 356l3.6 -2.3M958 356l-7.1 -2.3M945.6 360.7l3.2 -2.1M972.1 360.6l-6.4 -2.1M924.9 346.9l3.7 -2.2M930.1 346.9l-6.8 -2.2M917.7 351.3l3.3 -2M943.5 351.3l-6.1 -2M898.5 338.2l3.7 -2.1M903.6 338.2l-6.4 -2.1M891.1 342.4l3.4 -1.9M916.3 342.4l-5.8 -1.9M873.3 329.9l3.8 -2M878.3 329.9l-6.1 -2M865.8 333.9l3.4 -1.8M890.4 333.9l-5.5 -1.8M849.4 322l3.8 -1.9M854.2 322l-5.8 -1.9M841.8 325.8l3.5 -1.7M865.8 325.8l-5.3 -1.7M826.5 314.5l3.9 -1.8M831.2 314.5l-5.6 -1.8M818.8 318.1l3.5 -1.7M842.2 318.1l-5 -1.6M804.6 307.3l3.9 -1.8M809.2 307.3l-5.3 -1.8M796.9 310.8l3.5 -1.6M819.8 310.7l-4.8 -1.6M783.7 300.4l4 -1.7M788.2 300.4l-5.1 -1.7M775.9 303.7l3.6 -1.5M798.3 303.7l-4.6 -1.5M763.6 293.8l4 -1.6M768.1 293.8l-4.9 -1.6M755.8 297l3.6 -1.5M777.8 296.9l-4.4 -1.4M744.5 287.5l4 -1.6M748.8 287.5l-4.7 -1.5M736.6 290.5l3.6 -1.4M758.1 290.5l-4.2 -1.4M726 281.4l4 -1.5M730.3 281.4l-4.5 -1.5M718.1 284.3l3.6 -1.3M739.2 284.3l-4 -1.3M708.4 275.6l4 -1.4M712.5 275.6l-4.3 -1.4M700.4 278.4l3.6 -1.3M721.1 278.4l-3.9 -1.3M691.4 270l4 -1.4M695.5 270l-4.2 -1.4M683.5 272.7l3.6 -1.2M703.7 272.7l-3.7 -1.2M675 264.6l4 -1.3M679.1 264.6l-4 -1.3M667.1 267.2l3.6 -1.2M686.9 267.2l-3.6 -1.2M659.3 259.4l4 -1.3M663.3 259.4l-3.9 -1.3M651.4 261.9l3.6 -1.1M670.9 261.9l-3.5 -1.1M644.2 254.4l4 -1.2M648.1 254.4l-3.7 -1.2M636.3 256.9l3.6 -1.1M655.4 256.8l-3.3 -1.1M629.6 249.6l4 -1.2M633.4 249.6l-3.6 -1.2M621.7 252l3.6 -1.1M640.5 251.9l-3.2 -1.1M615.6 245l4 -1.1M619.3 245l-3.5 -1.1M607.7 247.2l3.6 -1M626.1 247.2l-3.1 -1M602 240.5l4 -1.1M605.7 240.5l-3.3 -1.1M594.1 242.7l3.6 -1M612.2 242.7l-3 -1M588.9 236.2l4 -1.1M592.5 236.2l-3.2 -1.1M581.1 238.3l3.6 -1M598.8 238.3l-2.9 -.9M576.2 232.1l4 -1M579.8 232l-3.1 -1M568.4 234.1l3.6 -.9M585.9 234.1l-2.8 -.9M564 228l4 -1M567.5 228l-3 -1M556.2 230l3.5 -.9M573.4 230l-2.7 -.9M552.2 224.1l3.9 -1M555.6 224.1l-2.9 -1M544.4 226l3.5 -.9M561.3 226l-2.6 -.9M540.7 220.4l3.9 -.9M544.1 220.3l-2.8 -.9M533 222.2l3.5 -.8M549.6 222.2l-2.5 -.8M529.6 216.7l3.9 -.9M532.9 216.7l-2.7 -.9M521.9 218.5l3.5 -.8M538.3 218.5l-2.4 -.8M527.3 214.9l-2.4 -.8M1341.3 465.6l1.4 -4M1348.3 465.6l-12.4 -3.9M1338.6 473.5l1.3 -3.6M1373 473.4l-11.3 -3.6M1293 450.3l1.8 -3.7M1299.7 450.3l-11.7 -3.7M1289.5 457.7l1.6 -3.4M1322.9 457.6l-10.6 -3.3M1247.7 435.9l2 -3.5M1254.2 435.9l-10.9 -3.5M1243.6 442.8l1.9 -3.2M1275.9 442.8l-9.9 -3.1M1205.1 422.4l2.3 -3.3M1211.4 422.4l-10.3 -3.2M1200.5 428.9l2.1 -3M1231.9 428.9l-9.3 -2.9M1165.1 409.7l2.5 -3.1M1171.2 409.7l-9.7 -3.1M1160 415.8l2.3 -2.8M1190.4 415.8l-8.8 -2.8M1127.3 397.7l2.7 -2.9M1133.2 397.7l-9.2 -2.9M1121.9 403.5l2.5 -2.6M1151.4 403.5l-8.3 -2.6M1091.6 386.4l2.9 -2.8M1097.4 386.4l-8.7 -2.7M1085.8 391.9l2.6 -2.5M1114.5 391.8l-7.8 -2.5M1057.8 375.7l3.1 -2.6M1063.5 375.7l-8.2 -2.6M1051.8 380.9l2.8 -2.4M1079.7 380.8l-7.4 -2.3M1025.9 365.6l3.2 -2.5M1031.4 365.6l-7.8 -2.5M1019.6 370.5l2.9 -2.2M1046.7 370.4l-7 -2.2M995.5 356l3.3 -2.3M1000.9 356l-7.4 -2.3M989 360.6l3 -2.1M1015.5 360.6l-6.7 -2.1M966.7 346.8l3.4 -2.2M971.9 346.8l-7 -2.2M960 351.2l3.1 -2M985.8 351.2l-6.3 -2M939.3 338.1l3.5 -2.1M944.4 338.1l-6.7 -2.1M932.4 342.3l3.1 -1.9M957.6 342.3l-6 -1.9M913.2 329.9l3.6 -2M918.1 329.8l-6.4 -2M906.1 333.9l3.2 -1.8M930.7 333.8l-5.7 -1.8M888.3 322l3.6 -1.9M893.1 322l-6.1 -1.9M881.1 325.8l3.3 -1.7M905.1 325.7l-5.5 -1.7M864.5 314.4l3.7 -1.8M869.2 314.4l-5.8 -1.8M857.2 318.1l3.3 -1.7M880.7 318l-5.2 -1.6M841.8 307.2l3.7 -1.8M846.4 307.2l-5.5 -1.8M834.4 310.7l3.3 -1.6M857.4 310.7l-5 -1.6M820.1 300.3l3.8 -1.7M824.6 300.3l-5.3 -1.7M812.6 303.7l3.4 -1.5M835.1 303.6l-4.8 -1.5M799.3 293.7l3.8 -1.6M803.7 293.7l-5.1 -1.6M791.8 296.9l3.4 -1.5M813.7 296.9l-4.6 -1.4M779.3 287.4l3.8 -1.6M783.7 287.4l-4.9 -1.5M771.8 290.5l3.4 -1.4M793.3 290.4l-4.4 -1.4M760.2 281.4l3.8 -1.5M764.5 281.3l-4.7 -1.5M752.6 284.3l3.4 -1.3M773.7 284.3l-4.2 -1.3M741.8 275.5l3.9 -1.4M746 275.5l-4.5 -1.4M734.3 278.3l3.5 -1.3M754.9 278.3l-4 -1.3M724.2 269.9l3.9 -1.4M728.3 269.9l-4.3 -1.4M716.6 272.6l3.5 -1.2M736.8 272.6l-3.9 -1.2M707.2 264.6l3.9 -1.3M711.3 264.6l-4.2 -1.3M699.6 267.2l3.5 -1.2M719.4 267.1l-3.7 -1.2M690.9 259.4l3.9 -1.3M694.9 259.4l-4 -1.3M683.3 261.9l3.5 -1.1M702.7 261.9l-3.6 -1.1M675.2 254.4l3.9 -1.2M679.1 254.4l-3.9 -1.2M667.6 256.8l3.5 -1.1M686.7 256.8l-3.5 -1.1M660.1 249.6l3.9 -1.2M663.9 249.6l-3.7 -1.2M652.4 251.9l3.5 -1.1M671.2 251.9l-3.3 -1.1M645.5 245l3.9 -1.1M649.2 245l-3.6 -1.1M637.8 247.2l3.5 -1M656.2 247.2l-3.2 -1M631.4 240.5l3.9 -1.1M635 240.5l-3.5 -1.1M623.8 242.7l3.5 -1M641.8 242.6l-3.1 -1M617.8 236.2l3.9 -1.1M621.4 236.2l-3.3 -1.1M610.2 238.3l3.5 -1M627.9 238.3l-3 -.9M604.6 232l3.8 -1M608.2 232l-3.2 -1M597.1 234l3.4 -.9M614.5 234l-2.9 -.9M591.9 228l3.8 -1M595.4 228l-3.1 -1M584.4 229.9l3.4 -.9M601.5 229.9l-2.8 -.9M579.6 224.1l3.8 -1M583 224.1l-3 -1M572.1 226l3.4 -.9M589 226l-2.7 -.9M567.7 220.3l3.8 -.9M571.1 220.3l-2.9 -.9M560.2 222.2l3.4 -.8M576.8 222.1l-2.6 -.8M556.2 216.7l3.8 -.9M559.5 216.7l-2.8 -.9M548.7 218.4l3.4 -.8M565.1 218.4l-2.5 -.8M545 213.1l3.8 -.9M548.3 213.1l-2.7 -.9M537.6 214.8l3.4 -.8M553.7 214.8l-2.5 -.8M542.7 211.4l-2.4 -.8M1346.8 450.2l1.3 -3.7M1353.6 450.2l-12.1 -3.7M1344.2 457.5l1.2 -3.4M1377.6 457.5l-11 -3.3M1299.8 435.8l1.6 -3.5M1306.4 435.8l-11.3 -3.5M1296.6 442.7l1.5 -3.2M1328.9 442.7l-10.3 -3.1M1255.7 422.3l1.9 -3.3M1262 422.3l-10.7 -3.2M1251.9 428.8l1.7 -3M1283.2 428.8l-9.7 -2.9M1214.2 409.6l2.2 -3.1M1220.3 409.6l-10.1 -3.1M1209.8 415.7l2 -2.8M1240.2 415.7l-9.1 -2.8M1175 397.7l2.4 -2.9M1180.9 397.6l-9.5 -2.9M1170.2 403.4l2.2 -2.6M1199.7 403.4l-8.6 -2.6M1138 386.3l2.6 -2.8M1143.8 386.3l-9 -2.7M1132.9 391.8l2.3 -2.5M1161.5 391.7l-8.1 -2.5M1103 375.6l2.8 -2.6M1108.6 375.6l-8.5 -2.6M1097.5 380.8l2.5 -2.4M1125.4 380.8l-7.7 -2.3M1069.8 365.5l2.9 -2.5M1075.3 365.5l-8.1 -2.5M1064.1 370.4l2.6 -2.2M1091.3 370.4l-7.3 -2.2M1038.4 355.9l3 -2.3M1043.7 355.9l-7.6 -2.3M1032.4 360.5l2.7 -2.1M1058.8 360.5l-6.9 -2.1M1008.5 346.8l3.1 -2.2M1013.7 346.8l-7.3 -2.2M1002.3 351.2l2.8 -2M1028.1 351.1l-6.6 -2M980 338.1l3.2 -2.1M985.1 338.1l-6.9 -2.1M973.7 342.3l2.9 -1.9M998.8 342.2l-6.2 -1.9M953 329.8l3.3 -2M957.9 329.8l-6.6 -2M946.4 333.8l3 -1.8M971 333.7l-5.9 -1.8M927.1 321.9l3.4 -1.9M932 321.9l-6.3 -1.9M920.4 325.7l3.1 -1.7M944.4 325.7l-5.7 -1.7M902.5 314.4l3.5 -1.8M907.2 314.4l-6 -1.8M895.7 318l3.1 -1.7M919.1 318l-5.4 -1.6M878.9 307.2l3.5 -1.8M883.6 307.2l-5.8 -1.8M872 310.6l3.2 -1.6M894.9 310.6l-5.2 -1.6M856.4 300.3l3.6 -1.7M861 300.3l-5.5 -1.7M849.4 303.6l3.2 -1.5M871.8 303.6l-5 -1.5M834.8 293.7l3.6 -1.6M839.3 293.7l-5.3 -1.6M827.7 296.9l3.2 -1.5M849.7 296.8l-4.7 -1.4M814.2 287.4l3.6 -1.6M818.5 287.4l-5.1 -1.5M807 290.4l3.3 -1.4M828.5 290.4l-4.5 -1.4M794.3 281.3l3.7 -1.5M798.6 281.3l-4.9 -1.5M787.1 284.2l3.3 -1.3M808.2 284.2l-4.4 -1.3M775.3 275.5l3.7 -1.4M779.5 275.5l-4.7 -1.4M768.1 278.3l3.3 -1.3M788.7 278.3l-4.2 -1.3M757 269.9l3.7 -1.4M761.1 269.9l-4.5 -1.4M749.7 272.6l3.3 -1.2M769.9 272.6l-4 -1.2M739.4 264.5l3.7 -1.3M743.4 264.5l-4.3 -1.3M732.1 267.1l3.3 -1.2M751.9 267.1l-3.9 -1.2M722.5 259.3l3.7 -1.3M726.4 259.3l-4.2 -1.3M715.2 261.9l3.3 -1.1M734.6 261.8l-3.7 -1.1M706.2 254.4l3.7 -1.2M710.1 254.4l-4 -1.2M698.9 256.8l3.3 -1.1M717.9 256.8l-3.6 -1.1M690.5 249.6l3.7 -1.2M694.3 249.6l-3.9 -1.2M683.1 251.9l3.3 -1.1M701.9 251.9l-3.5 -1.1M675.4 244.9l3.7 -1.1M679.1 244.9l-3.7 -1.1M668 247.2l3.3 -1M686.4 247.2l-3.3 -1M660.7 240.5l3.7 -1.1M664.4 240.5l-3.6 -1.1M653.4 242.6l3.3 -1M671.5 242.6l-3.2 -1M646.6 236.2l3.7 -1.1M650.2 236.2l-3.5 -1.1M639.3 238.2l3.3 -1M657 238.2l-3.1 -.9M633 232l3.7 -1M636.5 232l-3.4 -1M625.7 234l3.3 -.9M643.1 234l-3 -.9M619.8 228l3.7 -1M623.3 228l-3.2 -1M612.5 229.9l3.3 -.9M629.7 229.9l-2.9 -.9M607.1 224.1l3.7 -1M610.5 224.1l-3.1 -1M599.8 226l3.3 -.9M616.7 225.9l-2.8 -.9M594.7 220.3l3.7 -.9M598.1 220.3l-3 -.9M587.5 222.1l3.3 -.8M604.1 222.1l-2.7 -.8M582.8 216.6l3.7 -.9M586.1 216.6l-2.9 -.9M575.5 218.4l3.3 -.8M591.9 218.4l-2.6 -.8M571.2 213.1l3.7 -.9M574.5 213.1l-2.8 -.9M564 214.8l3.3 -.8M580.1 214.8l-2.5 -.8M560 209.7l3.7 -.8M563.2 209.7l-2.8 -.8M552.8 211.3l3.3 -.8M568.6 211.3l-2.5 -.8M557.6 208l-2.4 -.7M1352 435.7l1.2 -3.5M1358.5 435.7l-11.7 -3.4M1349.5 442.6l1.1 -3.2M1381.8 442.5l-10.7 -3.1M1306.3 422.2l1.5 -3.3M1312.6 422.2l-11 -3.2M1303.2 428.7l1.4 -3M1334.5 428.7l-10 -2.9M1263.2 409.5l1.8 -3.1M1269.4 409.5l-10.4 -3.1M1259.6 415.6l1.6 -2.8M1290 415.6l-9.4 -2.8M1222.7 397.6l2.1 -2.9M1228.6 397.6l-9.8 -2.9M1218.6 403.3l1.9 -2.6M1248.1 403.3l-8.9 -2.6M1184.4 386.3l2.3 -2.7M1190.2 386.3l-9.3 -2.7M1179.9 391.7l2 -2.5M1208.5 391.7l-8.4 -2.5M1148.1 375.6l2.4 -2.6M1153.8 375.6l-8.8 -2.6M1143.3 380.7l2.2 -2.4M1171.2 380.7l-8 -2.3M1113.8 365.4l2.6 -2.5M1119.3 365.4l-8.3 -2.5M1108.6 370.3l2.4 -2.2M1135.8 370.3l-7.5 -2.2M1081.2 355.8l2.8 -2.3M1086.5 355.8l-7.9 -2.3M1075.8 360.5l2.5 -2.1M1102.2 360.4l-7.2 -2.1M1050.2 346.7l2.9 -2.2M1055.5 346.7l-7.5 -2.2M1044.6 351.1l2.6 -2M1070.3 351.1l-6.8 -2M1020.8 338l3 -2.1M1025.9 338l-7.2 -2.1M1014.9 342.2l2.7 -1.9M1040.1 342.2l-6.5 -1.9M992.8 329.7l3.1 -2M997.7 329.7l-6.8 -2M986.7 333.7l2.8 -1.8M1011.2 333.7l-6.2 -1.8M966 321.8l3.2 -1.9M970.9 321.8l-6.5 -1.9M959.8 325.7l2.9 -1.7M983.7 325.6l-5.9 -1.7M940.5 314.3l3.2 -1.8M945.2 314.3l-6.2 -1.8M934.1 317.9l2.9 -1.7M957.5 317.9l-5.6 -1.6M916.1 307.1l3.3 -1.8M920.7 307.1l-6 -1.7M909.6 310.6l3 -1.6M932.5 310.6l-5.4 -1.6M892.8 300.2l3.4 -1.7M897.3 300.2l-5.7 -1.7M886.1 303.6l3 -1.5M908.5 303.5l-5.1 -1.5M870.4 293.6l3.4 -1.6M874.9 293.6l-5.5 -1.6M863.7 296.8l3.1 -1.5M885.6 296.8l-4.9 -1.4M849 287.3l3.4 -1.6M853.4 287.3l-5.2 -1.5M842.2 290.4l3.1 -1.4M863.7 290.3l-4.7 -1.4M828.5 281.3l3.5 -1.5M832.7 281.3l-5 -1.5M821.6 284.2l3.1 -1.3M842.6 284.2l-4.5 -1.3M808.8 275.4l3.5 -1.4M812.9 275.4l-4.8 -1.4M801.8 278.3l3.2 -1.3M822.4 278.2l-4.3 -1.3M789.8 269.9l3.5 -1.4M793.9 269.8l-4.6 -1.4M782.8 272.6l3.2 -1.2M803 272.5l-4.2 -1.2M771.6 264.5l3.6 -1.3M775.6 264.5l-4.5 -1.3M764.6 267.1l3.2 -1.2M784.4 267.1l-4 -1.2M754.1 259.3l3.6 -1.3M758 259.3l-4.3 -1.3M747 261.8l3.2 -1.1M766.5 261.8l-3.9 -1.1M737.2 254.3l3.6 -1.2M741.1 254.3l-4.1 -1.2M730.1 256.7l3.2 -1.1M749.2 256.7l-3.7 -1.1M720.9 249.5l3.6 -1.2M724.7 249.5l-4 -1.2M713.9 251.9l3.2 -1.1M732.6 251.8l-3.6 -1.1M705.2 244.9l3.6 -1.1M709 244.9l-3.9 -1.1M698.2 247.1l3.2 -1M716.5 247.1l-3.4 -1M690.1 240.4l3.6 -1.1M693.8 240.4l-3.7 -1.1M683 242.6l3.2 -1M701.1 242.6l-3.3 -1M675.5 236.1l3.6 -1.1M679.1 236.1l-3.6 -1.1M668.4 238.2l3.2 -1M686.1 238.2l-3.2 -.9M661.4 232l3.6 -1M664.9 232l-3.5 -1M654.3 234l3.2 -.9M671.7 234l-3.1 -.9M647.7 227.9l3.6 -1M651.2 227.9l-3.4 -1M640.6 229.9l3.2 -.9M657.8 229.9l-3 -.9M634.5 224l3.6 -1M637.9 224l-3.2 -1M627.4 225.9l3.2 -.9M644.3 225.9l-2.9 -.9M621.7 220.3l3.6 -.9M625.1 220.3l-3.1 -.9M614.7 222.1l3.2 -.8M631.3 222.1l-2.8 -.8M609.4 216.6l3.6 -.9M612.7 216.6l-3 -.9M602.3 218.4l3.2 -.8M618.7 218.4l-2.7 -.8M597.4 213.1l3.6 -.9M600.7 213.1l-3 -.9M590.4 214.8l3.2 -.8M606.4 214.8l-2.6 -.8M585.8 209.7l3.6 -.8M589 209.6l-2.9 -.8M578.8 211.3l3.2 -.8M594.6 211.3l-2.6 -.8M574.5 206.3l3.6 -.8M577.7 206.3l-2.8 -.8M567.5 207.9l3.2 -.7M583.1 207.9l-2.5 -.7M572 204.7l-2.4 -.7M1356.8 422.1l1.2 -3.3M1363.1 422.1l-11.4 -3.2M1354.5 428.6l1.1 -3M1385.8 428.5l-10.4 -2.9M1312.3 409.4l1.5 -3.1M1318.4 409.4l-10.8 -3.1M1309.4 415.5l1.3 -2.8M1339.8 415.5l-9.8 -2.8M1270.3 397.5l1.7 -2.9M1276.3 397.5l-10.2 -2.9M1267 403.2l1.6 -2.6M1296.4 403.2l-9.2 -2.6M1230.7 386.2l1.9 -2.7M1236.5 386.2l-9.6 -2.7M1226.9 391.6l1.8 -2.5M1255.5 391.6l-8.7 -2.5M1193.2 375.5l2.1 -2.6M1198.9 375.5l-9.1 -2.6M1189 380.6l1.9 -2.4M1216.9 380.6l-8.2 -2.3M1157.7 365.4l2.3 -2.5M1163.2 365.4l-8.6 -2.4M1153.1 370.2l2.1 -2.2M1180.3 370.2l-7.8 -2.2M1124 355.8l2.5 -2.3M1129.4 355.7l-8.2 -2.3M1119.1 360.4l2.2 -2.1M1145.6 360.3l-7.4 -2.1M1092 346.6l2.6 -2.2M1097.2 346.6l-7.8 -2.2M1086.8 351l2.4 -2M1112.6 351l-7 -2M1061.5 337.9l2.7 -2.1M1066.6 337.9l-7.4 -2.1M1056.1 342.1l2.5 -1.9M1081.3 342.1l-6.7 -1.9M1032.5 329.7l2.8 -2M1037.5 329.7l-7.1 -2M1026.9 333.7l2.6 -1.8M1051.5 333.6l-6.4 -1.8M1004.9 321.8l2.9 -1.9M1009.7 321.8l-6.7 -1.9M999.1 325.6l2.6 -1.7M1023 325.6l-6.1 -1.7M978.5 314.3l3 -1.8M983.2 314.2l-6.4 -1.8M972.5 317.9l2.7 -1.7M995.9 317.9l-5.8 -1.6M953.2 307.1l3.1 -1.8M957.9 307.1l-6.2 -1.7M947.1 310.5l2.8 -1.6M970 310.5l-5.5 -1.6M929.1 300.2l3.2 -1.7M933.6 300.2l-5.9 -1.7M922.9 303.5l2.8 -1.5M945.3 303.5l-5.3 -1.5M906 293.6l3.2 -1.6M910.4 293.6l-5.6 -1.6M899.6 296.8l2.9 -1.5M921.6 296.7l-5.1 -1.4M883.8 287.3l3.3 -1.5M888.2 287.3l-5.4 -1.5M877.4 290.3l2.9 -1.4M898.9 290.3l-4.9 -1.4M862.6 281.2l3.3 -1.5M866.9 281.2l-5.2 -1.5M856.1 284.1l3 -1.3M877.1 284.1l-4.7 -1.3M842.2 275.4l3.3 -1.4M846.4 275.4l-5 -1.4M835.6 278.2l3 -1.3M856.2 278.2l-4.5 -1.3M822.6 269.8l3.4 -1.4M826.7 269.8l-4.8 -1.4M816 272.5l3 -1.2M836.2 272.5l-4.3 -1.2M803.8 264.4l3.4 -1.3M807.8 264.4l-4.6 -1.3M797.1 267l3.1 -1.2M816.9 267l-4.1 -1.2M785.6 259.3l3.4 -1.3M789.6 259.3l-4.4 -1.3M778.9 261.8l3.1 -1.1M798.3 261.7l-4 -1.1M768.2 254.3l3.4 -1.2M772 254.3l-4.3 -1.2M761.4 256.7l3.1 -1.1M780.5 256.7l-3.8 -1.1M751.3 249.5l3.5 -1.2M755.1 249.5l-4.1 -1.2M744.5 251.8l3.1 -1.1M763.3 251.8l-3.7 -1.1M735.1 244.9l3.5 -1.1M738.8 244.9l-4 -1.1M728.3 247.1l3.1 -1M746.7 247.1l-3.6 -1M719.5 240.4l3.5 -1.1M723.1 240.4l-3.8 -1.1M712.6 242.6l3.1 -1M730.7 242.5l-3.4 -1M704.3 236.1l3.5 -1.1M707.9 236.1l-3.7 -1.1M697.5 238.2l3.1 -1M715.2 238.2l-3.3 -.9M689.7 231.9l3.5 -1M693.3 231.9l-3.6 -1M682.9 233.9l3.1 -.9M700.3 233.9l-3.2 -.9M675.6 227.9l3.5 -1M679.1 227.9l-3.5 -1M668.8 229.9l3.1 -.9M685.9 229.8l-3.1 -.9M662 224l3.5 -1M665.4 224l-3.4 -1M655.1 225.9l3.1 -.9M672 225.9l-3 -.9M648.7 220.2l3.5 -.9M652.1 220.2l-3.3 -.9M641.9 222.1l3.1 -.8M658.5 222l-2.9 -.8M635.9 216.6l3.5 -.9M639.3 216.6l-3.1 -.9M629.1 218.4l3.1 -.8M645.4 218.3l-2.8 -.8M623.5 213.1l3.5 -.9M626.8 213l-3.1 -.9M616.7 214.8l3.1 -.8M632.8 214.8l-2.7 -.8M611.5 209.6l3.5 -.8M614.7 209.6l-3 -.8M604.7 211.3l3.1 -.8M620.6 211.3l-2.6 -.8M599.9 206.3l3.5 -.8M603 206.3l-2.9 -.8M593.1 207.9l3.1 -.7M608.7 207.9l-2.6 -.7M588.6 203.1l3.5 -.8M591.7 203.1l-2.8 -.8M581.8 204.6l3.1 -.7M597.2 204.6l-2.5 -.7M586 201.5l-2.4 -.7M1361.3 409.3l1.1 -3.1M1367.5 409.3l-11.1 -3.1M1359.2 415.4l1 -2.8M1389.5 415.4l-10.1 -2.8M1318 397.4l1.4 -2.9M1323.9 397.4l-10.5 -2.9M1315.3 403.1l1.2 -2.6M1344.7 403.1l-9.5 -2.6M1277.1 386.1l1.6 -2.7M1282.8 386.1l-9.9 -2.7M1273.8 391.5l1.5 -2.5M1302.5 391.5l-9 -2.5M1238.3 375.4l1.8 -2.6M1244 375.4l-9.4 -2.6M1234.7 380.6l1.7 -2.4M1262.5 380.5l-8.5 -2.3M1201.6 365.3l2 -2.5M1207.1 365.3l-8.9 -2.4M1197.6 370.2l1.8 -2.2M1224.7 370.1l-8.1 -2.2M1166.8 355.7l2.2 -2.3M1172.2 355.7l-8.5 -2.3M1162.5 360.3l2 -2.1M1188.9 360.3l-7.6 -2.1M1133.7 346.6l2.4 -2.2M1138.9 346.5l-8 -2.2M1129.1 351l2.1 -2M1154.8 350.9l-7.3 -2M1102.3 337.9l2.5 -2.1M1107.3 337.9l-7.7 -2.1M1097.3 342.1l2.2 -1.9M1122.5 342l-6.9 -1.9M1072.3 329.6l2.6 -2M1077.3 329.6l-7.3 -2M1067.1 333.6l2.4 -1.8M1091.7 333.6l-6.6 -1.8M1043.7 321.7l2.7 -1.9M1048.6 321.7l-7 -1.9M1038.4 325.5l2.4 -1.7M1062.3 325.5l-6.3 -1.7M1016.4 314.2l2.8 -1.8M1021.2 314.2l-6.7 -1.8M1010.9 317.8l2.5 -1.7M1034.3 317.8l-6 -1.6M990.4 307l2.9 -1.8M995 307l-6.4 -1.7M984.7 310.5l2.6 -1.6M1007.5 310.4l-5.7 -1.6M965.4 300.1l3 -1.7M970 300.1l-6.1 -1.7M959.6 303.4l2.7 -1.5M982 303.4l-5.5 -1.5M941.5 293.5l3 -1.6M946 293.5l-5.8 -1.6M935.6 296.7l2.7 -1.5M957.5 296.7l-5.2 -1.4M918.7 287.2l3.1 -1.5M923 287.2l-5.6 -1.5M912.6 290.3l2.8 -1.4M934 290.2l-5 -1.4M896.7 281.2l3.1 -1.5M901 281.2l-5.4 -1.5M890.5 284.1l2.8 -1.3M911.5 284.1l-4.8 -1.3M875.6 275.4l3.2 -1.4M879.8 275.4l-5.2 -1.4M869.4 278.2l2.9 -1.3M890 278.1l-4.6 -1.3M855.4 269.8l3.2 -1.4M859.5 269.8l-5 -1.4M849.1 272.5l2.9 -1.2M869.2 272.4l-4.5 -1.2M835.9 264.4l3.2 -1.3M839.9 264.4l-4.8 -1.3M829.5 267l2.9 -1.2M849.3 267l-4.3 -1.2M817.2 259.2l3.3 -1.3M821.1 259.2l-4.6 -1.3M810.7 261.7l2.9 -1.1M830.2 261.7l-4.1 -1.1M799.1 254.3l3.3 -1.2M803 254.2l-4.4 -1.2M792.7 256.7l3 -1.1M811.7 256.6l-4 -1.1M781.8 249.5l3.3 -1.2M785.6 249.5l-4.3 -1.2M775.2 251.8l3 -1.1M793.9 251.8l-3.8 -1.1M765 244.8l3.3 -1.1M768.7 244.8l-4.1 -1.1M758.4 247.1l3 -1M776.8 247l-3.7 -1M748.8 240.4l3.3 -1.1M752.5 240.4l-4 -1.1M742.2 242.5l3 -1M760.3 242.5l-3.6 -1M733.2 236.1l3.4 -1.1M736.8 236.1l-3.8 -1.1M726.6 238.1l3 -1M744.3 238.1l-3.4 -.9M718.1 231.9l3.4 -1M721.6 231.9l-3.7 -1M711.5 233.9l3 -.9M728.9 233.9l-3.3 -.9M703.5 227.9l3.4 -1M707 227.9l-3.6 -1M696.9 229.8l3 -.9M714 229.8l-3.2 -.9M689.4 224l3.4 -1M692.8 224l-3.5 -1M682.8 225.9l3 -.9M699.6 225.8l-3.1 -.9M675.7 220.2l3.4 -.9M679.1 220.2l-3.4 -.9M669.1 222l3 -.8M685.7 222l-3 -.8M662.5 216.6l3.4 -.9M665.8 216.6l-3.3 -.9M655.9 218.3l3 -.8M672.2 218.3l-2.9 -.8M649.7 213l3.4 -.9M653 213l-3.2 -.9M643.1 214.7l3 -.8M659.2 214.7l-2.8 -.8M637.3 209.6l3.4 -.8M640.5 209.6l-3.1 -.8M630.7 211.3l3 -.8M646.5 211.2l-2.7 -.8M625.2 206.3l3.4 -.8M628.4 206.3l-3 -.8M618.6 207.9l3 -.7M634.2 207.9l-2.6 -.7M613.6 203.1l3.4 -.8M616.7 203.1l-2.9 -.8M607 204.6l3 -.7M622.3 204.6l-2.6 -.7M602.2 199.9l3.3 -.8M605.3 199.9l-2.8 -.8M595.6 201.4l3 -.7M610.8 201.4l-2.5 -.7M599.6 198.4l-2.4 -.7M1365.6 397.3l1 -2.9M1371.6 397.3l-10.8 -2.9M1363.6 403.1l.9 -2.6M1393 403l-9.8 -2.6M1323.4 386l1.3 -2.7M1329.2 386l-10.2 -2.7M1320.8 391.4l1.2 -2.5M1349.4 391.4l-9.3 -2.5M1283.4 375.3l1.5 -2.6M1289 375.3l-9.7 -2.6M1280.4 380.5l1.4 -2.4M1308.2 380.4l-8.8 -2.3M1245.5 365.2l1.7 -2.5M1251 365.2l-9.2 -2.4M1242.1 370.1l1.6 -2.2M1269.2 370l-8.3 -2.2M1209.6 355.6l1.9 -2.3M1214.9 355.6l-8.7 -2.3M1205.8 360.2l1.7 -2.1M1232.2 360.2l-7.9 -2.1M1175.4 346.5l2.1 -2.2M1180.7 346.5l-8.3 -2.2M1171.3 350.9l1.9 -2M1197.1 350.8l-7.5 -2M1143 337.8l2.2 -2.1M1148.1 337.8l-7.9 -2.1M1138.5 342l2 -1.9M1163.7 342l-7.1 -1.9M1112 329.5l2.4 -2M1117 329.5l-7.5 -2M1107.4 333.5l2.1 -1.8M1131.9 333.5l-6.8 -1.8M1082.5 321.7l2.5 -1.9M1087.4 321.7l-7.2 -1.9M1077.6 325.5l2.2 -1.7M1101.6 325.4l-6.5 -1.7M1054.4 314.1l2.6 -1.8M1059.1 314.1l-6.9 -1.8M1049.3 317.8l2.3 -1.7M1072.7 317.7l-6.2 -1.6M1027.5 307l2.7 -1.8M1032.1 306.9l-6.6 -1.7M1022.2 310.4l2.4 -1.6M1045.1 310.4l-5.9 -1.6M1001.7 300.1l2.8 -1.7M1006.3 300.1l-6.3 -1.7M996.3 303.4l2.5 -1.5M1018.7 303.4l-5.7 -1.5M977.1 293.5l2.8 -1.6M981.5 293.5l-6 -1.6M971.5 296.7l2.6 -1.5M993.4 296.6l-5.4 -1.4M953.5 287.2l2.9 -1.5M957.8 287.2l-5.8 -1.5M947.7 290.2l2.6 -1.4M969.2 290.2l-5.2 -1.4M930.8 281.1l3 -1.5M935.1 281.1l-5.5 -1.5M925 284.1l2.7 -1.3M946 284l-5 -1.3M909.1 275.3l3 -1.4M913.2 275.3l-5.3 -1.4M903.1 278.1l2.7 -1.3M923.7 278.1l-4.8 -1.3M888.2 269.7l3.1 -1.4M892.3 269.7l-5.1 -1.4M882.1 272.4l2.7 -1.2M902.3 272.4l-4.6 -1.2M868.1 264.4l3.1 -1.3M872.1 264.4l-4.9 -1.3M862 267l2.8 -1.2M881.8 266.9l-4.4 -1.2M848.7 259.2l3.1 -1.3M852.7 259.2l-4.7 -1.3M842.6 261.7l2.8 -1.1M862 261.7l-4.3 -1.1M830.1 254.2l3.2 -1.2M834 254.2l-4.6 -1.2M823.9 256.6l2.8 -1.1M843 256.6l-4.1 -1.1M812.2 249.4l3.2 -1.2M816 249.4l-4.4 -1.2M805.9 251.7l2.8 -1.1M824.6 251.7l-3.9 -1.1M794.8 244.8l3.2 -1.1M798.6 244.8l-4.2 -1.1M788.6 247l2.9 -1M806.9 247l-3.8 -1M778.1 240.3l3.2 -1.1M781.8 240.3l-4.1 -1.1M771.8 242.5l2.9 -1M789.9 242.5l-3.7 -1M762 236l3.2 -1.1M765.6 236l-4 -1.1M755.7 238.1l2.9 -1M773.4 238.1l-3.5 -.9M746.4 231.9l3.2 -1M750 231.9l-3.8 -1M740.1 233.9l2.9 -.9M757.5 233.9l-3.4 -.9M731.4 227.8l3.3 -1M734.9 227.8l-3.7 -1M725 229.8l2.9 -.9M742.1 229.8l-3.3 -.9M716.8 223.9l3.3 -1M720.2 223.9l-3.6 -1M710.4 225.8l2.9 -.9M727.3 225.8l-3.2 -.9M702.7 220.2l3.3 -.9M706.1 220.2l-3.5 -.9M696.3 222l2.9 -.8M712.9 222l-3.1 -.8M689.1 216.5l3.3 -.9M692.4 216.5l-3.4 -.9M682.7 218.3l2.9 -.8M699 218.3l-3 -.8M675.8 213l3.3 -.9M679.1 213l-3.3 -.9M669.4 214.7l2.9 -.8M685.5 214.7l-2.9 -.8M663 209.6l3.3 -.8M666.2 209.6l-3.2 -.8M656.6 211.2l2.9 -.8M672.4 211.2l-2.8 -.8M650.6 206.3l3.3 -.8M653.8 206.3l-3.1 -.8M644.2 207.9l2.9 -.7M659.8 207.8l-2.7 -.7M638.5 203l3.3 -.8M641.7 203l-3 -.8M632.1 204.6l2.9 -.7M647.5 204.6l-2.7 -.7M626.8 199.9l3.3 -.8M629.9 199.9l-2.9 -.8M620.4 201.4l2.9 -.7M635.6 201.4l-2.6 -.7M615.5 196.9l3.3 -.8M618.5 196.9l-2.8 -.7M609.1 198.3l2.9 -.7M624 198.3l-2.5 -.7M612.8 195.3l-2.4 -.6M1369.7 385.9l1 -2.7M1375.4 385.9l-10.6 -2.7M1367.7 391.4l.9 -2.5M1396.3 391.3l-9.6 -2.5M1328.4 375.2l1.2 -2.6M1334.1 375.2l-10 -2.6M1326 380.4l1.1 -2.4M1353.9 380.3l-9 -2.3M1289.4 365.1l1.5 -2.5M1294.9 365.1l-9.5 -2.4M1286.5 370l1.3 -2.2M1313.6 370l-8.6 -2.2M1252.3 355.5l1.7 -2.3M1257.7 355.5l-9 -2.3M1249.1 360.2l1.5 -2.1M1275.5 360.1l-8.1 -2.1M1217.1 346.4l1.8 -2.2M1222.4 346.4l-8.6 -2.2M1213.5 350.8l1.7 -2M1239.3 350.8l-7.7 -2M1183.7 337.7l2 -2.1M1188.7 337.7l-8.1 -2.1M1179.7 341.9l1.8 -1.9M1204.8 341.9l-7.3 -1.9M1151.8 329.5l2.1 -2M1156.7 329.5l-7.8 -2M1147.6 333.5l1.9 -1.8M1172.1 333.4l-7 -1.8M1121.4 321.6l2.3 -1.9M1126.2 321.6l-7.4 -1.9M1116.9 325.4l2 -1.7M1140.8 325.4l-6.7 -1.7M1092.3 314.1l2.4 -1.8M1097.1 314.1l-7.1 -1.8M1087.6 317.7l2.1 -1.7M1111 317.7l-6.4 -1.6M1064.6 306.9l2.5 -1.8M1069.2 306.9l-6.8 -1.7M1059.7 310.4l2.2 -1.6M1082.6 310.3l-6.1 -1.6M1038 300l2.6 -1.7M1042.6 300l-6.5 -1.7M1033 303.3l2.3 -1.5M1055.3 303.3l-5.8 -1.5M1012.6 293.4l2.6 -1.6M1017.1 293.4l-6.2 -1.6M1007.4 296.6l2.4 -1.5M1029.3 296.6l-5.6 -1.4M988.3 287.1l2.7 -1.5M992.6 287.1l-6 -1.5M982.9 290.2l2.4 -1.4M1004.3 290.2l-5.3 -1.4M964.9 281.1l2.8 -1.5M969.2 281.1l-5.7 -1.5M959.4 284l2.5 -1.3M980.4 284l-5.1 -1.3M942.5 275.3l2.8 -1.4M946.7 275.3l-5.5 -1.4M936.9 278.1l2.6 -1.3M957.5 278.1l-4.9 -1.3M920.9 269.7l2.9 -1.4M925 269.7l-5.3 -1.4M915.2 272.4l2.6 -1.2M935.4 272.4l-4.7 -1.2M900.2 264.3l2.9 -1.3M904.2 264.3l-5.1 -1.3M894.4 266.9l2.6 -1.2M914.2 266.9l-4.6 -1.2M880.3 259.2l3 -1.3M884.2 259.1l-4.9 -1.3M874.4 261.7l2.7 -1.1M893.8 261.6l-4.4 -1.1M861.1 254.2l3 -1.2M864.9 254.2l-4.7 -1.2M855.1 256.6l2.7 -1.1M874.2 256.6l-4.2 -1.1M842.5 249.4l3 -1.2M846.3 249.4l-4.5 -1.2M836.6 251.7l2.7 -1.1M855.3 251.7l-4.1 -1M824.7 244.8l3.1 -1.1M828.4 244.8l-4.4 -1.1M818.7 247l2.7 -1M837 247l-3.9 -1M807.5 240.3l3.1 -1.1M811.1 240.3l-4.2 -1.1M801.4 242.5l2.8 -1M819.5 242.4l-3.8 -1M790.9 236l3.1 -1.1M794.5 236l-4.1 -1.1M784.7 238.1l2.8 -1M802.5 238.1l-3.7 -.9M774.8 231.8l3.1 -1M778.3 231.8l-3.9 -1M768.7 233.8l2.8 -.9M786.1 233.8l-3.5 -.9M759.3 227.8l3.1 -1M762.7 227.8l-3.8 -1M753.1 229.8l2.8 -.9M770.2 229.7l-3.4 -.9M744.2 223.9l3.1 -1M747.7 223.9l-3.7 -1M738.1 225.8l2.8 -.9M754.9 225.8l-3.3 -.9M729.7 220.2l3.2 -.9M733.1 220.1l-3.6 -.9M723.5 222l2.8 -.8M740.1 222l-3.2 -.8M715.6 216.5l3.2 -.9M718.9 216.5l-3.5 -.9M709.4 218.3l2.8 -.8M725.7 218.3l-3.1 -.8M702 213l3.2 -.9M705.3 213l-3.4 -.9M695.8 214.7l2.8 -.8M711.8 214.7l-3 -.8M688.8 209.5l3.2 -.8M692 209.5l-3.3 -.8M682.6 211.2l2.8 -.8M698.4 211.2l-2.9 -.8M675.9 206.2l3.2 -.8M679.1 206.2l-3.2 -.8M669.7 207.8l2.8 -.7M685.3 207.8l-2.8 -.7M663.5 203l3.2 -.8M666.6 203l-3.1 -.8M657.3 204.6l2.8 -.7M672.6 204.6l-2.7 -.7M651.4 199.9l3.2 -.8M654.5 199.9l-3 -.8M645.2 201.4l2.8 -.7M660.4 201.4l-2.7 -.7M639.7 196.8l3.2 -.8M642.8 196.8l-2.9 -.7M633.5 198.3l2.8 -.7M648.4 198.3l-2.6 -.7M628.3 193.9l3.2 -.7M631.3 193.9l-2.8 -.7M622.1 195.3l2.8 -.7M636.8 195.3l-2.5 -.6M625.6 192.4l-2.4 -.6M1373.5 375.2l.9 -2.6M1379.1 375.2l-10.3 -2.6M1371.7 380.3l.8 -2.3M1399.5 380.3l-9.3 -2.3M1333.3 365.1l1.2 -2.5M1338.7 365l-9.8 -2.4M1331 369.9l1.1 -2.2M1358.1 369.9l-8.8 -2.2M1295.1 355.5l1.4 -2.3M1300.4 355.5l-9.3 -2.3M1292.4 360.1l1.2 -2.1M1318.8 360l-8.4 -2.1M1258.8 346.3l1.6 -2.2M1264 346.3l-8.8 -2.2M1255.7 350.7l1.4 -2M1281.5 350.7l-8 -2M1224.3 337.7l1.7 -2.1M1229.4 337.7l-8.4 -2.1M1220.9 341.9l1.6 -1.9M1246 341.8l-7.6 -1.9M1191.5 329.4l1.9 -2M1196.4 329.4l-8 -2M1187.7 333.4l1.7 -1.8M1212.2 333.4l-7.2 -1.8M1160.2 321.5l2 -1.9M1165 321.5l-7.6 -1.9M1156.1 325.3l1.8 -1.7M1180.1 325.3l-6.9 -1.7M1130.2 314l2.2 -1.8M1135 314l-7.3 -1.8M1126 317.7l1.9 -1.7M1149.4 317.6l-6.6 -1.6M1101.7 306.8l2.3 -1.8M1106.3 306.8l-7 -1.7M1097.2 310.3l2 -1.6M1120.1 310.3l-6.3 -1.6M1074.3 300l2.4 -1.7M1078.9 300l-6.7 -1.7M1069.6 303.3l2.1 -1.5M1092 303.3l-6 -1.5M1048.1 293.4l2.5 -1.6M1052.6 293.4l-6.4 -1.6M1043.3 296.6l2.2 -1.5M1065.2 296.5l-5.7 -1.4M1023.1 287.1l2.5 -1.5M1027.4 287.1l-6.1 -1.5M1018 290.1l2.3 -1.4M1039.5 290.1l-5.5 -1.4M999 281l2.6 -1.5M1003.2 281l-5.9 -1.5M993.8 284l2.3 -1.3M1014.8 283.9l-5.3 -1.3M975.9 275.2l2.7 -1.4M980.1 275.2l-5.7 -1.4M970.6 278l2.4 -1.3M991.2 278l-5.1 -1.3M953.7 269.6l2.7 -1.4M957.8 269.6l-5.4 -1.4M948.3 272.3l2.5 -1.2M968.5 272.3l-4.9 -1.2M932.3 264.3l2.8 -1.3M936.3 264.3l-5.2 -1.3M926.9 266.9l2.5 -1.2M946.6 266.8l-4.7 -1.2M911.8 259.1l2.8 -1.3M915.7 259.1l-5 -1.3M906.2 261.6l2.5 -1.1M925.6 261.6l-4.5 -1.1M892 254.1l2.9 -1.2M895.9 254.1l-4.9 -1.2M886.4 256.5l2.6 -1.1M905.4 256.5l-4.3 -1.1M872.9 249.3l2.9 -1.2M876.7 249.3l-4.7 -1.2M867.2 251.7l2.6 -1.1M885.9 251.6l-4.2 -1M854.5 244.7l2.9 -1.1M858.3 244.7l-4.5 -1.1M848.8 247l2.6 -1M867.1 246.9l-4 -1M836.8 240.3l3 -1.1M840.5 240.3l-4.4 -1.1M831 242.4l2.7 -1M849 242.4l-3.9 -1M819.7 236l3 -1.1M823.3 236l-4.2 -1.1M813.8 238l2.7 -1M831.5 238l-3.8 -.9M803.1 231.8l3 -1M806.7 231.8l-4.1 -1M797.2 233.8l2.7 -.9M814.7 233.8l-3.6 -.9M787.1 227.8l3 -1M790.6 227.8l-3.9 -1M781.2 229.7l2.7 -.9M798.3 229.7l-3.5 -.9M771.6 223.9l3 -1M775.1 223.9l-3.8 -1M765.7 225.8l2.7 -.9M782.5 225.8l-3.4 -.9M756.7 220.1l3 -.9M760 220.1l-3.7 -.9M750.7 221.9l2.7 -.8M767.3 221.9l-3.3 -.8M742.2 216.5l3.1 -.9M745.5 216.5l-3.6 -.9M736.2 218.2l2.7 -.8M752.5 218.2l-3.2 -.8M728.1 212.9l3.1 -.9M731.4 212.9l-3.5 -.9M722.1 214.7l2.7 -.8M738.2 214.6l-3.1 -.8M714.5 209.5l3.1 -.8M717.7 209.5l-3.4 -.8M708.5 211.2l2.7 -.8M724.3 211.2l-3 -.8M701.3 206.2l3.1 -.8M704.5 206.2l-3.3 -.8M695.3 207.8l2.7 -.7M710.8 207.8l-2.9 -.7M688.5 203l3.1 -.8M691.6 203l-3.2 -.8M682.5 204.5l2.7 -.7M697.8 204.5l-2.8 -.7M676 199.9l3.1 -.8M679.1 199.9l-3.1 -.8M670 201.4l2.7 -.7M685.1 201.4l-2.7 -.7M664 196.8l3.1 -.8M667 196.8l-3 -.7M657.9 198.3l2.7 -.7M672.8 198.3l-2.7 -.7M652.2 193.9l3.1 -.7M655.2 193.9l-2.9 -.7M646.2 195.3l2.7 -.7M660.9 195.3l-2.6 -.6M640.8 191l3.1 -.7M643.8 191l-2.8 -.7M634.8 192.4l2.7 -.6M649.3 192.4l-2.5 -.6M638 189.6l-2.4 -.6M1377.1 365l.9 -2.5M1382.6 365l-10 -2.4M1375.4 369.9l.8 -2.2M1402.5 369.8l-9.1 -2.2M1337.8 355.4l1.1 -2.3M1343.2 355.4l-9.5 -2.3M1335.6 360l1 -2.1M1362 360l-8.6 -2.1M1300.5 346.3l1.3 -2.2M1305.7 346.3l-9.1 -2.2M1297.9 350.7l1.2 -2M1323.6 350.6l-8.2 -2M1265 337.6l1.5 -2.1M1270.1 337.6l-8.6 -2.1M1262 341.8l1.3 -1.9M1287.1 341.8l-7.8 -1.9M1231.2 329.4l1.7 -2M1236.1 329.3l-8.2 -2M1227.9 333.3l1.5 -1.8M1252.4 333.3l-7.4 -1.8M1198.9 321.5l1.8 -1.9M1203.8 321.5l-7.9 -1.9M1195.4 325.3l1.6 -1.7M1219.3 325.2l-7.1 -1.7M1168.2 314l1.9 -1.8M1172.9 314l-7.5 -1.8M1164.3 317.6l1.8 -1.7M1187.7 317.6l-6.8 -1.6M1138.7 306.8l2.1 -1.8M1143.4 306.8l-7.2 -1.7M1134.7 310.3l1.9 -1.6M1157.5 310.2l-6.5 -1.6M1110.6 299.9l2.2 -1.7M1115.1 299.9l-6.9 -1.7M1106.3 303.2l2 -1.5M1128.7 303.2l-6.2 -1.5M1083.7 293.3l2.3 -1.6M1088.1 293.3l-6.6 -1.6M1079.2 296.5l2 -1.5M1101.1 296.5l-5.9 -1.4M1057.8 287l2.4 -1.5M1062.2 287l-6.3 -1.5M1053.2 290.1l2.1 -1.4M1074.6 290.1l-5.7 -1.4M1033.1 281l2.4 -1.5M1037.3 281l-6.1 -1.5M1028.3 283.9l2.2 -1.3M1049.2 283.9l-5.4 -1.3M1009.3 275.2l2.5 -1.4M1013.4 275.2l-5.8 -1.4M1004.3 278l2.3 -1.3M1024.9 278l-5.2 -1.3M986.4 269.6l2.6 -1.4M990.5 269.6l-5.6 -1.4M981.4 272.3l2.3 -1.2M1001.5 272.3l-5 -1.2M964.4 264.2l2.6 -1.3M968.5 264.2l-5.4 -1.3M959.3 266.8l2.4 -1.2M979 266.8l-4.8 -1.2M943.3 259.1l2.7 -1.3M947.2 259.1l-5.2 -1.3M938 261.6l2.4 -1.1M957.4 261.5l-4.6 -1.1M922.9 254.1l2.7 -1.2M926.8 254.1l-5 -1.2M917.6 256.5l2.4 -1.1M936.6 256.5l-4.5 -1.1M903.3 249.3l2.8 -1.2M907.1 249.3l-4.8 -1.2M897.9 251.6l2.5 -1.1M916.6 251.6l-4.3 -1M884.4 244.7l2.8 -1.1M888.1 244.7l-4.6 -1.1M878.9 246.9l2.5 -1M897.2 246.9l-4.2 -1M866.1 240.2l2.8 -1.1M869.8 240.2l-4.5 -1.1M860.6 242.4l2.5 -1M878.6 242.4l-4 -1M848.5 235.9l2.9 -1.1M852.1 235.9l-4.3 -1.1M842.9 238l2.6 -1M860.6 238l-3.9 -.9M831.5 231.8l2.9 -1M835 231.8l-4.2 -1M825.8 233.8l2.6 -.9M843.2 233.8l-3.7 -.9M815 227.7l2.9 -1M818.5 227.7l-4 -1M809.3 229.7l2.6 -.9M826.4 229.7l-3.6 -.9M799.1 223.9l2.9 -1M802.5 223.9l-3.9 -1M793.3 225.7l2.6 -.9M810.2 225.7l-3.5 -.9M783.6 220.1l2.9 -.9M787 220.1l-3.8 -.9M777.9 221.9l2.6 -.8M794.4 221.9l-3.4 -.8M768.7 216.4l2.9 -.9M772 216.4l-3.7 -.9M762.9 218.2l2.6 -.8M779.2 218.2l-3.3 -.8M754.2 212.9l3 -.9M757.5 212.9l-3.6 -.9M748.4 214.6l2.6 -.8M764.5 214.6l-3.2 -.8M740.2 209.5l3 -.8M743.4 209.5l-3.4 -.8M734.4 211.2l2.7 -.8M750.2 211.1l-3.1 -.7M726.6 206.2l3 -.8M729.8 206.2l-3.3 -.8M720.8 207.8l2.7 -.7M736.4 207.8l-3 -.7M713.4 203l3 -.8M716.6 203l-3.2 -.8M707.6 204.5l2.7 -.7M722.9 204.5l-2.9 -.7M700.6 199.8l3 -.8M703.7 199.8l-3.2 -.8M694.8 201.3l2.7 -.7M709.9 201.3l-2.8 -.7M688.2 196.8l3 -.8M691.2 196.8l-3.1 -.7M682.4 198.3l2.7 -.7M697.3 198.3l-2.7 -.7M676.1 193.9l3 -.7M679.1 193.8l-3 -.7M670.3 195.3l2.7 -.7M685 195.3l-2.7 -.6M664.4 191l3 -.7M667.4 191l-2.9 -.7M658.5 192.4l2.7 -.6M673 192.4l-2.6 -.6M653 188.2l3 -.7M655.9 188.2l-2.8 -.7M647.1 189.6l2.7 -.6M661.4 189.5l-2.5 -.6M650.1 186.8l-2.4 -.6M1380.5 355.3l.8 -2.3M1385.9 355.3l-9.8 -2.3M1378.9 359.9l.8 -2.1M1405.3 359.9l-8.9 -2.1M1342.2 346.2l1 -2.2M1347.4 346.2l-9.3 -2.2M1340.1 350.6l.9 -2M1365.8 350.6l-8.4 -2M1305.6 337.5l1.2 -2.1M1310.7 337.5l-8.9 -2.1M1303.2 341.7l1.1 -1.9M1328.3 341.7l-8 -1.9M1270.9 329.3l1.4 -2M1275.8 329.3l-8.5 -2M1268.1 333.3l1.3 -1.8M1292.5 333.2l-7.6 -1.8M1237.7 321.4l1.6 -1.9M1242.6 321.4l-8.1 -1.9M1234.6 325.2l1.4 -1.7M1258.5 325.2l-7.3 -1.7M1206.1 313.9l1.7 -1.8M1210.8 313.9l-7.7 -1.8M1202.6 317.5l1.6 -1.7M1226 317.5l-6.9 -1.6M1175.8 306.7l1.9 -1.8M1180.4 306.7l-7.4 -1.7M1172.1 310.2l1.7 -1.6M1195 310.2l-6.6 -1.6M1146.9 299.9l2 -1.7M1151.4 299.9l-7.1 -1.7M1143 303.2l1.8 -1.5M1165.3 303.2l-6.4 -1.5M1119.2 293.3l2.1 -1.6M1123.6 293.3l-6.8 -1.6M1115 296.5l1.9 -1.5M1136.9 296.4l-6.1 -1.4M1092.6 287l2.2 -1.5M1096.9 287l-6.5 -1.5M1088.3 290l2 -1.4M1109.7 290l-5.8 -1.4M1067.1 280.9l2.3 -1.5M1071.4 280.9l-6.2 -1.5M1062.7 283.9l2 -1.3M1083.6 283.8l-5.6 -1.3M1042.7 275.1l2.3 -1.4M1046.8 275.1l-6 -1.4M1038 277.9l2.1 -1.3M1058.6 277.9l-5.4 -1.3M1019.2 269.6l2.4 -1.4M1023.2 269.6l-5.8 -1.4M1014.4 272.3l2.2 -1.2M1034.6 272.2l-5.2 -1.2M996.6 264.2l2.5 -1.3M1000.6 264.2l-5.5 -1.3M991.7 266.8l2.2 -1.2M1011.5 266.8l-5 -1.2M974.8 259l2.5 -1.3M978.7 259l-5.3 -1.3M969.8 261.5l2.3 -1.1M989.2 261.5l-4.8 -1.1M953.9 254.1l2.6 -1.2M957.7 254.1l-5.1 -1.2M948.8 256.5l2.3 -1.1M967.8 256.4l-4.6 -1.1M933.7 249.3l2.6 -1.2M937.5 249.3l-4.9 -1.2M928.5 251.6l2.4 -1.1M947.2 251.6l-4.4 -1M914.2 244.7l2.7 -1.1M917.9 244.7l-4.8 -1.1M909 246.9l2.4 -1M927.3 246.9l-4.3 -1M895.4 240.2l2.7 -1.1M899.1 240.2l-4.6 -1.1M890.1 242.4l2.4 -1M908.2 242.3l-4.1 -1M877.3 235.9l2.7 -1.1M880.9 235.9l-4.5 -1.1M871.9 238l2.4 -1M889.6 238l-4 -.9M859.8 231.7l2.8 -1M863.3 231.7l-4.3 -1M854.4 233.8l2.5 -.9M871.8 233.7l-3.9 -.9M842.8 227.7l2.8 -1M846.3 227.7l-4.2 -1M837.4 229.7l2.5 -.9M854.5 229.6l-3.7 -.9M826.5 223.8l2.8 -1M829.9 223.8l-4 -1M820.9 225.7l2.5 -.9M837.8 225.7l-3.6 -.9M810.6 220.1l2.8 -.9M814 220.1l-3.9 -.9M805 221.9l2.5 -.8M821.6 221.9l-3.5 -.8M795.2 216.4l2.8 -.9M798.6 216.4l-3.8 -.9M789.7 218.2l2.5 -.8M806 218.2l-3.4 -.8M780.4 212.9l2.9 -.9M783.6 212.9l-3.7 -.9M774.8 214.6l2.6 -.8M790.8 214.6l-3.3 -.8M766 209.5l2.9 -.8M769.2 209.5l-3.5 -.8M760.3 211.1l2.6 -.8M776.1 211.1l-3.2 -.7M752 206.2l2.9 -.8M755.1 206.1l-3.4 -.8M746.3 207.8l2.6 -.7M761.9 207.7l-3.1 -.7M738.4 202.9l2.9 -.8M741.5 202.9l-3.3 -.8M732.7 204.5l2.6 -.7M748.1 204.5l-3 -.7M725.2 199.8l2.9 -.8M728.3 199.8l-3.2 -.8M719.6 201.3l2.6 -.7M734.7 201.3l-2.9 -.7M712.5 196.8l2.9 -.8M715.5 196.8l-3.1 -.7M706.8 198.2l2.6 -.7M721.7 198.2l-2.8 -.7M700 193.8l2.9 -.7M703 193.8l-3.1 -.7M694.3 195.3l2.6 -.7M709 195.2l-2.7 -.6M688 191l2.9 -.7M690.9 191l-3 -.7M682.3 192.4l2.6 -.6M696.7 192.3l-2.7 -.6M676.2 188.2l2.9 -.7M679.1 188.2l-2.9 -.7M670.5 189.5l2.6 -.6M684.8 189.5l-2.6 -.6M664.8 185.5l2.9 -.7M667.7 185.5l-2.8 -.7M659.1 186.8l2.6 -.6M673.2 186.8l-2.5 -.6M661.9 184.1l-2.4 -.6M1383.8 346.1l.8 -2.2M1389 346.1l-9.6 -2.2M1382.2 350.5l.7 -2M1407.9 350.5l-8.6 -2M1346.3 337.5l1 -2.1M1351.4 337.5l-9.1 -2.1M1344.3 341.7l.9 -1.9M1369.4 341.6l-8.2 -1.9M1310.5 329.2l1.2 -2M1315.5 329.2l-8.7 -2M1308.2 333.2l1.1 -1.8M1332.7 333.2l-7.8 -1.8M1276.5 321.4l1.4 -1.9M1281.3 321.4l-8.3 -1.9M1273.8 325.2l1.2 -1.7M1297.7 325.1l-7.5 -1.7M1243.9 313.9l1.5 -1.8M1248.7 313.8l-7.9 -1.8M1241 317.5l1.4 -1.7M1264.3 317.4l-7.1 -1.6M1212.9 306.7l1.7 -1.8M1217.5 306.7l-7.6 -1.7M1209.6 310.1l1.5 -1.6M1232.4 310.1l-6.8 -1.6M1183.1 299.8l1.8 -1.7M1187.6 299.8l-7.3 -1.7M1179.6 303.1l1.6 -1.5M1202 303.1l-6.5 -1.5M1154.6 293.2l1.9 -1.6M1159.1 293.2l-7 -1.6M1150.9 296.4l1.7 -1.4M1172.8 296.4l-6.3 -1.4M1127.3 286.9l2 -1.5M1131.7 286.9l-6.7 -1.5M1123.4 290l1.8 -1.4M1144.8 290l-6 -1.4M1101.2 280.9l2.1 -1.5M1105.4 280.9l-6.4 -1.5M1097.1 283.8l1.9 -1.3M1118 283.8l-5.7 -1.3M1076 275.1l2.2 -1.4M1080.2 275.1l-6.1 -1.4M1071.8 277.9l2 -1.3M1092.3 277.9l-5.5 -1.3M1051.9 269.5l2.2 -1.4M1056 269.5l-5.9 -1.4M1047.5 272.2l2 -1.2M1067.6 272.2l-5.3 -1.2M1028.7 264.2l2.3 -1.3M1032.7 264.2l-5.7 -1.3M1024.1 266.7l2.1 -1.2M1043.9 266.7l-5.1 -1.2M1006.3 259l2.4 -1.3M1010.2 259l-5.5 -1.3M1001.6 261.5l2.1 -1.1M1021 261.5l-4.9 -1.1M984.8 254l2.4 -1.2M988.6 254l-5.3 -1.2M980 256.4l2.2 -1.1M999 256.4l-4.7 -1.1M964 249.2l2.5 -1.2M967.8 249.2l-5.1 -1.2M959.2 251.6l2.2 -1.1M977.8 251.5l-4.6 -1M944 244.6l2.5 -1.1M947.8 244.6l-4.9 -1.1M939.1 246.9l2.3 -1M957.4 246.8l-4.4 -1M924.7 240.2l2.6 -1.1M928.4 240.2l-4.7 -1.1M919.7 242.3l2.3 -1M937.7 242.3l-4.2 -1M906.1 235.9l2.6 -1.1M909.7 235.9l-4.6 -1.1M901 237.9l2.3 -.9M918.7 237.9l-4.1 -.9M888.1 231.7l2.6 -1M891.6 231.7l-4.4 -1M882.9 233.7l2.4 -.9M900.3 233.7l-4 -.9M870.7 227.7l2.7 -1M874.2 227.7l-4.3 -1M865.4 229.6l2.4 -.9M882.6 229.6l-3.8 -.9M853.8 223.8l2.7 -1M857.3 223.8l-4.1 -1M848.6 225.7l2.4 -.9M865.4 225.7l-3.7 -.9M837.5 220l2.7 -.9M840.9 220l-4 -.9M832.2 221.9l2.4 -.8M848.8 221.8l-3.6 -.8M821.8 216.4l2.7 -.9M825.1 216.4l-3.9 -.9M816.4 218.2l2.4 -.8M832.7 218.1l-3.5 -.8M806.5 212.9l2.8 -.9M809.7 212.9l-3.8 -.9M801.1 214.6l2.5 -.8M817.1 214.6l-3.4 -.8M791.7 209.4l2.8 -.8M794.9 209.4l-3.6 -.8M786.2 211.1l2.5 -.8M802 211.1l-3.3 -.7M777.3 206.1l2.8 -.8M780.5 206.1l-3.5 -.8M771.8 207.7l2.5 -.7M787.4 207.7l-3.2 -.7M763.4 202.9l2.8 -.8M766.5 202.9l-3.4 -.8M757.9 204.5l2.5 -.7M773.2 204.5l-3.1 -.7M749.8 199.8l2.8 -.8M752.9 199.8l-3.3 -.8M744.3 201.3l2.5 -.7M759.4 201.3l-3 -.7M736.7 196.8l2.8 -.8M739.7 196.7l-3.2 -.7M731.2 198.2l2.5 -.7M746.1 198.2l-2.9 -.7M723.9 193.8l2.8 -.7M726.9 193.8l-3.1 -.7M718.4 195.2l2.5 -.7M733.1 195.2l-2.8 -.6M711.5 190.9l2.8 -.7M714.5 190.9l-3.1 -.7M706 192.3l2.5 -.6M720.5 192.3l-2.7 -.6M699.5 188.2l2.8 -.7M702.4 188.2l-3 -.7M693.9 189.5l2.5 -.6M708.2 189.5l-2.7 -.6M687.7 185.4l2.8 -.7M690.6 185.4l-2.9 -.7M682.2 186.8l2.5 -.6M696.3 186.8l-2.6 -.6M676.3 182.8l2.8 -.7M679.1 182.8l-2.8 -.6M670.8 184.1l2.5 -.6M684.7 184.1l-2.5 -.6M673.4 181.5l-2.4 -.6M1386.9 337.4l.8 -2.1M1392 337.4l-9.4 -2.1M1385.4 341.6l.7 -1.9M1410.5 341.6l-8.4 -1.9M1350.2 329.2l1 -2M1355.2 329.2l-8.9 -2M1348.3 333.2l.9 -1.8M1372.8 333.1l-8 -1.8M1315.2 321.3l1.1 -1.9M1320.1 321.3l-8.5 -1.9M1313 325.1l1 -1.7M1336.9 325.1l-7.7 -1.7M1281.8 313.8l1.3 -1.8M1286.5 313.8l-8.1 -1.8M1279.3 317.4l1.2 -1.7M1302.6 317.4l-7.3 -1.6M1249.9 306.6l1.4 -1.8M1254.5 306.6l-7.8 -1.7M1247 310.1l1.3 -1.6M1269.9 310.1l-7 -1.6M1219.4 299.8l1.6 -1.7M1223.9 299.8l-7.5 -1.7M1216.2 303.1l1.4 -1.5M1238.6 303l-6.7 -1.5M1190.1 293.2l1.7 -1.6M1194.5 293.2l-7.1 -1.6M1186.8 296.4l1.5 -1.4M1208.6 296.3l-6.4 -1.4M1162.1 286.9l1.8 -1.5M1166.4 286.9l-6.8 -1.5M1158.5 289.9l1.6 -1.4M1179.9 289.9l-6.2 -1.4M1135.2 280.8l1.9 -1.5M1139.5 280.8l-6.6 -1.5M1131.4 283.8l1.7 -1.3M1152.4 283.7l-5.9 -1.3M1109.4 275l2 -1.4M1113.6 275l-6.3 -1.4M1105.4 277.9l1.8 -1.3M1126 277.8l-5.7 -1.3M1084.6 269.5l2.1 -1.4M1088.7 269.5l-6.1 -1.4M1080.5 272.2l1.9 -1.2M1100.6 272.1l-5.4 -1.2M1060.7 264.1l2.2 -1.3M1064.8 264.1l-5.8 -1.3M1056.5 266.7l1.9 -1.2M1076.2 266.7l-5.2 -1.2M1037.8 259l2.2 -1.3M1041.7 259l-5.6 -1.3M1033.4 261.5l2 -1.1M1052.8 261.4l-5 -1.1M1015.7 254l2.3 -1.2M1019.6 254l-5.4 -1.2M1011.2 256.4l2.1 -1.1M1030.2 256.4l-4.9 -1.1M994.4 249.2l2.3 -1.2M998.2 249.2l-5.2 -1.2M989.8 251.5l2.1 -1.1M1008.5 251.5l-4.7 -1M973.8 244.6l2.4 -1.1M977.6 244.6l-5 -1.1M969.1 246.8l2.1 -1M987.5 246.8l-4.5 -1M954 240.1l2.4 -1.1M957.7 240.1l-4.9 -1.1M949.2 242.3l2.2 -1M967.2 242.3l-4.4 -1M934.9 235.8l2.5 -1.1M938.5 235.8l-4.7 -1.1M930 237.9l2.2 -.9M947.7 237.9l-4.2 -.9M916.4 231.7l2.5 -1M919.9 231.7l-4.5 -1M911.4 233.7l2.3 -.9M928.9 233.7l-4.1 -.9M898.5 227.7l2.6 -1M902 227.7l-4.4 -1M893.5 229.6l2.3 -.9M910.6 229.6l-3.9 -.9M881.2 223.8l2.6 -1M884.7 223.8l-4.2 -1M876.2 225.7l2.3 -.9M893 225.6l-3.8 -.9M864.5 220l2.6 -.9M867.9 220l-4.1 -.9M859.4 221.8l2.3 -.8M875.9 221.8l-3.7 -.8M848.3 216.4l2.6 -.9M851.6 216.4l-4 -.9M843.1 218.1l2.4 -.8M859.4 218.1l-3.6 -.8M832.6 212.8l2.7 -.9M835.9 212.8l-3.9 -.9M827.4 214.5l2.4 -.8M843.4 214.5l-3.5 -.8M817.4 209.4l2.7 -.8M820.6 209.4l-3.7 -.8M812.1 211.1l2.4 -.8M827.9 211.1l-3.3 -.7M802.6 206.1l2.7 -.8M805.8 206.1l-3.6 -.8M797.4 207.7l2.4 -.7M812.9 207.7l-3.2 -.7M788.3 202.9l2.7 -.8M791.4 202.9l-3.5 -.8M783 204.4l2.4 -.7M798.3 204.4l-3.1 -.7M774.4 199.8l2.7 -.8M777.5 199.8l-3.4 -.8M769.1 201.3l2.4 -.7M784.2 201.3l-3.1 -.7M760.9 196.7l2.7 -.8M763.9 196.7l-3.3 -.7M755.6 198.2l2.4 -.7M770.5 198.2l-3 -.7M747.8 193.8l2.7 -.7M750.8 193.8l-3.2 -.7M742.5 195.2l2.4 -.7M757.1 195.2l-2.9 -.6M735.1 190.9l2.7 -.7M738 190.9l-3.1 -.7M729.7 192.3l2.4 -.6M744.2 192.3l-2.8 -.6M722.7 188.1l2.7 -.7M725.6 188.1l-3.1 -.7M717.3 189.5l2.4 -.6M731.6 189.5l-2.7 -.6M710.6 185.4l2.7 -.7M713.5 185.4l-3 -.7M705.3 186.7l2.5 -.6M719.3 186.7l-2.6 -.6M698.9 182.8l2.7 -.7M701.7 182.8l-2.9 -.6M693.5 184.1l2.5 -.6M707.4 184.1l-2.6 -.6M687.5 180.2l2.8 -.6M690.3 180.2l-2.8 -.6M682.1 181.5l2.5 -.6M695.8 181.5l-2.5 -.6M684.5 178.9l-2.4 -.5M1389.8 329.1l.7 -2M1394.8 329.1l-9.2 -2M1388.4 333.1l.6 -1.8M1412.9 333l-8.3 -1.8M1353.9 321.2l.9 -1.9M1358.8 321.2l-8.7 -1.9M1352.2 325l.8 -1.7M1376 325l-7.9 -1.7M1319.7 313.7l1.1 -1.8M1324.4 313.7l-8.4 -1.8M1317.5 317.4l1 -1.7M1340.9 317.3l-7.5 -1.6M1286.9 306.6l1.2 -1.8M1291.5 306.6l-8 -1.7M1284.5 310l1.1 -1.6M1307.3 310l-7.2 -1.6M1255.6 299.7l1.4 -1.7M1260.1 299.7l-7.6 -1.7M1252.9 303l1.2 -1.5M1275.2 303l-6.9 -1.5M1225.6 293.1l1.5 -1.6M1230 293.1l-7.3 -1.6M1222.6 296.3l1.4 -1.4M1244.4 296.3l-6.6 -1.4M1196.8 286.8l1.6 -1.5M1201.2 286.8l-7 -1.5M1193.6 289.9l1.5 -1.4M1215 289.9l-6.3 -1.4M1169.2 280.8l1.7 -1.5M1173.5 280.8l-6.7 -1.5M1165.8 283.7l1.6 -1.3M1186.8 283.7l-6.1 -1.3M1142.7 275l1.8 -1.4M1146.9 275l-6.5 -1.4M1139.1 277.8l1.7 -1.3M1159.7 277.8l-5.8 -1.3M1117.3 269.4l1.9 -1.4M1121.4 269.4l-6.2 -1.4M1113.5 272.1l1.7 -1.2M1133.6 272.1l-5.6 -1.2M1092.8 264.1l2 -1.3M1096.8 264.1l-6 -1.3M1088.9 266.7l1.8 -1.2M1108.6 266.6l-5.4 -1.2M1069.3 258.9l2.1 -1.3M1073.2 258.9l-5.8 -1.3M1065.2 261.4l1.9 -1.1M1084.6 261.4l-5.2 -1.1M1046.6 254l2.1 -1.2M1050.5 253.9l-5.6 -1.2M1042.4 256.4l1.9 -1.1M1061.4 256.3l-5 -1.1M1024.7 249.2l2.2 -1.2M1028.5 249.2l-5.4 -1.2M1020.4 251.5l2 -1.1M1039.1 251.5l-4.8 -1M1003.7 244.6l2.3 -1.1M1007.4 244.5l-5.2 -1.1M999.2 246.8l2 -1M1017.5 246.8l-4.6 -1M983.3 240.1l2.3 -1.1M987 240.1l-5 -1.1M978.8 242.3l2.1 -1M996.8 242.2l-4.5 -1M963.7 235.8l2.4 -1.1M967.3 235.8l-4.8 -1.1M959 237.9l2.1 -.9M976.7 237.9l-4.3 -.9M944.7 231.6l2.4 -1M948.2 231.6l-4.7 -1M940 233.7l2.1 -.9M957.4 233.6l-4.2 -.9M926.4 227.6l2.4 -1M929.8 227.6l-4.5 -1M921.6 229.6l2.2 -.9M938.7 229.6l-4 -.9M908.6 223.7l2.5 -1M912 223.7l-4.4 -1M903.8 225.6l2.2 -.9M920.6 225.6l-3.9 -.9M891.4 220l2.5 -.9M894.8 220l-4.2 -.9M886.5 221.8l2.2 -.8M903.1 221.8l-3.8 -.8M874.8 216.3l2.5 -.9M878.1 216.3l-4.1 -.9M869.8 218.1l2.3 -.8M886.1 218.1l-3.7 -.8M858.7 212.8l2.6 -.9M862 212.8l-4 -.9M853.7 214.5l2.3 -.8M869.7 214.5l-3.5 -.8M843.1 209.4l2.6 -.8M846.3 209.4l-3.8 -.8M838 211.1l2.3 -.8M853.8 211l-3.4 -.7M827.9 206.1l2.6 -.8M831.1 206.1l-3.7 -.8M822.9 207.7l2.3 -.7M838.4 207.7l-3.3 -.7M813.2 202.9l2.6 -.8M816.4 202.9l-3.6 -.8M808.1 204.4l2.3 -.7M823.5 204.4l-3.2 -.7M799 199.7l2.6 -.8M802.1 199.7l-3.5 -.8M793.8 201.3l2.3 -.7M808.9 201.2l-3.1 -.7M785.1 196.7l2.6 -.8M788.2 196.7l-3.4 -.7M780 198.2l2.4 -.7M794.9 198.2l-3 -.7M771.7 193.8l2.6 -.7M774.7 193.8l-3.3 -.7M766.5 195.2l2.4 -.7M781.2 195.2l-3 -.6M758.6 190.9l2.7 -.7M761.6 190.9l-3.2 -.7M753.4 192.3l2.4 -.6M767.9 192.3l-2.9 -.6M745.9 188.1l2.7 -.7M748.8 188.1l-3.1 -.7M740.7 189.5l2.4 -.6M754.9 189.5l-2.8 -.6M733.5 185.4l2.7 -.7M736.4 185.4l-3 -.7M728.3 186.7l2.4 -.6M742.4 186.7l-2.7 -.6M721.5 182.8l2.7 -.7M724.3 182.8l-3 -.6M716.3 184.1l2.4 -.6M730.1 184l-2.6 -.6M709.8 180.2l2.7 -.6M712.6 180.2l-2.9 -.6M704.6 181.5l2.4 -.6M718.2 181.4l-2.6 -.6M698.4 177.7l2.7 -.6M701.1 177.7l-2.8 -.6M693.1 178.9l2.4 -.6M706.7 178.9l-2.5 -.5M695.4 176.5l-2.4 -.5M1357.5 313.7l.9 -1.8M1362.2 313.7l-8.6 -1.8M1355.8 317.3l.8 -1.7M1379.1 317.3l-7.7 -1.6M1323.9 306.5l1 -1.8M1328.6 306.5l-8.2 -1.7M1321.9 310l.9 -1.6M1344.7 309.9l-7.4 -1.6M1291.8 299.7l1.2 -1.7M1296.3 299.7l-7.8 -1.7M1289.5 303l1.1 -1.5M1311.8 302.9l-7.1 -1.5M1261 293.1l1.3 -1.6M1265.5 293.1l-7.5 -1.6M1258.4 296.3l1.2 -1.4M1280.3 296.2l-6.8 -1.4M1231.5 286.8l1.5 -1.5M1235.9 286.8l-7.2 -1.5M1228.7 289.8l1.3 -1.4M1250.1 289.8l-6.5 -1.4M1203.2 280.8l1.6 -1.5M1207.5 280.8l-6.9 -1.5M1200.2 283.7l1.4 -1.3M1221.1 283.6l-6.2 -1.3M1176.1 275l1.7 -1.4M1180.3 275l-6.6 -1.4M1172.8 277.8l1.5 -1.3M1193.3 277.7l-6 -1.3M1150 269.4l1.8 -1.4M1154.1 269.4l-6.4 -1.4M1146.5 272.1l1.6 -1.2M1166.6 272.1l-5.7 -1.2M1124.9 264l1.9 -1.3M1128.9 264l-6.1 -1.3M1121.2 266.6l1.7 -1.2M1141 266.6l-5.5 -1.2M1100.7 258.9l1.9 -1.3M1104.7 258.9l-5.9 -1.3M1096.9 261.4l1.7 -1.1M1116.3 261.3l-5.3 -1.1M1077.5 253.9l2 -1.2M1081.3 253.9l-5.7 -1.2M1073.5 256.3l1.8 -1.1M1092.5 256.3l-5.1 -1.1M1055.1 249.1l2.1 -1.2M1058.9 249.1l-5.5 -1.2M1051 251.4l1.9 -1.1M1069.7 251.4l-4.9 -1M1033.5 244.5l2.1 -1.1M1037.2 244.5l-5.3 -1.1M1029.3 246.8l1.9 -1M1047.6 246.7l-4.7 -1M1012.6 240.1l2.2 -1.1M1016.3 240.1l-5.1 -1.1M1008.3 242.2l2 -1M1026.3 242.2l-4.6 -1M992.4 235.8l2.2 -1.1M996 235.8l-4.9 -1.1M988.1 237.8l2 -.9M1005.8 237.8l-4.4 -.9M973 231.6l2.3 -1M976.5 231.6l-4.8 -1M968.5 233.6l2 -.9M985.9 233.6l-4.3 -.9M954.2 227.6l2.3 -1M957.7 227.6l-4.6 -1M949.6 229.5l2.1 -.9M966.7 229.5l-4.1 -.9M936 223.7l2.4 -1M939.4 223.7l-4.5 -1M931.4 225.6l2.1 -.9M948.2 225.6l-4 -.9M918.4 220l2.4 -.9M921.7 219.9l-4.3 -.9M913.7 221.8l2.1 -.8M930.2 221.8l-3.9 -.8M901.3 216.3l2.4 -.9M904.6 216.3l-4.2 -.9M896.6 218.1l2.2 -.8M912.9 218.1l-3.7 -.8M884.8 212.8l2.4 -.9M888.1 212.8l-4.1 -.9M880 214.5l2.2 -.8M896 214.5l-3.6 -.8M868.8 209.4l2.5 -.8M872 209.4l-3.9 -.8M863.9 211l2.2 -.8M879.7 211l-3.5 -.7M853.2 206.1l2.5 -.8M856.4 206l-3.8 -.8M848.4 207.7l2.2 -.7M863.9 207.6l-3.4 -.7M838.2 202.8l2.5 -.8M841.3 202.8l-3.7 -.8M833.3 204.4l2.2 -.7M848.6 204.4l-3.3 -.7M823.6 199.7l2.5 -.8M826.6 199.7l-3.6 -.8M818.6 201.2l2.3 -.7M833.7 201.2l-3.2 -.7M809.4 196.7l2.5 -.7M812.4 196.7l-3.5 -.7M804.4 198.2l2.3 -.7M819.2 198.1l-3.1 -.7M795.6 193.7l2.6 -.7M798.5 193.7l-3.4 -.7M790.5 195.2l2.3 -.7M805.2 195.2l-3 -.6M782.2 190.9l2.6 -.7M785.1 190.9l-3.3 -.7M777.1 192.3l2.3 -.6M791.6 192.3l-2.9 -.6M769.1 188.1l2.6 -.7M772 188.1l-3.2 -.7M764.1 189.4l2.3 -.6M778.3 189.4l-2.9 -.6M756.4 185.4l2.6 -.7M759.3 185.4l-3.1 -.7M751.4 186.7l2.3 -.6M765.4 186.7l-2.8 -.6M744.1 182.8l2.6 -.7M746.9 182.8l-3 -.6M739 184l2.3 -.6M752.9 184l-2.7 -.6M732.1 180.2l2.6 -.6M734.9 180.2l-3 -.6M727 181.4l2.3 -.6M740.7 181.4l-2.6 -.6M720.4 177.7l2.6 -.6M723.1 177.7l-2.9 -.6M715.3 178.9l2.3 -.6M728.8 178.9l-2.6 -.5M709 175.3l2.6 -.6M711.7 175.3l-2.8 -.6M703.9 176.4l2.3 -.5M717.2 176.4l-2.5 -.5M705.9 174l-2.4 -.5M1359.3 309.9l.7 -1.6M1326 302.9l.9 -1.5M1294.2 296.2l1 -1.4M1263.7 289.8l1.1 -1.4M1234.5 283.6l1.3 -1.3M1206.5 277.7l1.4 -1.3M1179.5 272l1.4 -1.2M1153.6 266.6l1.5 -1.2M1128.7 261.3l1.6 -1.1M1104.7 256.3l1.7 -1.1M1081.6 251.4l1.7 -1.1M1059.3 246.7l1.8 -1M1037.8 242.2l1.8 -1M1017.1 237.8l1.9 -.9M997 233.6l1.9 -.9M977.7 229.5l2 -.9M958.9 225.6l2 -.9M940.8 221.7l2 -.8M923.3 218l2.1 -.8M906.3 214.5l2.1 -.8M889.8 211l2.1 -.8M873.9 207.6l2.1 -.7M858.4 204.4l2.2 -.7M843.3 201.2l2.2 -.7M828.7 198.1l2.2 -.7M814.6 195.1l2.2 -.7M800.8 192.2l2.2 -.6M787.4 189.4l2.2 -.6M774.4 186.7l2.2 -.6M761.7 184l2.2 -.6M749.4 181.4l2.3 -.6M737.4 178.9l2.3 -.6M725.7 176.4l2.3 -.5M714.4 174l2.3 -.5"/>
<path fill="none" stroke="#eceefa" stroke-opacity="0.85" stroke-width="1.5" d="M15.8 522.1l13.9 -4.9M23.6 522l-1.7 -4.9M-11.9 531.9l12.7 -4.5M27 531.8l-1.5 -4.5M9.6 502.9l13.5 -4.6M17.1 502.9l-1.6 -4.6M-17.3 512.1l12.3 -4.2M20.2 512l-1.4 -4.2M3.7 485.2l13 -4.3M11 485.1l-1.5 -4.3M-22.2 493.7l11.9 -3.9M13.9 493.6l-1.3 -3.9M-1.7 468.6l12.7 -4M5.4 468.6l-1.4 -4M-26.9 476.5l11.5 -3.6M8.1 476.5l-1.2 -3.6M78.4 521.9l13.3 -4.9M86.2 521.9l-2.3 -4.9M51.8 531.8l12.2 -4.5M90.7 531.7l-2.1 -4.5M69.9 502.8l12.9 -4.6M77.4 502.8l-2.1 -4.6M44.2 512l11.8 -4.2M81.6 511.9l-1.9 -4.2M62 485l12.5 -4.3M69.3 485l-2 -4.3M37 493.6l11.4 -3.9M73.2 493.5l-1.8 -3.9M54.6 468.4l12.2 -4M61.6 468.4l-1.8 -4M30.4 476.4l11.1 -3.6M65.3 476.3l-1.7 -3.6M140.9 521.7l12.7 -4.9M148.7 521.7l-2.8 -4.9M115.5 531.6l11.6 -4.5M154.4 531.5l-2.6 -4.5M130.2 502.7l12.4 -4.6M137.7 502.6l-2.6 -4.6M105.5 511.8l11.3 -4.2M143 511.7l-2.4 -4.2M120.2 484.9l12 -4.3M127.5 484.9l-2.5 -4.2M96.2 493.4l11 -3.9M132.4 493.3l-2.2 -3.9M110.9 468.3l11.7 -4M117.9 468.3l-2.3 -4M87.6 476.3l10.7 -3.6M122.5 476.2l-2.1 -3.6M190.5 502.5l11.8 -4.6M198 502.5l-3.2 -4.6M166.9 511.7l10.8 -4.2M204.3 511.6l-2.9 -4.2M178.4 484.8l11.5 -4.3M185.6 484.7l-3 -4.2M155.4 493.3l10.5 -3.9M191.5 493.2l-2.7 -3.9M167.1 468.2l11.2 -4M174.1 468.2l-2.8 -4M144.8 476.2l10.2 -3.6M179.6 476.1l-2.5 -3.6M250.7 502.4l11.3 -4.6M258.2 502.4l-3.7 -4.6M228.2 511.5l10.3 -4.2M265.6 511.4l-3.4 -4.2M236.5 484.6l11 -4.3M243.8 484.6l-3.5 -4.2M214.6 493.1l10 -3.9M250.7 493.1l-3.1 -3.9M223.3 468.1l10.8 -4M230.3 468.1l-3.2 -4M201.9 476l9.8 -3.6M236.7 476l-2.9 -3.6M310.9 502.2l10.7 -4.6M318.4 502.2l-4.2 -4.6M289.5 511.4l9.8 -4.2M326.8 511.3l-3.9 -4.2M294.6 484.5l10.5 -4.3M301.9 484.5l-3.9 -4.2M273.7 493l9.6 -3.9M309.8 492.9l-3.6 -3.9M279.5 468l10.3 -4M286.5 467.9l-3.7 -4M259 475.9l9.4 -3.6M293.8 475.8l-3.4 -3.6M371 502.1l10.2 -4.6M378.6 502.1l-4.8 -4.5M350.7 511.2l9.3 -4.2M388.1 511.1l-4.4 -4.1M352.7 484.4l10 -4.3M360 484.4l-4.4 -4.2M332.8 492.9l9.1 -3.9M368.8 492.8l-4.1 -3.9M335.6 467.8l9.8 -4M342.7 467.8l-4.2 -4M316.1 475.8l8.9 -3.6M350.9 475.7l-3.8 -3.6M319.6 452.4l9.6 -3.7M326.4 452.4l-3.9 -3.7M300.5 459.8l8.8 -3.4M334.2 459.7l-3.5 -3.4M431.2 502l9.7 -4.6M438.7 501.9l-5.3 -4.5M411.9 511.1l8.8 -4.2M449.3 511l-4.8 -4.1M410.8 484.2l9.5 -4.3M418 484.2l-4.9 -4.2M391.9 492.7l8.7 -3.9M427.9 492.7l-4.5 -3.9M391.8 467.7l9.3 -4M398.8 467.7l-4.6 -4M373.2 475.6l8.5 -3.6M407.9 475.6l-4.2 -3.6M374 452.3l9.2 -3.7M380.7 452.2l-4.3 -3.7M355.7 459.7l8.4 -3.4M389.3 459.6l-3.9 -3.4M491.3 501.8l9.1 -4.6M498.8 501.8l-5.8 -4.5M473.1 510.9l8.3 -4.2M510.4 510.8l-5.3 -4.1M468.8 484.1l9 -4.3M476.1 484.1l-5.4 -4.2M450.9 492.6l8.2 -3.9M486.9 492.5l-5 -3.9M447.8 467.6l8.9 -4M454.9 467.6l-5.1 -4M430.2 475.5l8.1 -3.6M465 475.4l-4.6 -3.6M428.2 452.1l8.8 -3.7M435 452.1l-4.8 -3.7M410.8 459.6l8 -3.4M444.5 459.5l-4.3 -3.4M551.3 501.7l8.6 -4.6M558.9 501.7l-6.4 -4.5M534.3 510.8l7.8 -4.2M571.5 510.7l-5.8 -4.1M526.8 484l8.5 -4.3M534.1 484l-5.9 -4.2M509.9 492.5l7.7 -3.9M545.9 492.4l-5.4 -3.9M503.9 467.5l8.4 -4M510.9 467.4l-5.5 -4M487.2 475.4l7.7 -3.6M521.9 475.3l-5 -3.6M482.5 452l8.3 -3.7M489.3 452l-5.2 -3.7M466 459.4l7.6 -3.4M499.6 459.4l-4.7 -3.4M611.4 501.5l8 -4.6M618.9 501.5l-6.9 -4.5M595.4 510.6l7.3 -4.2M632.6 510.6l-6.3 -4.1M584.8 483.8l8 -4.3M592 483.8l-6.4 -4.2M568.9 492.3l7.3 -3.9M604.8 492.2l-5.9 -3.9M559.9 467.3l7.9 -4M566.9 467.3l-6 -4M544.1 475.3l7.2 -3.6M578.9 475.2l-5.5 -3.6M536.7 451.9l7.9 -3.7M543.5 451.9l-5.6 -3.7M521.1 459.3l7.2 -3.4M554.7 459.2l-5.1 -3.4M671.4 501.4l7.5 -4.6M678.9 501.4l-7.4 -4.5M656.4 510.5l6.8 -4.2M693.7 510.4l-6.8 -4.1M642.7 483.7l7.5 -4.3M649.9 483.7l-6.9 -4.2M627.8 492.2l6.8 -3.9M663.7 492.1l-6.3 -3.9M615.9 467.2l7.5 -4M622.9 467.2l-6.5 -4M601.1 475.1l6.8 -3.6M635.8 475.1l-5.9 -3.6M590.9 451.8l7.4 -3.7M597.7 451.8l-6.1 -3.7M576.1 459.2l6.8 -3.4M609.7 459.1l-5.5 -3.4M731.3 501.2l7 -4.6M738.8 501.2l-8 -4.5M717.5 510.3l6.4 -4.2M754.7 510.3l-7.3 -4.1M700.6 483.6l7 -4.3M707.8 483.6l-7.4 -4.2M686.7 492.1l6.4 -3.9M722.6 492l-6.8 -3.9M671.9 467.1l7 -4M678.9 467.1l-6.9 -4M658 475l6.4 -3.6M692.7 474.9l-6.3 -3.6M645.1 451.7l7 -3.7M651.8 451.7l-6.5 -3.7M631.2 459.1l6.4 -3.4M664.7 459l-5.9 -3.4M791.3 501.1l6.4 -4.6M798.8 501.1l-8.5 -4.5M778.5 510.2l5.9 -4.2M815.7 510.1l-7.7 -4.1M758.5 483.4l6.5 -4.3M765.7 483.4l-7.9 -4.2M745.6 491.9l5.9 -3.9M781.4 491.8l-7.2 -3.8M727.9 467l6.5 -4M734.8 467l-7.4 -3.9M714.9 474.9l5.9 -3.6M749.5 474.8l-6.7 -3.6M699.2 451.6l6.6 -3.7M706 451.5l-6.9 -3.7M686.2 459l6 -3.4M719.7 458.9l-6.3 -3.4M851.2 501l5.9 -4.6M858.7 500.9l-9 -4.5M839.4 510.1l5.4 -4.2M876.6 510l-8.2 -4.1M816.3 483.3l6 -4.3M823.5 483.3l-8.4 -4.2M804.4 491.8l5.5 -3.9M840.3 491.7l-7.7 -3.8M783.8 466.8l6.1 -4M790.8 466.8l-7.9 -3.9M771.7 474.8l5.5 -3.6M806.4 474.7l-7.1 -3.6M753.3 451.4l6.1 -3.7M760.1 451.4l-7.4 -3.7M741.2 458.8l5.6 -3.4M774.7 458.8l-6.7 -3.4M911 500.8l5.4 -4.6M918.5 500.8l-9.5 -4.5M900.4 509.9l4.9 -4.2M937.5 509.8l-8.7 -4.1M874.1 483.2l5.5 -4.3M881.3 483.2l-8.9 -4.2M863.2 491.7l5 -3.9M899 491.6l-8.1 -3.8M839.7 466.7l5.6 -4M846.6 466.7l-8.3 -3.9M828.5 474.6l5.1 -3.6M863.2 474.6l-7.6 -3.6M807.4 451.3l5.7 -3.7M814.2 451.3l-7.8 -3.7M796.1 458.7l5.2 -3.4M829.7 458.7l-7.1 -3.4M970.9 500.7l4.8 -4.6M978.4 500.7l-10.1 -4.5M961.3 509.8l4.4 -4.2M998.4 509.7l-9.2 -4.1M931.9 483.1l5 -4.3M939.1 483l-9.4 -4.2M922 491.5l4.5 -3.9M957.8 491.4l-8.6 -3.8M895.5 466.6l5.1 -4M902.5 466.6l-8.8 -3.9M885.3 474.5l4.7 -3.6M919.9 474.4l-8 -3.6M861.5 451.2l5.2 -3.7M868.2 451.2l-8.2 -3.7M851.1 458.6l4.8 -3.4M884.6 458.5l-7.5 -3.4M1030.7 500.5l4.3 -4.6M1038.2 500.5l-10.6 -4.5M1022.1 509.6l3.9 -4.2M1059.3 509.5l-9.7 -4.1M989.6 482.9l4.5 -4.2M996.9 482.9l-9.9 -4.2M980.7 491.4l4.1 -3.9M1016.5 491.3l-9 -3.8M951.3 466.5l4.7 -4M958.3 466.5l-9.2 -3.9M942.1 474.4l4.2 -3.6M976.7 474.3l-8.4 -3.6M915.5 451.1l4.8 -3.7M922.3 451.1l-8.7 -3.7M906 458.5l4.4 -3.4M939.5 458.4l-7.9 -3.4M1136.7 519.3l3.5 -4.9M1144.5 519.3l-12 -4.9M1129.8 529.1l3.2 -4.5M1168.3 529l-10.9 -4.4M1090.4 500.4l3.7 -4.6M1097.9 500.4l-11.1 -4.5M1083 509.5l3.4 -4.2M1120.1 509.4l-10.1 -4.1M1047.4 482.8l4 -4.2M1054.6 482.8l-10.4 -4.2M1039.4 491.2l3.6 -3.9M1075.2 491.2l-9.5 -3.8M1007.1 466.4l4.2 -4M1014.1 466.3l-9.7 -3.9M998.8 474.3l3.8 -3.6M1033.4 474.2l-8.8 -3.6M969.5 451l4.4 -3.7M976.3 451l-9.1 -3.7M960.9 458.4l4 -3.4M994.3 458.3l-8.3 -3.4M1198.7 519.2l2.9 -4.9M1206.4 519.1l-12.5 -4.9M1192.9 528.9l2.6 -4.5M1231.4 528.8l-11.4 -4.4M1150.2 500.3l3.2 -4.6M1157.6 500.2l-11.7 -4.5M1143.8 509.3l2.9 -4.2M1180.9 509.2l-10.6 -4.1M1105 482.7l3.5 -4.2M1112.3 482.6l-10.9 -4.2M1098.1 491.1l3.2 -3.9M1133.9 491l-9.9 -3.8M1062.9 466.2l3.7 -4M1069.9 466.2l-10.2 -3.9M1055.5 474.1l3.4 -3.6M1090.1 474l-9.2 -3.6M1260.6 519l2.3 -4.9M1268.3 519l-13.1 -4.9M1256 528.8l2.1 -4.5M1294.4 528.7l-12 -4.4M1209.9 500.1l2.7 -4.5M1217.3 500.1l-12.2 -4.5M1204.5 509.2l2.4 -4.2M1241.6 509.1l-11.1 -4.1M1162.7 482.5l3 -4.2M1169.9 482.5l-11.4 -4.2M1156.7 491l2.7 -3.9M1192.5 490.9l-10.3 -3.8M1118.7 466.1l3.3 -4M1125.6 466.1l-10.6 -3.9M1112.2 474l3 -3.6M1146.7 473.9l-9.7 -3.6M1322.4 518.9l1.7 -4.9M1330.2 518.8l-13.7 -4.9M1319 528.6l1.6 -4.5M1357.4 528.5l-12.5 -4.4M1269.6 500l2.1 -4.5M1277 500l-12.7 -4.5M1265.3 509l2 -4.1M1302.3 508.9l-11.6 -4.1M1220.3 482.4l2.5 -4.2M1227.5 482.4l-11.8 -4.2M1215.4 490.8l2.3 -3.9M1251.1 490.8l-10.8 -3.8M1174.4 466l2.8 -4M1181.3 466l-11.1 -3.9M1168.8 473.9l2.5 -3.6M1203.3 473.8l-10.1 -3.6M1384.3 518.7l1.2 -4.9M1392 518.7l-14.2 -4.8M1381.9 528.5l1.1 -4.5M1420.3 528.4l-13 -4.4M1329.2 499.8l1.6 -4.5M1336.6 499.8l-13.2 -4.5M1326 508.9l1.5 -4.1M1363 508.8l-12.1 -4.1M1277.9 482.3l2 -4.2M1285.1 482.3l-12.3 -4.2M1273.9 490.7l1.8 -3.9M1309.7 490.6l-11.2 -3.8M1230.1 465.9l2.3 -4M1237 465.9l-11.5 -3.9M1225.4 473.7l2.1 -3.6M1259.9 473.7l-10.5 -3.6M1388.8 499.7l1.1 -4.5M1396.2 499.7l-13.7 -4.5M1386.6 508.7l1 -4.1M1423.6 508.7l-12.5 -4.1M1335.5 482.1l1.5 -4.2M1342.7 482.1l-12.8 -4.2M1332.5 490.6l1.4 -3.9M1368.2 490.5l-11.7 -3.8"/>
<path fill="none" stroke="#eceefa" stroke-opacity="0.85" stroke-width="1.75" d="M29.8 564.9l14.9 -5.8M38.3 564.9l-2 -5.7M.1 576.4l13.6 -5.3M42.2 576.3l-1.8 -5.2M22.5 542.6l14.4 -5.3M30.7 542.6l-1.8 -5.3M-6.2 553.3l13.1 -4.9M34.3 553.2l-1.7 -4.8M97.4 564.7l14.2 -5.8M105.9 564.7l-2.6 -5.7M69.1 576.2l13 -5.3M111.1 576.1l-2.4 -5.2M87.5 542.5l13.7 -5.3M95.7 542.5l-2.4 -5.3M60.1 553.1l12.6 -4.9M100.5 553l-2.2 -4.8M165 564.5l13.5 -5.8M173.4 564.5l-3.3 -5.7M138 576l12.4 -5.3M180 575.9l-3 -5.2M152.5 542.3l13.1 -5.3M160.6 542.3l-3.1 -5.3M126.3 552.9l12 -4.9M166.7 552.8l-2.8 -4.8M232.5 564.3l12.8 -5.8M240.9 564.3l-4 -5.7M206.9 575.9l11.7 -5.3M248.9 575.7l-3.6 -5.2M217.4 542.1l12.5 -5.3M225.5 542.1l-3.7 -5.3M192.5 552.8l11.4 -4.9M232.9 552.7l-3.4 -4.8M203.4 521.6l12.1 -4.9M211.2 521.6l-3.4 -4.9M179.2 531.4l11.1 -4.5M218 531.3l-3.1 -4.5M300 564.2l12.1 -5.8M308.4 564.1l-4.6 -5.7M275.7 575.7l11.1 -5.3M317.7 575.6l-4.3 -5.2M282.3 542l11.8 -5.3M290.4 542l-4.3 -5.3M258.6 552.6l10.8 -4.9M299 552.5l-3.9 -4.8M265.9 521.4l11.6 -4.9M273.7 521.4l-4 -4.9M242.8 531.3l10.6 -4.5M281.6 531.2l-3.6 -4.5M367.4 564l11.5 -5.8M375.9 564l-5.3 -5.7M344.5 575.5l10.5 -5.3M386.5 575.4l-4.9 -5.2M347.1 541.8l11.2 -5.3M355.2 541.8l-4.9 -5.3M324.7 552.4l10.3 -4.9M365 552.3l-4.5 -4.8M328.3 521.3l11 -4.9M336.1 521.3l-4.6 -4.9M306.4 531.1l10 -4.5M345.2 531l-4.2 -4.5M434.8 563.8l10.8 -5.7M443.3 563.8l-6 -5.7M413.3 575.3l9.9 -5.3M455.2 575.2l-5.5 -5.2M411.9 541.6l10.6 -5.3M420 541.6l-5.5 -5.3M390.8 552.3l9.7 -4.9M431.1 552.2l-5.1 -4.8M390.7 521.1l10.4 -4.9M398.5 521.1l-5.1 -4.9M370 531l9.5 -4.5M408.8 530.9l-4.7 -4.5M502.2 563.6l10.1 -5.7M510.6 563.6l-6.6 -5.7M482 575.1l9.3 -5.3M523.9 575l-6.1 -5.2M476.7 541.5l10 -5.3M484.8 541.5l-6.1 -5.3M456.8 552.1l9.1 -4.9M497.1 552l-5.6 -4.8M453.1 521l9.8 -4.9M460.9 521l-5.7 -4.9M433.5 530.8l9 -4.5M472.3 530.7l-5.2 -4.5M569.5 563.5l9.4 -5.7M577.9 563.4l-7.3 -5.7M550.7 574.9l8.6 -5.3M592.6 574.8l-6.7 -5.2M541.4 541.3l9.3 -5.3M549.5 541.3l-6.8 -5.3M522.8 551.9l8.5 -4.9M563 551.8l-6.2 -4.8M515.4 520.8l9.2 -4.9M523.2 520.8l-6.3 -4.9M497 530.7l8.4 -4.5M535.7 530.6l-5.7 -4.5M636.8 563.3l8.7 -5.7M645.2 563.3l-8 -5.7M619.3 574.7l8 -5.3M661.2 574.6l-7.3 -5.2M606.1 541.2l8.7 -5.3M614.2 541.1l-7.4 -5.3M588.7 551.8l8 -4.9M628.9 551.6l-6.8 -4.8M577.7 520.7l8.7 -4.9M585.5 520.7l-6.8 -4.9M560.5 530.5l7.9 -4.5M599.1 530.4l-6.3 -4.5M704 563.1l8.1 -5.7M712.4 563.1l-8.6 -5.7M687.9 574.6l7.4 -5.3M729.7 574.5l-7.9 -5.2M670.8 541l8.1 -5.3M678.8 541l-8 -5.3M654.6 551.6l7.4 -4.9M694.8 551.5l-7.3 -4.8M640 520.5l8.1 -4.9M647.7 520.5l-7.4 -4.9M623.9 530.3l7.4 -4.5M662.5 530.2l-6.8 -4.5M771.2 562.9l7.4 -5.7M779.6 562.9l-9.3 -5.7M756.4 574.4l6.8 -5.3M798.2 574.3l-8.5 -5.2M735.4 540.8l7.5 -5.3M743.4 540.8l-8.6 -5.3M720.5 551.4l6.8 -4.8M760.6 551.3l-7.9 -4.8M702.2 520.4l7.5 -4.9M710 520.4l-8 -4.9M687.2 530.2l6.8 -4.5M725.9 530.1l-7.3 -4.5M838.4 562.7l6.7 -5.7M846.8 562.7l-10 -5.7M824.9 574.2l6.2 -5.2M866.7 574.1l-9.1 -5.2M799.9 540.7l6.8 -5.3M808 540.6l-9.2 -5.3M786.3 551.2l6.3 -4.8M826.4 551.1l-8.4 -4.8M764.4 520.2l6.9 -4.9M772.1 520.2l-8.6 -4.9M750.6 530l6.3 -4.5M789.2 529.9l-7.8 -4.5M905.5 562.6l6 -5.7M913.9 562.5l-10.6 -5.7M893.4 574l5.5 -5.2M935.1 573.9l-9.7 -5.2M864.5 540.5l6.2 -5.3M872.5 540.5l-9.8 -5.3M852.1 551.1l5.7 -4.8M892.2 551l-9 -4.8M826.5 520.1l6.3 -4.9M834.3 520.1l-9.1 -4.9M813.9 529.9l5.8 -4.5M852.5 529.8l-8.3 -4.5M972.6 562.4l5.4 -5.7M980.9 562.4l-11.3 -5.7M961.8 573.8l4.9 -5.2M1003.5 573.7l-10.4 -5.2M929 540.3l5.6 -5.3M937 540.3l-10.5 -5.3M917.8 550.9l5.1 -4.8M957.9 550.8l-9.6 -4.8M888.6 519.9l5.8 -4.9M896.4 519.9l-9.7 -4.9M877.2 529.7l5.3 -4.5M915.7 529.6l-8.9 -4.4M1039.6 562.2l4.7 -5.7M1048 562.2l-12 -5.7M1030.2 573.6l4.3 -5.2M1071.9 573.5l-11 -5.2M993.4 540.2l5 -5.3M1001.5 540.2l-11.1 -5.2M983.5 550.7l4.5 -4.8M1023.6 550.6l-10.1 -4.8M950.7 519.8l5.2 -4.9M958.5 519.7l-10.3 -4.9M940.4 529.5l4.7 -4.5M978.9 529.5l-9.4 -4.4M1106.6 562l4 -5.7M1114.9 562l-12.6 -5.7M1098.5 573.5l3.7 -5.2M1140.2 573.3l-11.6 -5.2M1057.9 540l4.3 -5.3M1065.9 540l-11.7 -5.2M1049.2 550.6l4 -4.8M1089.2 550.5l-10.7 -4.8M1012.8 519.6l4.6 -4.9M1020.5 519.6l-10.8 -4.9M1003.6 529.4l4.2 -4.5M1042.1 529.3l-9.9 -4.4M1173.5 561.9l3.4 -5.7M1181.9 561.8l-13.3 -5.7M1166.8 573.3l3.1 -5.2M1208.4 573.2l-12.2 -5.2M1122.2 539.8l3.7 -5.3M1130.3 539.8l-12.3 -5.2M1114.8 550.4l3.4 -4.8M1154.8 550.3l-11.2 -4.8M1074.8 519.5l4 -4.9M1082.5 519.4l-11.4 -4.9M1066.7 529.2l3.7 -4.5M1105.2 529.1l-10.4 -4.4M1240.4 561.7l2.7 -5.7M1248.8 561.7l-13.9 -5.7M1235 573.1l2.5 -5.2M1276.6 573l-12.8 -5.2M1186.6 539.7l3.1 -5.3M1194.6 539.7l-12.9 -5.2M1180.4 550.2l2.8 -4.8M1220.4 550.1l-11.8 -4.8M1307.3 561.5l2 -5.7M1315.6 561.5l-14.6 -5.7M1303.2 572.9l1.9 -5.2M1344.8 572.8l-13.4 -5.2M1250.9 539.5l2.5 -5.3M1258.9 539.5l-13.5 -5.2M1245.9 550.1l2.3 -4.8M1285.9 549.9l-12.4 -4.8M1374.1 561.3l1.4 -5.7M1382.5 561.3l-15.3 -5.7M1371.4 572.7l1.2 -5.2M1412.9 572.6l-14 -5.2M1315.2 539.4l1.9 -5.3M1323.2 539.3l-14.1 -5.2M1311.4 549.9l1.7 -4.8M1351.3 549.8l-12.9 -4.8M1379.4 539.2l1.3 -5.3M1387.4 539.2l-14.7 -5.2M1376.9 549.7l1.1 -4.8M1416.8 549.6l-13.5 -4.8"/>
<path fill="none" stroke="#eceefa" stroke-opacity="0.85" stroke-width="2.0" d="M-27.3 615.4l16.8 -6.8M-18.1 615.4l-1.5 -6.8M-61 629.1l15.4 -6.3M-15.1 629l-1.4 -6.2M-32.8 589.2l16.1 -6.3M-24 589.2l-1.4 -6.2M-65.1 601.7l14.8 -5.8M-21.2 601.6l-1.3 -5.7M46.3 615.2l16 -6.8M55.5 615.2l-2.3 -6.8M14.2 628.9l14.7 -6.3M60.1 628.7l-2.1 -6.2M37.7 589l15.4 -6.3M46.5 589l-2.1 -6.2M6.9 601.5l14.1 -5.8M50.7 601.4l-1.9 -5.7M119.8 615l15.2 -6.8M129 615l-3.1 -6.8M89.4 628.7l14 -6.3M135.2 628.5l-2.9 -6.2M108.1 588.8l14.7 -6.3M116.9 588.8l-2.9 -6.2M78.8 601.3l13.5 -5.7M122.6 601.2l-2.6 -5.7M193.3 614.8l14.4 -6.8M202.4 614.8l-3.9 -6.8M164.5 628.4l13.2 -6.3M210.3 628.3l-3.6 -6.2M178.5 588.6l13.9 -6.3M187.3 588.6l-3.6 -6.2M150.7 601.1l12.8 -5.7M194.5 601l-3.3 -5.7M266.7 614.6l13.6 -6.8M275.9 614.6l-4.7 -6.8M239.5 628.2l12.5 -6.3M285.3 628.1l-4.3 -6.2M248.9 588.4l13.2 -6.3M257.7 588.4l-4.3 -6.2M222.5 600.9l12.1 -5.7M266.3 600.8l-4 -5.7M340.1 614.4l12.8 -6.8M349.2 614.3l-5.5 -6.7M314.5 628l11.7 -6.3M360.2 627.9l-5 -6.2M319.2 588.2l12.4 -6.2M328 588.2l-5 -6.2M294.3 600.7l11.4 -5.7M338.1 600.6l-4.6 -5.7M413.4 614.2l11.9 -6.8M422.5 614.1l-6.3 -6.7M389.4 627.8l11 -6.3M435.1 627.6l-5.8 -6.2M389.5 588l11.7 -6.2M398.2 588l-5.8 -6.2M366 600.5l10.7 -5.7M409.8 600.4l-5.3 -5.7M486.7 613.9l11.1 -6.8M495.8 613.9l-7.1 -6.7M464.3 627.6l10.3 -6.2M510 627.4l-6.5 -6.2M459.7 587.8l11 -6.2M468.4 587.8l-6.5 -6.2M437.7 600.3l10.1 -5.7M481.4 600.2l-6 -5.7M559.9 613.7l10.3 -6.8M569 613.7l-7.9 -6.7M539.2 627.3l9.5 -6.2M584.8 627.2l-7.2 -6.2M529.8 587.6l10.2 -6.2M538.6 587.6l-7.2 -6.2M509.4 600.1l9.4 -5.7M553 600l-6.6 -5.7M633.1 613.5l9.5 -6.8M642.2 613.5l-8.6 -6.7M613.9 627.1l8.8 -6.2M659.5 627l-7.9 -6.2M600 587.4l9.5 -6.2M608.7 587.4l-7.9 -6.2M581 599.9l8.7 -5.7M624.6 599.8l-7.3 -5.7M706.2 613.3l8.7 -6.8M715.3 613.3l-9.4 -6.7M688.7 626.9l8 -6.2M734.2 626.8l-8.7 -6.2M670 587.3l8.8 -6.2M678.8 587.2l-8.7 -6.2M652.5 599.7l8 -5.7M696.1 599.6l-7.9 -5.7M779.3 613.1l7.9 -6.8M788.4 613.1l-10.2 -6.7M763.3 626.7l7.3 -6.2M808.9 626.6l-9.4 -6.2M740.1 587.1l8 -6.2M748.8 587l-9.4 -6.2M724 599.5l7.4 -5.7M767.6 599.4l-8.6 -5.7M852.3 612.9l7.2 -6.8M861.4 612.9l-11 -6.7M838 626.5l6.6 -6.2M883.5 626.3l-10.1 -6.2M810.1 586.9l7.3 -6.2M818.8 586.8l-10.1 -6.2M795.5 599.3l6.7 -5.7M839 599.2l-9.3 -5.7M925.3 612.7l6.4 -6.8M934.4 612.7l-11.8 -6.7M912.6 626.2l5.8 -6.2M958 626.1l-10.8 -6.2M880 586.7l6.6 -6.2M888.8 586.7l-10.8 -6.2M866.9 599.1l6 -5.7M910.4 599l-9.9 -5.7M998.2 612.5l5.6 -6.8M1007.3 612.5l-12.6 -6.7M987.1 626l5.1 -6.2M1032.5 625.9l-11.6 -6.2M949.9 586.5l5.8 -6.2M958.7 586.5l-11.5 -6.2M938.2 598.9l5.4 -5.7M981.7 598.8l-10.6 -5.7M1071.1 612.3l4.8 -6.8M1080.2 612.2l-13.3 -6.7M1061.6 625.8l4.4 -6.2M1107 625.7l-12.3 -6.2M1019.8 586.3l5.1 -6.2M1028.5 586.3l-12.3 -6.2M1009.6 598.7l4.7 -5.7M1053 598.6l-11.3 -5.7M1143.9 612.1l4 -6.8M1153 612l-14.1 -6.7M1136 625.6l3.7 -6.2M1181.3 625.5l-13 -6.2M1089.6 586.1l4.4 -6.2M1098.3 586.1l-13 -6.2M1080.8 598.5l4 -5.7M1124.3 598.4l-11.9 -5.6M1216.7 611.9l3.2 -6.7M1225.8 611.8l-14.9 -6.7M1210.3 625.4l2.9 -6.2M1255.7 625.2l-13.7 -6.2M1159.4 585.9l3.7 -6.2M1168.1 585.9l-13.7 -6.2M1152 598.3l3.4 -5.7M1195.5 598.2l-12.6 -5.6M1289.5 611.6l2.4 -6.7M1298.6 611.6l-15.7 -6.7M1284.7 625.2l2.2 -6.2M1330 625l-14.4 -6.2M1229.1 585.7l2.9 -6.2M1237.8 585.7l-14.4 -6.1M1223.2 598.1l2.7 -5.7M1266.6 598l-13.2 -5.6M1362.2 611.4l1.6 -6.7M1371.2 611.4l-16.5 -6.7M1358.9 624.9l1.5 -6.2M1404.2 624.8l-15.1 -6.1M1298.7 585.5l2.2 -6.2M1307.5 585.5l-15.1 -6.1M1294.3 597.9l2 -5.7M1337.7 597.8l-13.9 -5.6M1368.4 585.3l1.5 -6.2M1377.1 585.3l-15.8 -6.1M1365.4 597.7l1.4 -5.7M1408.8 597.6l-14.5 -5.6"/>
<path fill="none" stroke="#eceefa" stroke-opacity="0.85" stroke-width="2.25" d="M-14.8 675.5l18.2 -8.2M-4.7 675.4l-1.8 -8.1M-51.4 691.9l16.8 -7.6M-1 691.8l-1.7 -7.5M-21.3 644.1l17.5 -7.5M-11.7 644l-1.7 -7.4M-56.4 659l16.1 -6.9M-8.4 658.9l-1.5 -6.8M65.9 675.2l17.3 -8.2M75.9 675.2l-2.8 -8.1M31.2 691.7l15.9 -7.6M81.5 691.5l-2.6 -7.5M55.6 643.8l16.6 -7.5M65.2 643.8l-2.5 -7.4M22.3 658.8l15.3 -6.9M70.3 658.7l-2.3 -6.8M146.4 675l16.3 -8.2M156.5 674.9l-3.7 -8.1M113.7 691.4l15 -7.6M164 691.2l-3.4 -7.5M132.5 643.6l15.7 -7.4M142.1 643.6l-3.4 -7.4M101 658.6l14.5 -6.9M148.9 658.4l-3.1 -6.8M227 674.7l15.3 -8.2M237 674.7l-4.7 -8.1M196.2 691.1l14.2 -7.5M246.4 691l-4.3 -7.5M209.3 643.4l14.8 -7.4M218.9 643.3l-4.3 -7.4M179.6 658.3l13.7 -6.9M227.5 658.2l-3.9 -6.8M307.4 674.4l14.4 -8.2M317.5 674.4l-5.6 -8.1M278.6 690.9l13.3 -7.5M328.8 690.7l-5.2 -7.5M286.1 643.1l13.9 -7.4M295.7 643.1l-5.1 -7.4M258.1 658.1l12.9 -6.9M306 657.9l-4.7 -6.8M387.8 674.2l13.4 -8.2M397.8 674.2l-6.6 -8.1M360.9 690.6l12.4 -7.5M411.1 690.4l-6.1 -7.5M362.8 642.9l13.1 -7.4M372.4 642.9l-6 -7.4M336.6 657.8l12 -6.9M384.5 657.7l-5.5 -6.8M468.1 673.9l12.4 -8.2M478.2 673.9l-7.5 -8.1M443.2 690.3l11.5 -7.5M493.3 690.2l-7 -7.5M439.5 642.7l12.2 -7.4M449.1 642.7l-6.9 -7.4M415 657.6l11.2 -6.8M462.9 657.4l-6.3 -6.8M548.4 673.7l11.5 -8.1M558.4 673.7l-8.5 -8.1M525.4 690.1l10.6 -7.5M575.5 689.9l-7.8 -7.5M516.1 642.5l11.3 -7.4M525.7 642.4l-7.7 -7.4M493.4 657.4l10.4 -6.8M541.2 657.2l-7.1 -6.8M628.6 673.4l10.5 -8.1M638.7 673.4l-9.4 -8.1M607.5 689.8l9.7 -7.5M657.6 689.6l-8.7 -7.5M592.7 642.2l10.4 -7.4M602.3 642.2l-8.6 -7.4M571.7 657.1l9.6 -6.8M619.5 657l-7.9 -6.8M708.8 673.2l9.5 -8.1M718.8 673.2l-10.4 -8.1M689.6 689.5l8.8 -7.5M739.6 689.4l-9.6 -7.5M669.2 642l9.6 -7.4M678.8 642l-9.4 -7.4M650 656.9l8.8 -6.8M697.7 656.7l-8.7 -6.8M788.9 672.9l8.6 -8.1M798.9 672.9l-11.3 -8.1M771.6 689.3l7.9 -7.5M821.6 689.1l-10.4 -7.4M745.7 641.8l8.7 -7.4M755.2 641.7l-10.3 -7.4M728.2 656.6l8 -6.8M775.9 656.5l-9.5 -6.8M868.9 672.7l7.6 -8.1M878.9 672.6l-12.2 -8.1M853.6 689l7.1 -7.5M903.5 688.8l-11.3 -7.4M822.1 641.5l7.8 -7.4M831.6 641.5l-11.2 -7.3M806.4 656.4l7.2 -6.8M854 656.2l-10.3 -6.8M948.9 672.4l6.7 -8.1M958.9 672.4l-13.2 -8.1M935.5 688.7l6.2 -7.5M985.4 688.6l-12.2 -7.4M898.4 641.3l7 -7.4M907.9 641.3l-12 -7.3M884.5 656.2l6.4 -6.8M932.1 656l-11.1 -6.8M1028.8 672.2l5.7 -8.1M1038.8 672.1l-14.1 -8M1017.3 688.5l5.3 -7.5M1067.2 688.3l-13 -7.4M974.7 641.1l6.1 -7.4M984.2 641l-12.9 -7.3M962.5 655.9l5.6 -6.8M1010.1 655.8l-11.9 -6.8M1108.7 671.9l4.8 -8.1M1118.7 671.9l-15.1 -8M1099.1 688.2l4.4 -7.5M1148.9 688.1l-13.9 -7.4M1050.9 640.8l5.2 -7.4M1060.5 640.8l-13.7 -7.3M1040.5 655.7l4.8 -6.8M1088 655.5l-12.6 -6.8M1188.5 671.7l3.8 -8.1M1198.5 671.6l-16 -8M1180.8 688l3.5 -7.5M1230.6 687.8l-14.8 -7.4M1127.1 640.6l4.3 -7.4M1136.6 640.6l-14.6 -7.3M1118.4 655.4l4 -6.8M1165.9 655.3l-13.4 -6.7M1268.2 671.4l2.9 -8.1M1278.2 671.4l-16.9 -8M1262.5 687.7l2.7 -7.5M1312.2 687.5l-15.6 -7.4M1203.3 640.4l3.5 -7.4M1212.8 640.4l-15.4 -7.3M1196.3 655.2l3.2 -6.8M1243.7 655l-14.2 -6.7M1347.9 671.2l1.9 -8.1M1357.9 671.1l-17.9 -8M1344 687.4l1.8 -7.5M1393.8 687.3l-16.5 -7.4M1279.3 640.2l2.6 -7.4M1288.8 640.1l-16.3 -7.3M1274.1 655l2.4 -6.8M1321.5 654.8l-15 -6.7M1355.4 639.9l1.8 -7.4M1364.9 639.9l-17.1 -7.3M1351.8 654.7l1.6 -6.8M1399.2 654.6l-15.8 -6.7"/>
<path fill="none" stroke="#eceefa" stroke-opacity="0.85" stroke-width="2.5" d="M-7.5 710l19 -9M3.1 710l-2 -9M-45.9 728.2l17.6 -8.4M7.1 728l-1.9 -8.3M77.2 709.7l18 -9M87.7 709.7l-3.1 -9M41 727.9l16.6 -8.4M93.9 727.7l-2.8 -8.3M161.8 709.5l16.9 -9M172.4 709.4l-4.1 -8.9M127.7 727.6l15.7 -8.4M180.6 727.4l-3.8 -8.3M246.4 709.2l15.8 -9M256.9 709.1l-5.2 -8.9M214.4 727.3l14.7 -8.3M267.3 727.1l-4.8 -8.3M330.8 708.9l14.8 -9M341.4 708.9l-6.2 -8.9M301.1 727l13.7 -8.3M353.9 726.9l-5.7 -8.3M415.3 708.6l13.7 -9M425.8 708.6l-7.3 -8.9M387.7 726.7l12.7 -8.3M440.4 726.6l-6.7 -8.3M499.6 708.3l12.6 -9M510.2 708.3l-8.3 -8.9M474.2 726.4l11.7 -8.3M526.9 726.3l-7.7 -8.3M583.9 708.1l11.6 -9M594.5 708l-9.3 -8.9M560.6 726.2l10.7 -8.3M613.3 726l-8.6 -8.3M668.2 707.8l10.5 -9M678.7 707.7l-10.4 -8.9M647 725.9l9.8 -8.3M699.6 725.7l-9.6 -8.2M752.4 707.5l9.5 -9M762.9 707.5l-11.4 -8.9M733.3 725.6l8.8 -8.3M785.9 725.4l-10.6 -8.2M836.5 707.2l8.4 -9M847 707.2l-12.5 -8.9M819.5 725.3l7.8 -8.3M872.1 725.1l-11.5 -8.2M920.5 707l7.4 -9M931 706.9l-13.5 -8.9M905.7 725l6.8 -8.3M958.2 724.8l-12.5 -8.2M1004.5 706.7l6.3 -8.9M1015 706.6l-14.5 -8.9M991.7 724.7l5.8 -8.3M1044.2 724.5l-13.5 -8.2M1088.4 706.4l5.3 -8.9M1098.9 706.4l-15.6 -8.9M1077.8 724.4l4.9 -8.3M1130.2 724.2l-14.4 -8.2M1172.2 706.1l4.2 -8.9M1182.7 706.1l-16.6 -8.9M1163.7 724.1l3.9 -8.3M1216.1 723.9l-15.4 -8.2M1256 705.8l3.2 -8.9M1266.5 705.8l-17.6 -8.9M1249.6 723.8l2.9 -8.3M1302 723.6l-16.3 -8.2M1339.7 705.6l2.1 -8.9M1350.2 705.5l-18.7 -8.9M1335.4 723.5l2 -8.3M1387.8 723.4l-17.3 -8.2"/>
<path fill="none" stroke="#eceefa" stroke-opacity="0.85" stroke-width="2.75" d="M.5 748.2l19.9 -10M11.6 748.2l-2.2 -9.9M-39.8 768.4l18.5 -9.3M16.1 768.2l-2.1 -9.2M89.6 747.9l18.7 -10M100.8 747.9l-3.4 -9.9M51.8 768.1l17.4 -9.3M107.6 767.9l-3.1 -9.2M178.8 747.6l17.6 -10M189.9 747.6l-4.6 -9.9M143.3 767.8l16.3 -9.3M199.1 767.6l-4.2 -9.2M267.8 747.3l16.4 -10M278.9 747.3l-5.7 -9.9M234.7 767.5l15.2 -9.3M290.5 767.3l-5.3 -9.2M356.8 747l15.2 -10M367.9 747l-6.9 -9.9M326.1 767.1l14.1 -9.3M381.8 766.9l-6.4 -9.2M445.7 746.7l14 -10M456.8 746.7l-8 -9.9M417.4 766.8l13 -9.3M473 766.6l-7.5 -9.2M534.5 746.4l12.9 -10M545.6 746.4l-9.2 -9.9M508.6 766.5l11.9 -9.2M564.1 766.3l-8.5 -9.2M623.2 746.1l11.7 -10M634.3 746l-10.4 -9.9M599.7 766.2l10.8 -9.2M655.2 766l-9.6 -9.2M711.9 745.8l10.5 -9.9M723 745.7l-11.5 -9.9M690.7 765.8l9.8 -9.2M746.2 765.6l-10.7 -9.2M800.5 745.5l9.3 -9.9M811.6 745.4l-12.7 -9.9M781.7 765.5l8.7 -9.2M837.1 765.3l-11.7 -9.2M889.1 745.2l8.2 -9.9M900.1 745.1l-13.8 -9.9M872.6 765.2l7.6 -9.2M928 765l-12.8 -9.1M977.5 744.8l7 -9.9M988.6 744.8l-15 -9.8M963.4 764.9l6.5 -9.2M1018.7 764.7l-13.9 -9.1M1065.9 744.5l5.8 -9.9M1077 744.5l-16.1 -9.8M1054.1 764.5l5.4 -9.2M1109.4 764.3l-14.9 -9.1M1154.2 744.2l4.7 -9.9M1165.3 744.2l-17.2 -9.8M1144.8 764.2l4.3 -9.2M1200.1 764l-16 -9.1M1242.5 743.9l3.5 -9.9M1253.5 743.9l-18.4 -9.8M1235.4 763.9l3.3 -9.2M1290.6 763.7l-17.1 -9.1M1330.6 743.6l2.4 -9.9M1341.7 743.6l-19.5 -9.8M1325.9 763.6l2.2 -9.2M1381.1 763.4l-18.1 -9.1"/>
<path fill="none" stroke="#eceefa" stroke-opacity="0.85" stroke-width="3.0" d="M9.4 790.8l20.9 -11.2M21.1 790.7l-2.5 -11.1M-33 813.3l19.5 -10.4M26.1 813.1l-2.3 -10.3M103.5 790.4l19.6 -11.1M115.3 790.4l-3.8 -11.1M63.9 813l18.3 -10.4M122.9 812.7l-3.5 -10.3M197.6 790.1l18.3 -11.1M209.4 790l-5.1 -11.1M160.7 812.6l17 -10.4M219.7 812.4l-4.7 -10.3M291.7 789.7l17 -11.1M303.4 789.7l-6.4 -11M257.4 812.2l15.8 -10.4M316.3 812l-5.9 -10.3M385.6 789.4l15.6 -11.1M397.3 789.3l-7.7 -11M354 811.9l14.6 -10.4M412.8 811.6l-7.1 -10.3M479.5 789l14.3 -11.1M491.2 789l-9 -11M450.5 811.5l13.3 -10.3M509.3 811.3l-8.3 -10.3M573.2 788.7l13 -11.1M585 788.7l-10.2 -11M546.9 811.1l12.1 -10.3M605.7 810.9l-9.5 -10.3M666.9 788.3l11.7 -11.1M678.6 788.3l-11.5 -11M643.2 810.8l10.9 -10.3M702 810.6l-10.7 -10.2M760.5 788l10.4 -11.1M772.2 788l-12.8 -11M739.5 810.4l9.7 -10.3M798.2 810.2l-11.9 -10.2M854.1 787.7l9.1 -11.1M865.8 787.6l-14.1 -11M835.7 810l8.5 -10.3M894.3 809.8l-13.1 -10.2M947.5 787.3l7.8 -11.1M959.2 787.3l-15.4 -11M931.7 809.7l7.3 -10.3M990.3 809.5l-14.3 -10.2M1040.9 787l6.5 -11.1M1052.6 786.9l-16.7 -11M1027.7 809.3l6.1 -10.3M1086.3 809.1l-15.5 -10.2M1134.2 786.6l5.2 -11M1145.9 786.6l-17.9 -11M1123.7 809l4.9 -10.3M1182.1 808.7l-16.7 -10.2M1227.4 786.3l3.9 -11M1239.1 786.2l-19.2 -10.9M1219.5 808.6l3.6 -10.3M1277.9 808.4l-17.9 -10.2M1320.6 785.9l2.6 -11M1332.2 785.9l-20.5 -10.9M1315.2 808.2l2.4 -10.3M1373.6 808l-19.1 -10.2"/>
</g></g><defs><radialGradient id="vg" gradientUnits="userSpaceOnUse" cx="690" cy="420" r="900"><stop offset="0.6" stop-color="#2a2a80" stop-opacity="0"/><stop offset="1" stop-color="#2a2a80" stop-opacity=".16"/></radialGradient><filter id="b2"><feGaussianBlur stdDeviation=".7"/></filter></defs><use href="#fp" fill="url(#vg)"/><defs><linearGradient id="fd" gradientUnits="userSpaceOnUse" x1="0" y1="178" x2="0" y2="520"><stop offset="0" stop-color="#8a94d7" stop-opacity=".62"/><stop offset=".45" stop-color="#8790d5" stop-opacity=".32"/><stop offset="1" stop-color="#808bd2" stop-opacity="0"/></linearGradient></defs><use href="#fp" fill="url(#fd)"/><path d="M763 187.700L768 178H796.300L809.700 204.800Z" fill="#f3dbe3" fill-opacity=".55"/><path d="M796.300 178H811L812 200L809.700 204.800Z" fill="#e9c9e2" fill-opacity=".45"/><path d="M768 178h28.300l-4 5.500h-20z" fill="#f5f0ee"/><g filter="url(#b2)" fill="none" stroke="#ffe6df"><path d="M763 187.700L809.700 204.800" stroke-width="2.200"/><path d="M796.300 178L809.700 204.800M763 187.700L768 178M810 180L811.500 200" stroke-width="1.200" stroke-opacity=".8"/></g><rect x="660.500" y="426.500" width="43.500" height="93" rx="21.700" fill="#8fd4f5" fill-opacity=".05" stroke="#8fdcff" stroke-opacity=".85" stroke-width="1.600"/><path d="M671.300 457.500a8.400 8.400 0 1 1 16 3.200l-3.500 12.500-6-4.500c-3.500-3-6.500-6.500-6.500-11.200z" fill="#e4e4e4"/><circle cx="687.200" cy="461.300" r="4" fill="#ececec" stroke="#d2d2d6" stroke-width=".600"/><path d="M679.800 474c0-6.500 14-6.500 14 0z" fill="#ececec" stroke="#d2d2d6" stroke-width=".600"/><circle cx="680" cy="457.300" r="1.900" fill="#9aa0d8"/><rect x="112" y="288" width="163.500" height="163.500" fill="#fff"/><rect x="113.500" y="289.500" width="160.500" height="160.500" fill="none" stroke="#b4b4b4" stroke-width="2.400"/><rect x="113.500" y="289.500" width="160.500" height="160.500" fill="none" stroke="#fff" stroke-width="1.300" stroke-dasharray="7.600 2.400" stroke-dashoffset="-3"/><rect x="191.900" y="262.200" width="4" height="9" fill="#fff"/><rect x="191.900" y="468.300" width="4" height="9" fill="#fff"/><rect x="87" y="367.200" width="8.800" height="4.700" fill="#fff"/><rect x="293" y="367.200" width="8.800" height="4.700" fill="#fff"/><path d="M42.500 730V706" stroke="#1010ee" stroke-width="1.300"/><path d="M42.500 730l21-11.500" stroke="#e01020" stroke-width="1.300"/><path d="M42.500 730l21 12" stroke="#10d020" stroke-width="1.300"/><text x="38.500" y="704" font-family="Liberation Sans,sans-serif" font-size="10.500" fill="#2222e0">Z</text><text x="65" y="721" font-family="Liberation Sans,sans-serif" font-size="10.500" font-weight="700" fill="#d02030">X</text><text x="65" y="750" font-family="Liberation Sans,sans-serif" font-size="10.500" font-weight="700" fill="#20c040">Y</text></svg>
<svg style="left:6px;top:3px;" width="27" height="29" viewBox="0 0 27 29"><path d="M13.200 .700L25.300 8.500V21.700L13.200 28.300L.900 21.700V8.500Z" fill="#fff"/><path d="M2.600 9.300C8 5.500 18.500 5.500 24 9.300C23 16 19.500 21 14.200 23.200V28.300H12.400V23.200C7 21 3.500 16 2.600 9.300Z" fill="#000"/><circle cx="13.400" cy="14.200" r="6.700" fill="#fdb016"/></svg>
<span class="t" id="t0" style="left:35px;top:6.16px;font-size:23.2px;color:#fff;font-weight:700;font-family:'DejaVu Sans','Liberation Sans',sans-serif;transform:scaleX(.915);transform-origin:0 0;">CORE</span>
<span class="t" id="t1" style="left:124.8px;top:10.83px;font-size:16.5px;color:#1ba1e6;font-weight:700;letter-spacing:-0.644px;">File</span>
<span class="t" id="t2" style="left:177.6px;top:10.83px;font-size:16.5px;color:#1ba1e6;font-weight:700;letter-spacing:-0.789px;">Edit</span>
<span class="t" id="t3" style="left:232.4px;top:10.83px;font-size:16.5px;color:#1ba1e6;font-weight:700;letter-spacing:-0.250px;">Object</span>
<span class="t" id="t4" style="left:308.4px;top:10.83px;font-size:16.5px;color:#1ba1e6;font-weight:700;letter-spacing:-0.198px;">Window</span>
<span class="t" id="t5" style="left:396.5px;top:10.83px;font-size:16.5px;color:#1ba1e6;font-weight:700;letter-spacing:-0.185px;">Help</span>
<div style="left:1847.5px;top:16.8px;width:14px;height:3px;background:#1ba1e6;"></div>
<svg style="left:1871px;top:10px;" width="16" height="16" viewBox="0 0 16 16"><path d="M5 2.5h9v9h-3" fill="none" stroke="#1ba1e6" stroke-width="2.2"/><rect x="2.1" y="6.1" width="8" height="8" fill="none" stroke="#1ba1e6" stroke-width="2.2"/></svg>
<svg style="left:1896px;top:11px;" width="16" height="16" viewBox="0 0 16 16"><path d="M2.5 2.5l11 11M13.5 2.5l-11 11" stroke="#1ba1e6" stroke-width="3" stroke-linecap="butt"/></svg>
<div style="left:0;top:38px;width:0;height:0;border-top:12px solid #1ba1e6;border-right:12px solid transparent"></div>
<div style="left:8px;top:40px;width:37px;height:38px;background:#1ba1e6;border-radius:4px;"></div>
<div style="left:48px;top:40px;width:37px;height:38px;background:#1c6690;border-radius:4px;"></div>
<svg style="left:8px;top:40px;" width="37" height="38" viewBox="0 0 37 38"><path transform="matrix(.918 0 0 .894 .097 2.607)" d="M8.5 17.5 L18 9.5 V14.5 C26.5 15 30.5 20 30.5 27.5 C27.5 23 24 21.5 18 21.5 V26 Z" fill="#fff"/></svg>
<svg style="left:48px;top:40px;" width="37" height="38" viewBox="0 0 37 38"><path transform="matrix(.9 0 0 .867 2.250 3.160)" d="M28.5 17.5 L19 9.5 V14.5 C10.5 15 6.5 20 6.5 27.5 C9.5 23 13 21.5 19 21.5 V26 Z" fill="#2b2d36"/></svg>
<div style="left:98px;top:40px;width:55px;height:38px;background:#1ba1e6;border-radius:4px;"></div>
<svg style="left:105px;top:48px;" width="22" height="22" viewBox="0 0 22 22"><path d="M2 7V2h5M9.5 2h3M15 2h5v5M20 9.5v3M20 15v5h-5M12.5 20h-3M7 20H2v-5M2 12.5v-3" fill="none" stroke="#fff" stroke-width="2.2"/><rect x="7" y="7" width="8" height="8" fill="none" stroke="#fff" stroke-width="2.2"/></svg>
<svg style="left:135px;top:56px;" width="10" height="5.8" viewBox="0 0 10 5.800"><path d="M0 0h10l-5 5.800z" fill="#fff"/></svg>
<div style="left:165px;top:40px;width:38px;height:38px;background:#1c1f29;border-radius:4px;"></div>
<svg style="left:173px;top:48px;" width="22" height="22" viewBox="0 0 22 22"><path d="M11 .500l4.600 5.600H6.400zM11 21.500l4.600-5.600H6.400zM.500 11l5.600-4.600v9.200zM21.500 11l-5.600-4.600v9.200z" fill="#e8821a"/><path d="M11 5v12M5 11h12" stroke="#e8821a" stroke-width="4.200"/><circle cx="11" cy="11" r="1.900" fill="#1c1f29"/></svg>
<svg style="left:213px;top:48px;" width="22" height="22" viewBox="0 0 22 22"><path d="M9 2.600A8.400 8.400 0 0 0 8.600 19.200" fill="none" stroke="#1ba1e6" stroke-width="3.400"/><path d="M.800 1.300l8.200 .600-2.200 6.400z" fill="#1ba1e6"/><path d="M13 19.400A8.400 8.400 0 0 0 13.400 2.800" fill="none" stroke="#1ba1e6" stroke-width="3.400"/><path d="M21.200 20.700l-8.200-.600 2.200-6.400z" fill="#1ba1e6"/></svg>
<svg style="left:253px;top:48px;" width="22" height="22" viewBox="0 0 22 22"><rect x="4.200" y="1" width="17" height="17" fill="#1ba1e6"/><rect x=".200" y="10.200" width="11" height="11" fill="#1ba1e6" stroke="#282a35" stroke-width="1.400"/><path d="M10.500 12l6-6" stroke="#282a35" stroke-width="2"/><path d="M12.500 3.500h6.500v6.500z" fill="#282a35"/></svg>
<svg style="left:304px;top:49px;" width="20" height="20" viewBox="0 0 20 20"><rect width="20" height="20" fill="#1ba1e6"/><rect x="2.95" y="2.95" width="2.900" height="2.900" fill="#282a35"/><rect x="2.95" y="8.55" width="2.900" height="2.900" fill="#282a35"/><rect x="2.95" y="14.15" width="2.900" height="2.900" fill="#282a35"/><rect x="8.55" y="2.95" width="2.900" height="2.900" fill="#282a35"/><rect x="8.55" y="8.55" width="2.900" height="2.900" fill="#282a35"/><rect x="8.55" y="14.15" width="2.900" height="2.900" fill="#282a35"/><rect x="14.15" y="2.95" width="2.900" height="2.900" fill="#282a35"/><rect x="14.15" y="8.55" width="2.900" height="2.900" fill="#282a35"/><rect x="14.15" y="14.15" width="2.900" height="2.900" fill="#282a35"/></svg>
<div style="left:338px;top:40px;width:62px;height:38px;background:#1ba1e6;border-radius:4px;"></div>
<span class="t" id="t6" style="left:346px;top:50.83px;font-size:16.5px;color:#fff;font-weight:700;letter-spacing:1.141px;">25</span>
<svg style="left:380.5px;top:56px;" width="10" height="5.8" viewBox="0 0 10 5.800"><path d="M0 0h10l-5 5.800z" fill="#fff"/></svg>
<div style="left:413px;top:40px;width:55px;height:38px;background:#1ba1e6;border-radius:4px;"></div>
<svg style="left:450px;top:56px;" width="10" height="5.8" viewBox="0 0 10 5.800"><path d="M0 0h10l-5 5.800z" fill="#fff"/></svg>
<svg style="left:421px;top:49px;" width="20" height="20" viewBox="0 0 20 20"><circle cx="10" cy="10" r="9.400" fill="#fff"/><path d="M6.800 4.600c1.500-.900 3.300-.400 4.600-.600l1.300 1.600 1.500.400.300 1.600 1.200.300c-.300 1.500-1.700 2.600-2.400 4-.300 1.500-.500 3-1.500 4.600l-1.700.500c-.700-1.500-.500-3.200-1.200-4.800C7.500 11.500 5.800 11 5.200 9.400c-.100-1.400.300-2.700 1.600-4.800z" fill="#1ba1e6"/><path d="M12.800 3.200c1 .300 1.800.900 2.500 1.700M14.300 5.800c.500.200.900.500 1.200 1" fill="none" stroke="#1ba1e6" stroke-width="1.100"/></svg>
<div style="left:480px;top:40px;width:56px;height:38px;background:#1ba1e6;border-radius:4px;"></div>
<svg style="left:518px;top:56px;" width="10" height="5.8" viewBox="0 0 10 5.800"><path d="M0 0h10l-5 5.800z" fill="#fff"/></svg>
<svg style="left:487px;top:48px;" width="23" height="22" viewBox="0 0 23 22"><path d="M3.800 5.500V4.200a2.200 2.200 0 0 1 2.200-2.200H18.400V15.500" fill="none" stroke="#fff" stroke-width="1.900"/><path d="M5.800 2a2.200 2.200 0 0 0-2 2.200" fill="none" stroke="#fff" stroke-width="1.900"/><path d="M1.500 5.200h2.600" stroke="#fff" stroke-width="1.600"/><path d="M3.800 4.500V17.500a2.200 2.200 0 0 0 2.200 2.200h3" fill="none" stroke="#fff" stroke-width="1.900"/><path d="M8 15.500h14v2.300a2.200 2.200 0 0 1-2.200 2.200H8z" fill="#fff"/><path d="M10.200 6.700l-2.300 2.300 2.300 2.300M13.800 6.700l2.300 2.300-2.300 2.300" fill="none" stroke="#fff" stroke-width="1.400"/></svg>
<div style="left:549px;top:40px;width:56px;height:38px;background:#1ba1e6;border-radius:4px;"></div>
<svg style="left:587px;top:56px;" width="10" height="5.8" viewBox="0 0 10 5.800"><path d="M0 0h10l-5 5.800z" fill="#fff"/></svg>
<svg style="left:556px;top:48px;" width="24" height="22" viewBox="0 0 24 22"><path d="M4.800 14.500L5.600 6.800a3.700 3.700 0 0 1 7.300-.400L13.500 9L17.200 1.800L22.300 14.500Z" fill="#fff"/><circle cx="9.200" cy="6.300" r="2.300" fill="#1ba1e6"/><ellipse cx="12" cy="16.400" rx="10" ry="3.200" fill="#fff"/><path d="M12 14.300L22.500 16.600" stroke="#1ba1e6" stroke-width="1.200"/></svg>
<div style="left:800px;top:40px;width:37px;height:38px;background:#1ba1e6;border-radius:4px;"></div>
<div style="left:842px;top:40px;width:38px;height:38px;background:#1ba1e6;border-radius:4px;"></div>
<svg style="left:800px;top:40px;" width="37" height="38" viewBox="0 0 37 38"><path d="M11.300 9L28.200 18.700L11.300 28.400Z" fill="#fff"/></svg>
<svg style="left:842px;top:40px;" width="38" height="38" viewBox="0 0 38 38"><rect x="10.600" y="9" width="6" height="19.700" fill="#fff"/><rect x="21.200" y="9" width="6" height="19.700" fill="#fff"/></svg>
<svg style="left:901px;top:48.5px;" width="20" height="21" viewBox="0 0 20 21"><circle cx="3.400" cy="4.200" r="1.700" fill="#1ba1e6"/><circle cx="9" cy="2.500" r="2.100" fill="#1ba1e6"/><circle cx="14.700" cy="4.200" r="1.700" fill="#1ba1e6"/><path d="M.800 8.300c0-2.200 5-2.200 5 0l-.300 5h-.900l-.300 5.400h-2.300l-.300-5.400H1.100z" fill="#1ba1e6"/><path d="M5.600 7.200c0-3 6.800-3 6.800 0v2.500l-2.600 1.200v9.600H7.600l-.500-7.200H6z" fill="#1ba1e6"/><path d="M12.300 8c0-2 5-2 5 0l-.300 5.400l-4.700-2.600z" fill="#1ba1e6"/><path d="M11 11.400l8.400 4.600-8.400 4.600z" fill="#1ba1e6" stroke="#282a35" stroke-width=".900"/></svg>
<svg style="left:1502px;top:49px;" width="23" height="22" viewBox="0 0 23 22"><path d="M12 16.800H2.300V3H20.300V10.500" fill="none" stroke="#1ba1e6" stroke-width="2.500"/><path d="M1.100 1.200h20.500v3.800H1.100z" fill="#1ba1e6"/><path d="M11.800 9.500l9.800 5.400-6 1.400 -2 4.800z" fill="#1ba1e6"/></svg>
<div style="left:1537px;top:40px;width:57px;height:38px;background:#1ba1e6;border-radius:4px;"></div>
<svg style="left:1575.5px;top:56px;" width="10" height="5.8" viewBox="0 0 10 5.800"><path d="M0 0h10l-5 5.800z" fill="#fff"/></svg>
<svg style="left:1547px;top:48px;" width="21" height="22" viewBox="0 0 21 22"><path d="M13.500 6.200A7 7 0 1 0 6.500 18.600" fill="none" stroke="#fff" stroke-width="2.300"/><path d="M7.800 4.500V2.800" stroke="#fff" stroke-width="1.300"/><circle cx="7.800" cy="2" r="1.200" fill="none" stroke="#fff" stroke-width="1"/><path d="M2.200 5.500l1 1M14 5l-1 1" stroke="#fff" stroke-width="1.300"/><circle cx="8.600" cy="12.200" r="2.300" fill="#fff"/><circle cx="14.600" cy="12.200" r="2.300" fill="#fff"/><rect x="6.800" y="14.800" width="10" height="6" rx="1" fill="#fff"/><path d="M17 16.500l2.500-1v4.500l-2.500-1z" fill="#fff"/></svg>
<div style="left:1599px;top:40px;width:156.5px;height:38px;background:#1ba1e6;border-radius:4px;"></div>
<div style="left:1760px;top:40px;width:153.5px;height:38px;background:#1ba1e6;border-radius:4px;"></div>
<svg style="left:1606px;top:48px;" width="24" height="23" viewBox="0 0 24 23"><circle cx="10" cy="10" r="8.500" fill="none" stroke="#fff" stroke-width="2"/><ellipse cx="10" cy="10" rx="3.800" ry="8.500" fill="none" stroke="#fff" stroke-width="1.800"/><path d="M1.500 10h17M3 5.500h14M3 14.500h8" stroke="#fff" stroke-width="1.800"/><rect x="9.500" y="11.500" width="13" height="10" rx="1.500" fill="#fff" stroke="#1ba1e6" stroke-width="1.500"/><rect x="13" y="9.800" width="5" height="3" fill="#fff"/><circle cx="16" cy="16.500" r="2.700" fill="#1ba1e6"/><circle cx="16" cy="16.500" r="1.300" fill="#fff"/></svg>
<span class="t" id="t7" style="left:1635.6px;top:50.83px;font-size:16.5px;color:#fff;font-weight:700;letter-spacing:-0.290px;">World Capture</span>
<svg style="left:1769px;top:49px;" width="22" height="22" viewBox="0 0 22 22"><path d="M20.500 1.500c-6-.5-10.500 2.500-13 7.500l-4 .5-2.500 3.500 4.500 0 4.500 4.500 0 4 3.500-2.500.5-4c5-2.500 7.500-7 6.500-13.500z" fill="#fff"/><circle cx="14.500" cy="7.500" r="2" fill="#1ba1e6"/><path d="M2.500 14.500l5 5" stroke="#1ba1e6" stroke-width="1.500"/><path d="M1.500 20.500l1-4 3 3z" fill="#fff"/></svg>
<span class="t" id="t8" style="left:1796.5px;top:50.83px;font-size:16.5px;color:#fff;font-weight:700;letter-spacing:-0.276px;">Publish Game</span>
<span class="t" id="t9" style="left:15.7px;top:98.20px;font-size:16.3px;color:#f0f0f2;letter-spacing:0.092px;">Max Players</span>
<div style="left:117px;top:90px;width:35px;height:33px;background:#1c1f29;border-radius:4px;"></div>
<span class="t" id="t10" style="left:123.5px;top:97.70px;font-size:16.3px;color:#f0f0f2;">8</span>
<span class="t" id="t11" style="left:177.3px;top:98.20px;font-size:16.3px;color:#f0f0f2;letter-spacing:0.473px;">Performance Limits:</span>
<svg style="left:361px;top:96px;" width="20" height="20.5" viewBox="0 0 20 20.5"><path d="M10 .8l8.500 4.200v10.400L10 19.800 1.500 15.400V5z" fill="#fff"/><path d="M1.500 5L10 9.400l8.500-4.400M10 9.400v10.400" fill="none" stroke="#282a35" stroke-width="1.300"/></svg>
<div style="left:396px;top:94px;width:210px;height:24.7px;background:#090a0f;border-radius:4px;"></div>
<div style="left:671px;top:94px;width:210px;height:24.7px;background:#090a0f;border-radius:4px;"></div>
<div style="left:946px;top:94px;width:210px;height:24.7px;background:#090a0f;border-radius:4px;"></div>
<span class="t" id="t12" style="left:539.6px;top:100.54px;font-size:12px;color:#f0f0f2;letter-spacing:0.376px;">16/30,000</span>
<span class="t" id="t13" style="left:828px;top:100.54px;font-size:12px;color:#f0f0f2;letter-spacing:0.492px;">0/4,000</span>
<span class="t" id="t14" style="left:1082.4px;top:100.54px;font-size:12px;color:#f0f0f2;letter-spacing:0.577px;">0MB/75MB</span>
<svg style="left:636px;top:96px;" width="20" height="20.5" viewBox="0 0 20 20.5"><path d="M10 .8l8.500 4.200v10.400L10 19.800 1.500 15.400V5z" fill="#fff"/><path d="M1.500 5L10 9.400l8.500-4.400M10 9.400v10.400" fill="none" stroke="#282a35" stroke-width="1.300"/><rect x="9.500" y="9.500" width="10.500" height="11" fill="#282a35"/><rect x="11" y="10.800" width="8" height="9.200" rx="1" fill="#fff"/><path d="M12.500 13.200h5M12.500 15.500h5" stroke="#282a35" stroke-width="1.200"/><rect x="14" y="17.200" width="2" height="1.500" fill="#282a35"/></svg>
<svg style="left:909px;top:95px;" width="24" height="22" viewBox="0 0 24 22"><path d="M4.800 14.500L5.600 6.800a3.700 3.700 0 0 1 7.300-.400L13.500 9L17.200 1.800L22.300 14.500Z" fill="#fff"/><circle cx="9.200" cy="6.300" r="2.300" fill="#282a35"/><ellipse cx="12" cy="16.400" rx="10" ry="3.200" fill="#fff"/><path d="M12 14.300L22.500 16.600" stroke="#282a35" stroke-width="1.200"/></svg>
<div style="left:1631px;top:88px;width:56px;height:36.8px;background:#1ba1e6;border-radius:4px;"></div>
<svg style="left:1669px;top:103.5px;" width="10" height="5.8" viewBox="0 0 10 5.800"><path d="M0 0h10l-5 5.800z" fill="#fff"/></svg>
<svg style="left:1638px;top:95px;" width="22" height="23" viewBox="0 0 22 23"><rect x="2" y="1.500" width="17" height="19" rx="2.500" fill="#fff"/><path d="M2 5.500h17M2 9.800h17" stroke="#1ba1e6" stroke-width="1.700"/><circle cx="10.500" cy="15.800" r="2" fill="#1ba1e6"/></svg>
<div style="left:1695px;top:88px;width:37px;height:36.8px;background:#1ba1e6;border-radius:4px;"></div>
<svg style="left:1702.5px;top:95px;" width="22" height="22" viewBox="0 0 22 22"><circle cx="11" cy="11" r="9" fill="none" stroke="#fff" stroke-width="2.200"/><path d="M5.500 13.500a5.500 5.500 0 0 1 9-5.500M17 10.500a5.500 5.500 0 0 1-.5 4" fill="none" stroke="#fff" stroke-width="1.800"/><path d="M10 13.500l5-6.500-2.500 7.500z" fill="#fff"/><circle cx="11" cy="13.500" r="1.800" fill="#fff"/></svg>
<div style="left:1747px;top:88px;width:161px;height:36.8px;background:#1ba1e6;border-radius:4px;"></div>
<svg style="left:1889.5px;top:103.5px;" width="10" height="5.8" viewBox="0 0 10 5.800"><path d="M0 0h10l-5 5.800z" fill="#fff"/></svg>
<svg style="left:1755px;top:99px;" width="22" height="15" viewBox="0 0 22 15"><path d="M1 7.500C4.500 2 8 .8 11 .8s6.500 1.200 10 6.700c-3.500 5.500-7 6.700-10 6.700S4.500 13 1 7.500z" fill="#fff"/><circle cx="11" cy="7.500" r="4.600" fill="#1ba1e6"/><circle cx="11" cy="7.500" r="2.500" fill="#fff"/></svg>
<span class="t" id="t15" style="left:1783.4px;top:97.83px;font-size:16.5px;color:#fff;font-weight:700;letter-spacing:-0.129px;">Default View</span>
<svg style="left:4px;top:142px;" width="30" height="28" viewBox="0 0 30 28"><path d="M2.500 16.400C2.200 10 3 5.500 4.800 3.500C7 1.800 10 2.300 12 3.600H16.300C18.300 2.300 21 2 22.800 3.800C24.200 6 24.500 9.500 24.500 13L19 8L13.500 13.500L12 12.500C10 13.500 8 16 6 17.500C4.500 18.300 3 17.800 2.500 16.400Z" fill="#1ba1e6"/><path d="M15.800 9.200L25.500 18.500" stroke="#282a35" stroke-width="7.500"/><path d="M10.600 24L19.800 14.400" stroke="#1ba1e6" stroke-width="2.500"/><path d="M16.600 10L24.600 17.600" stroke="#1ba1e6" stroke-width="4.300"/></svg>
<span class="t" id="t16" style="left:36.2px;top:148.00px;font-size:16.3px;color:#1ba1e6;letter-spacing:0.278px;">Camera Capture Tutorial</span>
<svg style="left:229.7px;top:150px;" width="11.4" height="10.6" viewBox="0 0 11.4 10.6"><path d="M.800 .700l9.800 9.200M10.600 .700l-9.800 9.200" stroke="#1ba1e6" stroke-width="1.900"/></svg>
<svg style="left:1377px;top:144px;" width="24" height="23" viewBox="0 0 24 23"><path d="M0 .600h4v4H0zM6 .600h17.300v4H6zM6 6.500h3.500v3.800H6zM11 6.500h12.300v3.800H11zM6 12.400h3.500v3.800H6zM11 12.400h12.300v3.800H11zM0 18.300h4v4.200H0zM6 18.300h17.300v4.200H6z" fill="#1ba1e6"/></svg>
<span class="t" id="t17" style="left:1408.7px;top:148.00px;font-size:16.3px;color:#1ba1e6;letter-spacing:0.141px;">Hierarchy</span>
<svg style="left:1488px;top:150.3px;" width="11.4" height="10.6" viewBox="0 0 11.4 10.6"><path d="M.800 .700l9.800 9.200M10.600 .700l-9.800 9.200" stroke="#1ba1e6" stroke-width="1.900"/></svg>
<svg style="left:1377px;top:631px;" width="26" height="26" viewBox="0 0 26 26"><path d="M9.200 1h3.600l.5 2.600 1.800.8 2.200-1.500 2.500 2.500-1.500 2.200.8 1.800 2.600.5v3.600l-2.600.5-.8 1.800 1.500 2.200-2.500 2.500-2.200-1.500-1.800.8-.5 2.600H9.200l-.5-2.600-1.800-.8-2.200 1.500-2.500-2.500 1.500-2.200-.8-1.800L.3 13.500V9.900l2.600-.5.800-1.800-1.500-2.200 2.500-2.500 2.200 1.500 1.800-.8z" fill="#1ba1e6"/><circle cx="11" cy="11.700" r="4" fill="#282a35"/><path d="M8 25l7-7" stroke="#282a35" stroke-width="5"/><path d="M9 24l7.500-7.500" stroke="#1ba1e6" stroke-width="2.600"/><path d="M14 12.500a4.500 4.500 0 0 1 7-1l-2.500 2.500 1 2 2.500-.5a4.500 4.500 0 0 1-6.500 2.500z" fill="#1ba1e6" stroke="#282a35" stroke-width="1"/></svg>
<span class="t" id="t18" style="left:1408.7px;top:634.00px;font-size:16.3px;color:#1ba1e6;letter-spacing:0.510px;">Properties</span>
<svg style="left:1496px;top:637.3px;" width="11.4" height="10.6" viewBox="0 0 11.4 10.6"><path d="M.800 .700l9.800 9.200M10.600 .700l-9.800 9.200" stroke="#1ba1e6" stroke-width="1.900"/></svg>
<svg style="left:6px;top:787px;" width="24" height="20" viewBox="0 0 24 20"><path d="M.200 .200h7.800l2 2.600h10.300v3.200H5.500L2 17.500 .200 18.500z" fill="#484d5f"/><path d="M6 7.200h17.300l-3.800 11.600H1.800z" fill="#484d5f"/></svg>
<svg style="left:14.5px;top:794.5px;" width="15.5" height="15.5" viewBox="-1 -1 16 16"><path d="M13.600 .400c-4.200-.200-7.300 1.600-9.200 5l-2.600 .500-1.500 2.600h3.100l2.900 2.900v3.100l2.600-1.500 .500-2.600c3.400-1.900 5.200-5 4.200-10z" fill="#484d5f" stroke="#1c1f29" stroke-width="2.200" paint-order="stroke"/><path d="M13.600 .400c-4.200-.200-7.300 1.600-9.200 5l-2.600 .500-1.500 2.600h3.100l2.900 2.900v3.100l2.600-1.500 .500-2.600c3.400-1.900 5.200-5 4.200-10z" fill="#484d5f"/><circle cx="9.600" cy="4.600" r="1.300" fill="#1c1f29"/><path d="M.500 13.800l.700-3.200 2.500 2.500z" fill="#484d5f"/></svg>
<span class="t" id="t19" style="left:36.5px;top:790.00px;font-size:16.3px;color:#484d5f;letter-spacing:0.384px;">Project Content</span>
<svg style="left:164px;top:793.1px;" width="11.4" height="10.6" viewBox="0 0 11.4 10.6"><path d="M.800 .700l9.800 9.200M10.600 .700l-9.800 9.200" stroke="#484d5f" stroke-width="1.900"/></svg>
<svg style="left:189.2px;top:786.9px;" width="22.4" height="23" viewBox="0 0 27 29"><path d="M13.200 .700L25.300 8.500V21.700L13.200 28.300L.900 21.700V8.500Z" fill="#1ba1e6"/><path d="M2.600 9.300C8 5.500 18.500 5.500 24 9.300C23 16 19.500 21 14.200 23.200V28.300H12.400V23.200C7 21 3.500 16 2.600 9.300Z" fill="#282a35"/><circle cx="13.400" cy="14.200" r="6.700" fill="#1ba1e6"/></svg>
<span class="t" id="t20" style="left:219.1px;top:790.00px;font-size:16.3px;color:#1ba1e6;letter-spacing:0.223px;">Core Content</span>
<svg style="left:326.7px;top:793.1px;" width="11.4" height="10.6" viewBox="0 0 11.4 10.6"><path d="M.800 .700l9.800 9.200M10.600 .700l-9.800 9.200" stroke="#1ba1e6" stroke-width="1.900"/></svg>
<svg style="left:355px;top:787px;" width="22" height="26" viewBox="0 0 22 26"><rect x="2" y="4" width="16" height="20" rx="1.500" fill="none" stroke="#484d5f" stroke-width="2"/><rect x="6" y="1" width="8" height="5" rx="1" fill="#484d5f"/><path d="M5.500 11h9M5.500 15h9M5.500 19h9" stroke="#484d5f" stroke-width="1.600"/></svg>
<span class="t" id="t21" style="left:383.4px;top:790.00px;font-size:16.3px;color:#484d5f;letter-spacing:0.146px;">Event Log</span>
<svg style="left:466px;top:793.1px;" width="11.4" height="10.6" viewBox="0 0 11.4 10.6"><path d="M.800 .700l9.800 9.200M10.600 .700l-9.800 9.200" stroke="#484d5f" stroke-width="1.900"/></svg>
<span class="t" id="t22" style="left:1384.2px;top:193.73px;font-size:16.5px;color:#e8821a;font-weight:700;letter-spacing:0.204px;">Main</span>
<div style="left:1873px;top:183px;width:38px;height:38px;background:#1ba1e6;border-radius:4px;"></div>
<svg style="left:1880px;top:190px;" width="24" height="24" viewBox="0 0 24 24"><path d="M2 9.500h20v12.500h-20z" fill="#fff"/><path d="M1.500 4.500l20-3.500.8 3.800-20 3.500z" fill="#fff"/><path d="M5 4l2.500 3M10 3l2.500 3M15 2.200l2.500 3" stroke="#1ba1e6" stroke-width="1.800"/><path d="M17 11.500c-3 0-5 1.500-6 3.500l-2 .3-1 1.700h2l2 2v2l1.700-1 .3-2c2-1 3.500-3 3-6.500z" fill="#1ba1e6"/></svg>
<div style="left:1380.5px;top:226.3px;width:395.5px;height:36.7px;background:#1c1f29;border-radius:4px;"></div>
<svg style="left:1391px;top:235px;" width="19" height="19" viewBox="0 0 19 19"><circle cx="11.500" cy="7" r="5.200" fill="none" stroke="#1ba1e6" stroke-width="2.200"/><path d="M7.800 10.800L1.500 17.500" stroke="#1ba1e6" stroke-width="2.800" stroke-linecap="round"/></svg>
<span class="t" id="t23" style="left:1416.4px;top:235.80px;font-size:15px;color:#62656f;letter-spacing:-0.448px;">Search</span>
<div style="left:1788px;top:226px;width:38px;height:37px;background:#1c1f29;border-radius:4px;"></div>
<svg style="left:1795px;top:234px;" width="26" height="24" viewBox="0 0 26 24"><path d="M9.500 1l8.500 4.200v9.600L9.500 19 1 14.800V5.200z" fill="#e8821a"/><path d="M1 5.200l8.500 4.200 8.500-4.200M9.500 9.400v9.600" fill="none" stroke="#1c1f29" stroke-width="1.300"/><circle cx="19" cy="16.500" r="5.300" fill="#e8821a" stroke="#1c1f29" stroke-width="1.500"/></svg>
<div style="left:1831px;top:226px;width:37px;height:37px;background:#1ba1e6;border-radius:4px;"></div>
<svg style="left:1838.5px;top:234.5px;" width="20" height="20" viewBox="0 0 20 20"><path d="M1 1h18l-7 8.500v0l-1.200 0-2.800 0z" fill="#fff"/><path d="M8 9.500h4v5.500l-2.800 3.200z" fill="#fff"/><path d="M9.300 10.500l3 1.500" stroke="#1ba1e6" stroke-width="0"/></svg>
<div style="left:1873px;top:226px;width:38px;height:37px;background:#1ba1e6;border-radius:4px;"></div>
<svg style="left:1881px;top:233px;" width="22" height="23" viewBox="0 0 22 23"><path d="M11 3.500v12.500" stroke="#fff" stroke-width="2.800"/><path d="M3.200 11L11 3.200l7.800 7.800" fill="none" stroke="#fff" stroke-width="2.800"/><path d="M2 20.500h18" stroke="#fff" stroke-width="2.800"/></svg>
<div style="left:1379px;top:407.3px;width:533.5px;height:32px;border:1.800px solid #1ba1e6;box-sizing:border-box"></div>
<div style="left:1379px;top:439.5px;width:533.5px;height:32px;border:1.800px solid #1ba1e6;box-sizing:border-box"></div>
<div style="left:1379px;top:471.7px;width:533.5px;height:31.9px;border:1.800px solid #1ba1e6;box-sizing:border-box"></div>
<span class="t" id="t24" style="left:1424.7px;top:285.10px;font-size:16.3px;color:#f0f0f2;letter-spacing:0.253px;">Gameplay Settings</span>
<svg style="left:1396.2px;top:284.2px;" width="21" height="21" viewBox="0 0 21 21"><path d="M1 2.500h6.500l1.500 2h8v2.500H4.500L1.500 15H1z" fill="#fff"/><path d="M5 8h14l-3.200 8H1.800z" fill="#fff"/></svg>
<svg style="left:1380.7px;top:287.2px;" width="8" height="12" viewBox="0 0 8 12"><path d="M1.200 1.200l5.600 4.800-5.600 4.800z" fill="none" stroke="#8a8d98" stroke-width="1.400"/></svg>
<svg style="left:1861.5px;top:286.7px;" width="18" height="13" viewBox="0 0 22 15"><path d="M1 7.500C4.500 2 8 .8 11 .8s6.500 1.200 10 6.700c-3.500 5.500-7 6.700-10 6.700S4.500 13 1 7.500z" fill="#fff"/><circle cx="11" cy="7.500" r="4.600" fill="#282a35"/><circle cx="11" cy="7.500" r="2.500" fill="#fff"/></svg>
<svg style="left:1889px;top:284.2px;" width="13" height="17" viewBox="0 0 13 17"><rect x="1" y="6.500" width="10.500" height="9" rx="1.200" fill="#1e212b"/><path d="M3.300 7V4.500a3 3 0 0 1 6 0V7" fill="none" stroke="#1e212b" stroke-width="1.800"/></svg>
<span class="t" id="t25" style="left:1424.7px;top:317.70px;font-size:16.3px;color:#f0f0f2;letter-spacing:0.208px;">Spawn Point</span>
<svg style="left:1396.2px;top:316.8px;" width="21" height="21" viewBox="0 0 21 21"><path d="M2 7.500a6.500 6.500 0 1 1 12.500 2.500l-4.500 7.500c-.5.800-1.500.8-2 0L3 10.500a6.500 6.500 0 0 1-1-3z" fill="#fff"/><circle cx="7.200" cy="6.500" r="2" fill="#282a35"/><circle cx="13.500" cy="10.500" r="3.300" fill="#fff" stroke="#282a35" stroke-width="1.200"/><path d="M7.500 19.500c0-6 12-6 12 0z" fill="#fff" stroke="#282a35" stroke-width="1.200"/></svg>
<svg style="left:1861.5px;top:319.3px;" width="18" height="13" viewBox="0 0 22 15"><path d="M1 7.500C4.500 2 8 .8 11 .8s6.500 1.200 10 6.700c-3.500 5.500-7 6.700-10 6.700S4.500 13 1 7.500z" fill="#fff"/><circle cx="11" cy="7.500" r="4.600" fill="#282a35"/><circle cx="11" cy="7.500" r="2.500" fill="#fff"/></svg>
<svg style="left:1889px;top:316.8px;" width="13" height="17" viewBox="0 0 13 17"><rect x="1" y="6.500" width="10.500" height="9" rx="1.200" fill="#1e212b"/><path d="M3.300 7V4.500a3 3 0 0 1 6 0V7" fill="none" stroke="#1e212b" stroke-width="1.800"/></svg>
<span class="t" id="t26" style="left:1424.7px;top:349.90px;font-size:16.3px;color:#f0f0f2;letter-spacing:0.104px;">Default Sky</span>
<svg style="left:1396.2px;top:349px;" width="21" height="21" viewBox="0 0 21 21"><path d="M1 2.500h6.500l1.500 2h8v2.500H4.500L1.500 15H1z" fill="#fff"/><path d="M5 8h14l-3.200 8H1.800z" fill="#fff"/><path d="M15 11l4.500 2.200v5L15 20.500l-4.500-2.300v-5z" fill="#fff" stroke="#282a35" stroke-width="1.300"/><path d="M10.500 13.200l4.500 2.200 4.500-2.200M15 15.400v5" fill="none" stroke="#282a35" stroke-width="1"/></svg>
<svg style="left:1380.7px;top:352px;" width="8" height="12" viewBox="0 0 8 12"><path d="M1.200 1.200l5.600 4.800-5.600 4.800z" fill="none" stroke="#8a8d98" stroke-width="1.400"/></svg>
<svg style="left:1861.5px;top:351.5px;" width="18" height="13" viewBox="0 0 22 15"><path d="M1 7.500C4.500 2 8 .8 11 .8s6.500 1.200 10 6.700c-3.500 5.500-7 6.700-10 6.700S4.500 13 1 7.500z" fill="#fff"/><circle cx="11" cy="7.500" r="4.600" fill="#282a35"/><circle cx="11" cy="7.500" r="2.500" fill="#fff"/></svg>
<svg style="left:1889px;top:349px;" width="13" height="17" viewBox="0 0 13 17"><rect x="1" y="6.500" width="10.500" height="9" rx="1.200" fill="#1e212b"/><path d="M3.300 7V4.500a3 3 0 0 1 6 0V7" fill="none" stroke="#1e212b" stroke-width="1.800"/></svg>
<span class="t" id="t27" style="left:1424.7px;top:382.70px;font-size:16.3px;color:#f0f0f2;letter-spacing:0.224px;">Default Floor</span>
<svg style="left:1396.7px;top:382.3px;" width="17" height="17.5" viewBox="0 0 20 20.5"><path d="M10 .8l8.500 4.200v10.400L10 19.800 1.500 15.400V5z" fill="#fff"/><path d="M1.500 5L10 9.400l8.500-4.400M10 9.400v10.400" fill="none" stroke="#282a35" stroke-width="1.300"/></svg>
<svg style="left:1861.5px;top:384.3px;" width="18" height="13" viewBox="0 0 22 15"><path d="M1 7.500C4.500 2 8 .8 11 .8s6.500 1.200 10 6.700c-3.500 5.500-7 6.700-10 6.700S4.500 13 1 7.500z" fill="#fff"/><circle cx="11" cy="7.500" r="4.600" fill="#282a35"/><circle cx="11" cy="7.500" r="2.500" fill="#fff"/></svg>
<svg style="left:1889px;top:381.8px;" width="13" height="17" viewBox="0 0 13 17"><rect x="1" y="6.500" width="10.500" height="9" rx="1.200" fill="#1e212b"/><path d="M3.300 7V4.500a3 3 0 0 1 6 0V7" fill="none" stroke="#1e212b" stroke-width="1.800"/></svg>
<span class="t" id="t28" style="left:1424.7px;top:415.00px;font-size:16.3px;color:#f0f0f2;letter-spacing:0.205px;">ClientContext</span>
<svg style="left:1396.2px;top:414.1px;" width="21" height="21" viewBox="0 0 21 21"><path d="M1 2.500h6.500l1.500 2h8v2.500H4.500L1.500 15H1z" fill="#fff"/><path d="M5 8h14l-3.200 8H1.800z" fill="#fff"/><path d="M15.500 9.500a4 4 0 0 1 4 4c0 2.500-4 7-4 7s-4-4.500-4-7a4 4 0 0 1 4-4z" fill="#fff" stroke="#282a35" stroke-width="1.300"/><circle cx="15.500" cy="13.500" r="1.500" fill="#282a35"/></svg>
<svg style="left:1379.7px;top:417.1px;" width="10" height="10" viewBox="0 0 10 10"><path d="M9 1v8h-8.500z" fill="#c9cad0"/></svg>
<svg style="left:1861.5px;top:416.6px;" width="18" height="13" viewBox="0 0 22 15"><path d="M1 7.500C4.500 2 8 .8 11 .8s6.500 1.200 10 6.700c-3.500 5.500-7 6.700-10 6.700S4.500 13 1 7.500z" fill="#fff"/><circle cx="11" cy="7.500" r="4.600" fill="#282a35"/><circle cx="11" cy="7.500" r="2.500" fill="#fff"/></svg>
<svg style="left:1889px;top:414.1px;" width="13" height="17" viewBox="0 0 13 17"><rect x="1" y="6.500" width="10.500" height="9" rx="1.200" fill="#1e212b"/><path d="M3.300 7V4.500a3 3 0 0 1 6 0V7" fill="none" stroke="#1e212b" stroke-width="1.800"/></svg>
<span class="t" id="t29" style="left:1436.3px;top:447.70px;font-size:16.3px;color:#f0f0f2;letter-spacing:0.226px;">UI Container (client)</span>
<svg style="left:1408.3px;top:447.3px;" width="18" height="17" viewBox="0 0 18 17"><rect x="1" y="1.500" width="16" height="13.500" fill="none" stroke="#fff" stroke-width="1.600"/><rect x="1" y="1.500" width="16" height="3" fill="#fff"/></svg>
<svg style="left:1391.3px;top:449.8px;" width="10" height="10" viewBox="0 0 10 10"><path d="M9 1v8h-8.500z" fill="#c9cad0"/></svg>
<svg style="left:1861.5px;top:449.3px;" width="18" height="13" viewBox="0 0 22 15"><path d="M1 7.500C4.500 2 8 .8 11 .8s6.500 1.200 10 6.700c-3.500 5.500-7 6.700-10 6.700S4.500 13 1 7.500z" fill="#fff"/><circle cx="11" cy="7.500" r="4.600" fill="#282a35"/><circle cx="11" cy="7.500" r="2.500" fill="#fff"/></svg>
<svg style="left:1889px;top:446.8px;" width="13" height="17" viewBox="0 0 13 17"><rect x="1" y="6.500" width="10.500" height="9" rx="1.200" fill="#1e212b"/><path d="M3.300 7V4.500a3 3 0 0 1 6 0V7" fill="none" stroke="#1e212b" stroke-width="1.800"/></svg>
<span class="t" id="t30" style="left:1448.9px;top:480.00px;font-size:16.3px;color:#f0f0f2;letter-spacing:0.310px;">UI Image (client)</span>
<svg style="left:1420.9px;top:479.6px;" width="18" height="17" viewBox="0 0 18 17"><rect x="1" y="1.500" width="16" height="14" fill="none" stroke="#fff" stroke-width="1.600"/><path d="M3.500 12.500l3.500-5 2.500 3 2-2 3 4z" fill="#fff"/><circle cx="11.500" cy="6" r="1.300" fill="#fff"/></svg>
<svg style="left:1861.5px;top:481.6px;" width="18" height="13" viewBox="0 0 22 15"><path d="M1 7.500C4.500 2 8 .8 11 .8s6.500 1.200 10 6.700c-3.500 5.500-7 6.700-10 6.700S4.500 13 1 7.500z" fill="#fff"/><circle cx="11" cy="7.500" r="4.600" fill="#282a35"/><circle cx="11" cy="7.500" r="2.500" fill="#fff"/></svg>
<svg style="left:1889px;top:479.1px;" width="13" height="17" viewBox="0 0 13 17"><rect x="1" y="6.500" width="10.500" height="9" rx="1.200" fill="#1e212b"/><path d="M3.300 7V4.500a3 3 0 0 1 6 0V7" fill="none" stroke="#1e212b" stroke-width="1.800"/></svg>
<svg style="left:1389.5px;top:675.5px;" width="27" height="27.5" viewBox="0 0 20 20.5"><path d="M10 .8l8.500 4.200v10.400L10 19.800 1.500 15.400V5z" fill="#1ba1e6"/><path d="M1.500 5L10 9.400l8.500-4.400M10 9.400v10.400" fill="none" stroke="#282a35" stroke-width="1.300"/></svg>
<div style="left:1434px;top:669px;width:469.5px;height:39.5px;background:#1c1f29;border-radius:4px;"></div>
<span class="t" id="t31" style="left:1441px;top:679.70px;font-size:16.3px;color:#f0f0f2;letter-spacing:1.470px;">-----</span>
<div style="left:1380px;top:713px;width:446px;height:37.5px;background:#1c1f29;border-radius:4px;"></div>
<svg style="left:1390px;top:722px;" width="19" height="19" viewBox="0 0 19 19"><circle cx="11.500" cy="7" r="5.200" fill="none" stroke="#1ba1e6" stroke-width="2.200"/><path d="M7.800 10.800L1.500 17.500" stroke="#1ba1e6" stroke-width="2.800" stroke-linecap="round"/></svg>
<span class="t" id="t32" style="left:1415.2px;top:724.50px;font-size:15px;color:#62656f;letter-spacing:0.163px;">Find Property by Name</span>
<div style="left:1828px;top:713px;width:38px;height:37.5px;background:#1d6f9c;border-radius:4px;"></div>
<div style="left:1868px;top:713px;width:38px;height:37.5px;background:#1d6f9c;border-radius:4px;"></div>
<svg style="left:1837px;top:721px;" width="20" height="22" viewBox="0 0 20 22"><path d="M6 1.500h7l4 4v11.500h-11z" fill="none" stroke="#23262f" stroke-width="1.800"/><path d="M13 1.500v4h4" fill="none" stroke="#23262f" stroke-width="1.500"/><path d="M3 5.500v14h9" fill="none" stroke="#23262f" stroke-width="1.800"/></svg>
<svg style="left:1877px;top:721px;" width="20" height="22" viewBox="0 0 20 22"><rect x="3" y="3.500" width="14" height="16.500" rx="1" fill="none" stroke="#23262f" stroke-width="1.800"/><rect x="6.500" y="1" width="7" height="5" rx="1" fill="#23262f"/></svg>
<svg style="left:1382.5px;top:764.5px;" width="11" height="8" viewBox="0 0 11 8"><path d="M0 0h10l-5 7z" fill="#1ba1e6"/></svg>
<span class="t" id="t33" style="left:1400.2px;top:760.93px;font-size:16.5px;color:#1ba1e6;font-weight:700;letter-spacing:-0.206px;">Scene</span>
<span class="t" id="t34" style="left:1399px;top:801.30px;font-size:16.3px;color:#f0f0f2;letter-spacing:0.587px;">Visibility</span>
<div style="left:1560px;top:793px;width:182px;height:33px;background:#1ba1e6;border-radius:4px;"></div>
<span class="t" id="t35" style="left:1569.4px;top:801.13px;font-size:16.5px;color:#fff;font-weight:700;letter-spacing:-0.090px;">Inherit from Parent</span>
<svg style="left:1723.2px;top:806.5px;" width="11" height="6.38" viewBox="0 0 10 5.800"><path d="M0 0h10l-5 5.800z" fill="#fff"/></svg>
<span class="t" id="t36" style="left:1399px;top:839.10px;font-size:16.3px;color:#f0f0f2;letter-spacing:0.437px;">Inherited Visibility</span>
<div style="left:1560px;top:832px;width:30px;height:30px;background:#1d1f29;border-radius:4px;"></div>
<svg style="left:1566px;top:840px;" width="17" height="14" viewBox="0 0 17 14"><path d="M2 7.500l4.500 4.500 8.500-9.500" fill="none" stroke="#8a7a7a" stroke-width="3"/></svg>
<span class="t" id="t37" style="left:1399px;top:876.40px;font-size:16.3px;color:#f0f0f2;letter-spacing:0.329px;">Is Advanced</span>
<div style="left:1560px;top:869.5px;width:30px;height:30px;background:#1d1f29;border-radius:4px;"></div>
<svg style="left:1888.5px;top:801.5px;" width="15" height="16" viewBox="0 0 15 16"><path d="M3.500 3.500a6 6 0 1 1-1.500 6" fill="none" stroke="#3e445c" stroke-width="1.700"/><path d="M1 1.500l.5 5 5-.5z" fill="#3e445c"/></svg>
<svg style="left:1888.5px;top:839px;" width="15" height="16" viewBox="0 0 15 16"><path d="M3.500 3.500a6 6 0 1 1-1.500 6" fill="none" stroke="#3e445c" stroke-width="1.700"/><path d="M1 1.500l.5 5 5-.5z" fill="#3e445c"/></svg>
<svg style="left:1888.5px;top:876.5px;" width="15" height="16" viewBox="0 0 15 16"><path d="M3.500 3.500a6 6 0 1 1-1.500 6" fill="none" stroke="#3e445c" stroke-width="1.700"/><path d="M1 1.500l.5 5 5-.5z" fill="#3e445c"/></svg>
<div style="left:1375px;top:903px;width:542px;height:3.5px;background:#1e2029;"></div>
<div style="left:1536px;top:986.5px;width:212px;height:37px;background:#1ba1e6;border-radius:4px;"></div>
<svg style="left:1545px;top:994px;" width="22" height="22" viewBox="0 0 22 22"><path d="M11 1.500v19M1.500 11h19" stroke="#fff" stroke-width="4"/></svg>
<span class="t" id="t38" style="left:1572.3px;top:996.03px;font-size:16.5px;color:#fff;font-weight:700;letter-spacing:-0.251px;">Add Custom Property</span>
<span class="t" id="t39" style="left:9.1px;top:834.48px;font-size:16.8px;color:#1ba1e6;font-weight:700;letter-spacing:-0.059px;">COMMUNITY CONTENT</span>
<svg style="left:19.5px;top:868.3px;" width="23" height="22" viewBox="0 0 23 22"><path d="M1 11.500h5l2 3h6l2-3h5V20H1z" fill="#1ba1e6"/><path d="M3.500 10l2.500-5h2M18.500 10l-2.500-5h-2" fill="none" stroke="#1ba1e6" stroke-width="1.800"/><path d="M11 1v7" stroke="#1ba1e6" stroke-width="3"/><path d="M6.500 6.500h9L11 12z" fill="#1ba1e6"/></svg>
<span class="t" id="t40" style="left:55.5px;top:871.10px;font-size:16.3px;color:#f0f0f2;letter-spacing:0.520px;">Imported Content</span>
<span class="t" id="t41" style="left:9.1px;top:907.58px;font-size:16.8px;color:#1ba1e6;font-weight:700;letter-spacing:-0.812px;">ART OBJECTS</span>
<svg style="left:19.4px;top:941px;" width="23" height="23.8" viewBox="0 0 20 20.5"><path d="M10 .8l8.500 4.200v10.400L10 19.800 1.500 15.400V5z" fill="#1ba1e6"/><path d="M1.500 5L10 9.400l8.500-4.400M10 9.400v10.400" fill="none" stroke="#282a35" stroke-width="1.300"/></svg>
<span class="t" id="t42" style="left:55.5px;top:944.80px;font-size:16.3px;color:#f0f0f2;letter-spacing:0.217px;">3D Objects</span>
<svg style="left:21px;top:978px;" width="22" height="23" viewBox="0 0 22 23"><path d="M2.500 4l7.500-3 10 17.500-3 2.500-14.500 1.500z" fill="#1ba1e6"/><path d="M8 16.500l3.500-9.500 4.500 8M9.500 13h5" fill="none" stroke="#282a35" stroke-width="1.600"/><path d="M4.500 5v15" stroke="#282a35" stroke-width="1"/></svg>
<span class="t" id="t43" style="left:55.5px;top:982.10px;font-size:16.3px;color:#f0f0f2;letter-spacing:0.282px;">3D Text</span>
<svg style="left:248px;top:946.5px;" width="12" height="12" viewBox="0 0 12 12"><path d="M6 0v12M0 6h12" stroke="#1ba1e6" stroke-width="2"/></svg>
<svg style="left:248px;top:983.8px;" width="12" height="12" viewBox="0 0 12 12"><path d="M6 0v12M0 6h12" stroke="#1ba1e6" stroke-width="2"/></svg>
<div style="left:276.5px;top:826.5px;width:4.8px;height:198.5px;background:#1c1f29;"></div>
<div style="left:276.5px;top:826.5px;width:4.8px;height:78px;background:#1ba1e6;"></div>
<div style="left:8px;top:1019px;width:264px;height:6px;background:linear-gradient(#282a35,#15171e)"></div>
<div style="left:30px;top:1020.5px;width:3px;height:4.5px;background:#1ba1e6;"></div>
<div style="left:290.3px;top:824px;width:499.5px;height:37.5px;background:#1c1f29;border-radius:4px;"></div>
<svg style="left:300px;top:833px;" width="19" height="19" viewBox="0 0 19 19"><circle cx="11.500" cy="7" r="5.200" fill="none" stroke="#1ba1e6" stroke-width="2.200"/><path d="M7.800 10.800L1.500 17.500" stroke="#1ba1e6" stroke-width="2.800" stroke-linecap="round"/></svg>
<span class="t" id="t44" style="left:325.7px;top:835.30px;font-size:15px;color:#62656f;letter-spacing:-0.448px;">Search</span>
<div style="left:1300px;top:824px;width:56.5px;height:37.5px;background:#1ba1e6;border-radius:4px;"></div>
<svg style="left:1308px;top:833px;" width="20" height="20" viewBox="0 0 20 20"><path d="M1 1h18l-7 8.500v0l-1.200 0-2.800 0z" fill="#fff"/><path d="M8 9.500h4v5.500l-2.800 3.200z" fill="#fff"/><path d="M9.300 10.500l3 1.500" stroke="#1ba1e6" stroke-width="0"/></svg>
<svg style="left:1338.5px;top:840.3px;" width="9" height="5.22" viewBox="0 0 10 5.800"><path d="M0 0h10l-5 5.800z" fill="#fff"/></svg>
<span class="t" id="t45" style="left:290.3px;top:997.10px;font-size:15px;color:#f0f0f2;letter-spacing:-0.031px;">0 Items</span>
<div style="left:1199px;top:1002.5px;width:105.5px;height:3.5px;background:#1b1d26;border-radius:2px;"></div>
<div style="left:1213px;top:996.700px;width:15.400px;height:15.400px;border-radius:50%;background:#1ba1e6"></div>
<div style="left:1319px;top:986px;width:37.5px;height:38px;background:#1ba1e6;border-radius:4px;"></div>
<svg style="left:1327px;top:995px;" width="22" height="20" viewBox="0 0 22 20"><path d="M1 1h4.500v4.500H1zM7.500 1h14v4.500h-14zM1 7.700h4.500v4.500H1zM7.500 7.700h14v4.500h-14zM1 14.400h4.500v4.500H1zM7.500 14.400h14v4.500h-14z" fill="#fff"/></svg>
</div></body></html>
